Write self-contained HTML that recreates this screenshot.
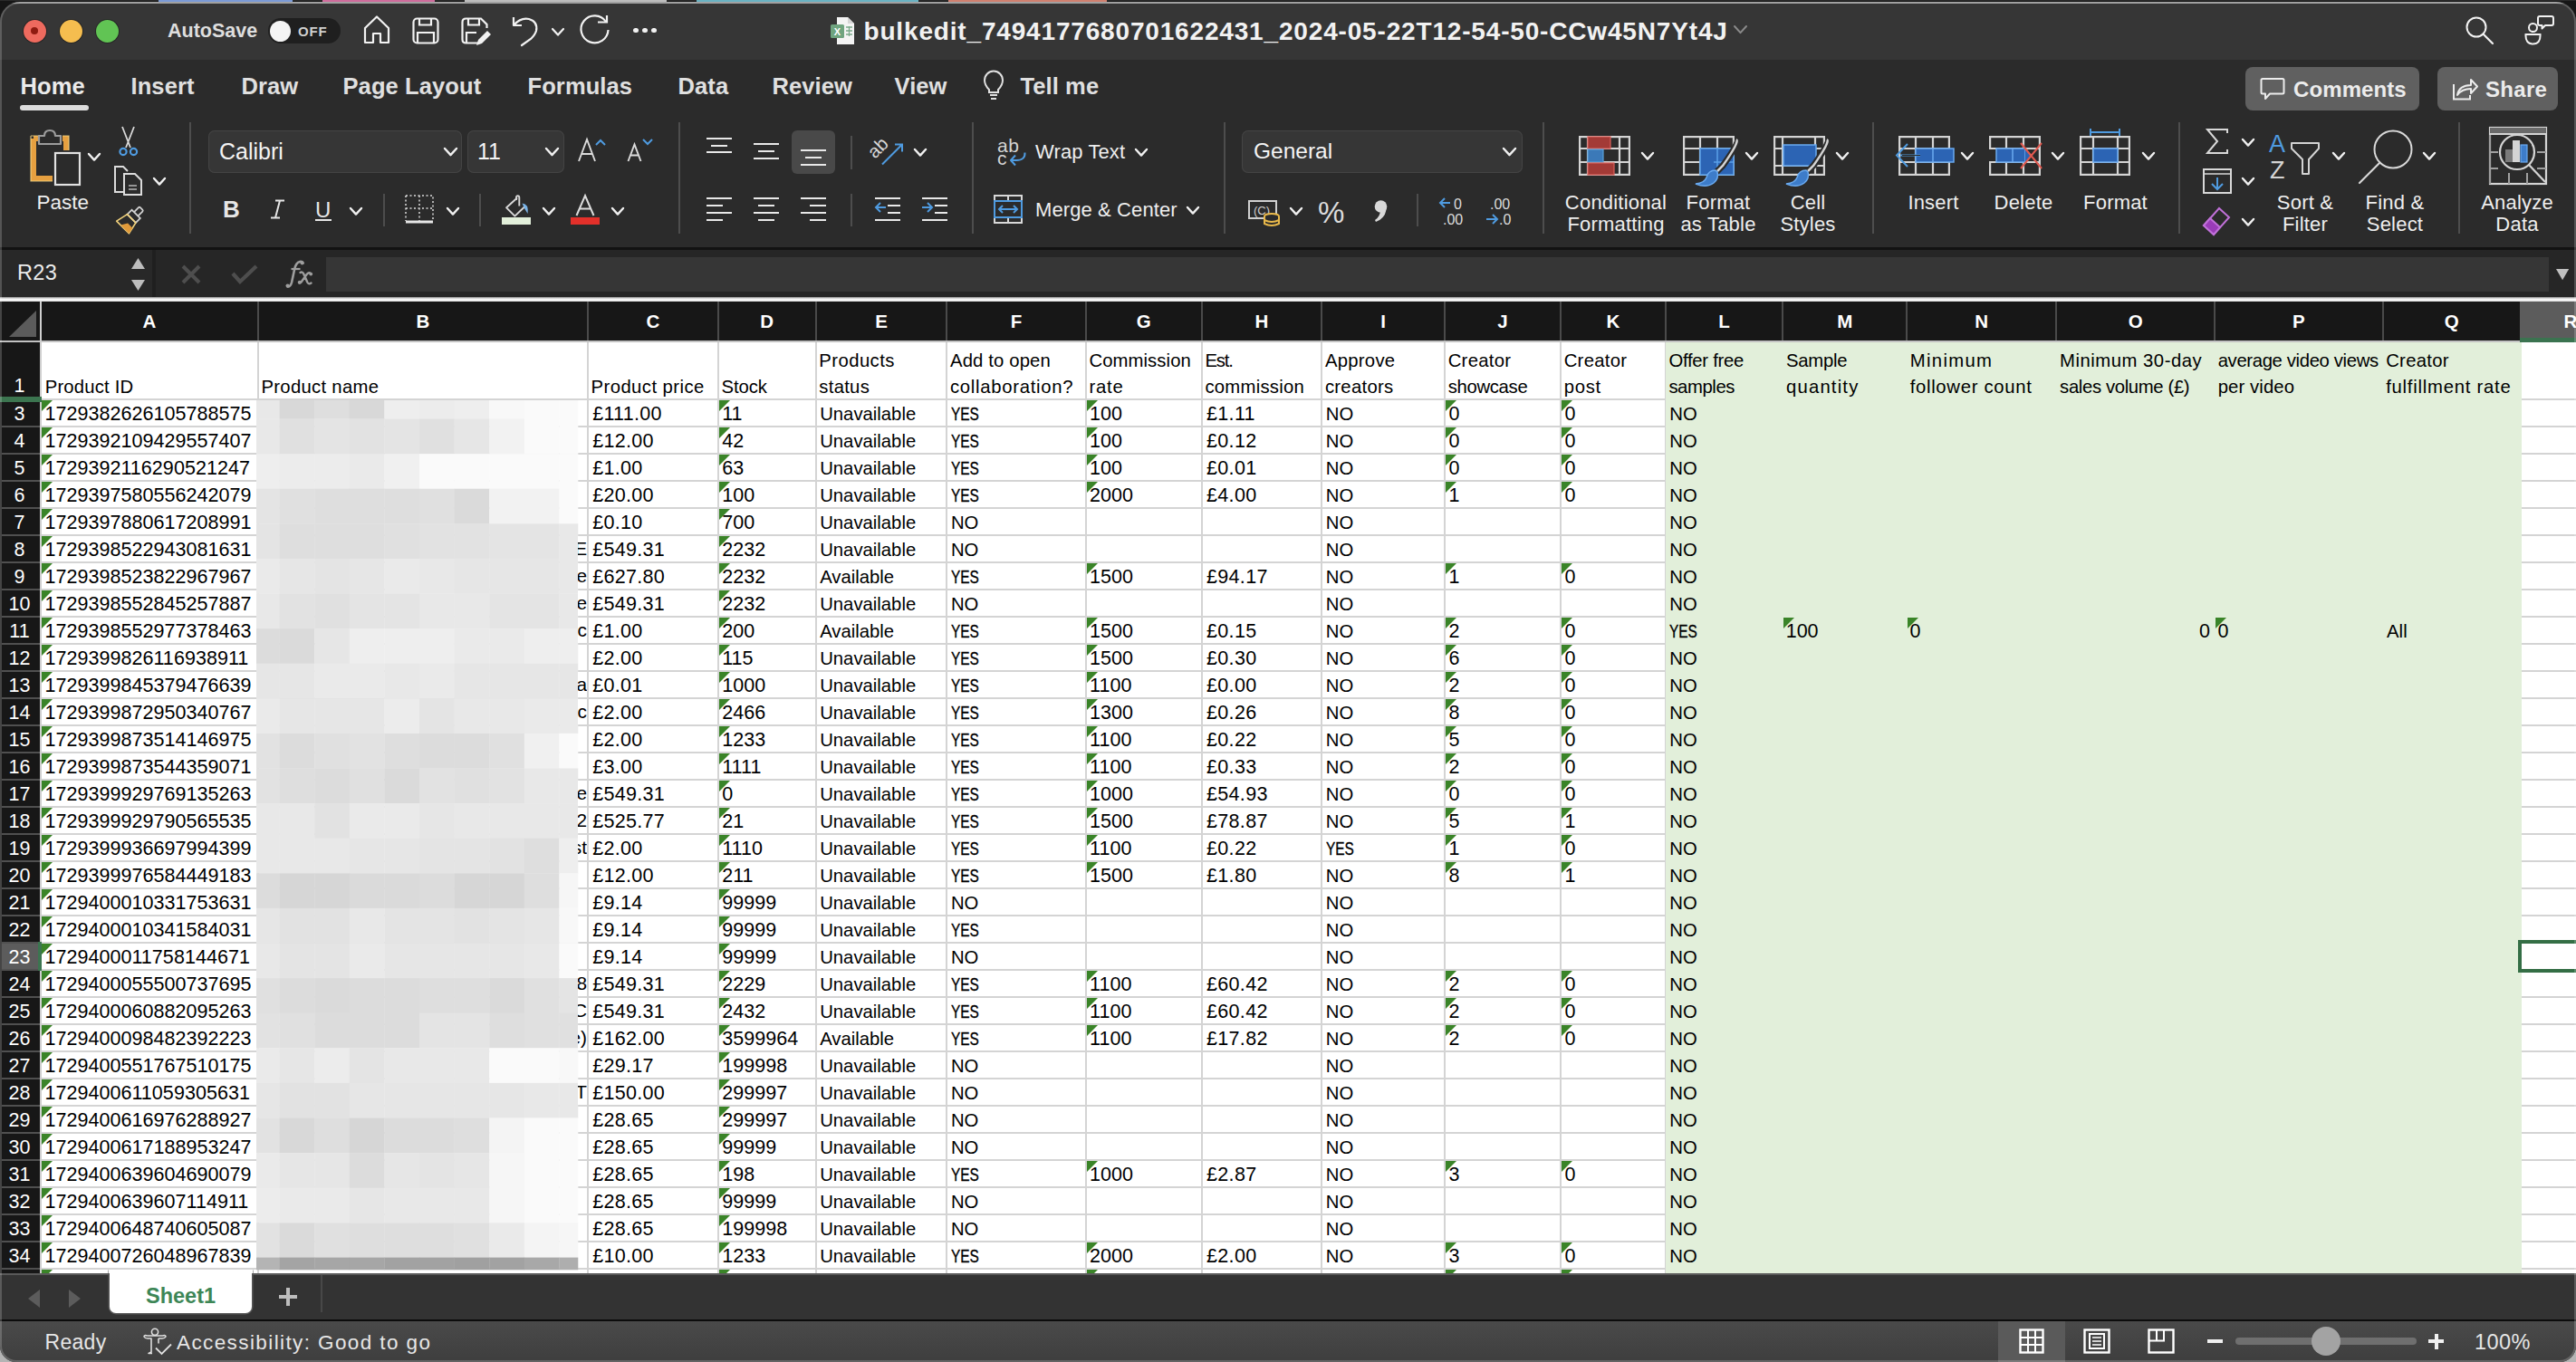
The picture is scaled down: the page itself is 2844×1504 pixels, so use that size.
<!DOCTYPE html><html><head><meta charset="utf-8"><style>
html,body{margin:0;padding:0;}
body{width:2844px;height:1504px;overflow:hidden;background:linear-gradient(#161616 0,#161616 1440px,#b4b4b4 1440px);position:relative;font-family:"Liberation Sans", sans-serif;}
.t{position:absolute;white-space:nowrap;}
.b{position:absolute;}
.s{position:absolute;overflow:visible;}
#win{position:absolute;left:0;top:0;width:2844px;height:1504px;clip-path:inset(2px 0 0 0 round 22px 22px 18px 18px);background:#2b2b2b;}
#frame{position:absolute;left:0;top:2px;width:2844px;height:1502px;border-radius:22px 22px 18px 18px;box-shadow:inset 0 0 0 2px rgba(255,255,255,0.2);pointer-events:none;}
</style></head><body>
<div class="b" style="left:0px;top:0px;width:2844px;height:1px;background:#2b2b2b;"></div><div class="b" style="left:175px;top:0px;width:148px;height:1.5px;background:#7b9ad6;"></div><div class="b" style="left:356px;top:0px;width:124px;height:1.5px;background:#cf6c9c;"></div><div class="b" style="left:513px;top:0px;width:223px;height:1.5px;background:#bdbdbd;"></div><div class="b" style="left:769px;top:0px;width:245px;height:1.5px;background:#69b2c2;"></div><div class="b" style="left:1047px;top:0px;width:175px;height:1.5px;background:#d0806f;"></div><div id="win"><div class="b" style="left:0px;top:0px;width:2844px;height:66px;background:#363636;"></div><div class="b" style="left:0px;top:2px;width:2844px;height:2px;background:#8a8a8a;"></div><div class="b" style="left:25.5px;top:21.5px;width:25px;height:25px;border-radius:50%;background:#ee6a5e;box-shadow:0 0 0 1px #262626"></div><div class="b" style="left:65.5px;top:21.5px;width:25px;height:25px;border-radius:50%;background:#f5bd4f;box-shadow:0 0 0 1px #262626"></div><div class="b" style="left:105.5px;top:21.5px;width:25px;height:25px;border-radius:50%;background:#61c454;box-shadow:0 0 0 1px #262626"></div><div class="b" style="left:34px;top:30px;width:8px;height:8px;border-radius:50%;background:#8e1b10"></div><div class="t" style="left:185.0px;top:23.5px;font-size:21.5px;line-height:21.5px;color:#dedede;font-weight:bold;letter-spacing:0px;font-family:'Liberation Sans', sans-serif;">AutoSave</div><div class="b" style="left:296px;top:20px;width:80px;height:28px;border-radius:14px;background:#1f1f1f"></div><div class="b" style="left:298px;top:22.5px;width:23px;height:23px;border-radius:50%;background:#f4f4f4"></div><div class="t" style="left:329.0px;top:26.5px;font-size:15px;line-height:15px;color:#cfcfcf;font-weight:bold;letter-spacing:0.8px;font-family:'Liberation Sans', sans-serif;">OFF</div><svg class="s" style="left:400px;top:16px" width="32" height="34" viewBox="0 0 32 34"><path d="M3,15 L16,2.5 L29,15 L29,31 L20,31 L20,21 L12,21 L12,31 L3,31 Z" fill="none" stroke="#f2f2f2" stroke-width="2.2" stroke-linejoin="round"/></svg><svg class="s" style="left:455px;top:19px" width="30" height="30" viewBox="0 0 30 30"><rect x="1.5" y="1.5" width="27" height="27" rx="4" fill="none" stroke="#f2f2f2" stroke-width="2.2"/><path d="M8,1.5 V8.5 H21 V1.5" fill="none" stroke="#f2f2f2" stroke-width="2.2"/><path d="M6,28.5 V17 H24 V28.5" fill="none" stroke="#f2f2f2" stroke-width="2.2"/></svg><svg class="s" style="left:509px;top:19px" width="34" height="32" viewBox="0 0 34 32"><path d="M19,28.5 H5.5 Q1.5,28.5 1.5,24.5 V5.5 Q1.5,1.5 5.5,1.5 H22 L28.5,8 V12" fill="none" stroke="#f2f2f2" stroke-width="2.2"/><path d="M8,1.5 V8.5 H20 V1.5" fill="none" stroke="#f2f2f2" stroke-width="2.2"/><path d="M6,28.5 V17 H17" fill="none" stroke="#f2f2f2" stroke-width="2.2"/><path d="M17,31 L19,25 L29,15 L33,19 L23,29 Z" fill="#f2f2f2"/></svg><svg class="s" style="left:563px;top:16px" width="32" height="36" viewBox="0 0 32 36"><path d="M4,3 V12 H13" fill="none" stroke="#f2f2f2" stroke-width="2.2" stroke-linejoin="round"/><path d="M4.5,11.5 Q12,3 21,5 Q31,8 29,18 Q28,22 23,27 L13,34" fill="none" stroke="#f2f2f2" stroke-width="2.2" stroke-linecap="round"/></svg><svg class="s" style="left:608.0px;top:29.7px" width="16" height="10.600000000000001" viewBox="0 0 16 10.600000000000001"><polyline points="2,2 8.0,8.600000000000001 14,2" fill="none" stroke="#f2f2f2" stroke-width="2.2" stroke-linecap="round" stroke-linejoin="round"/></svg><svg class="s" style="left:640px;top:16px" width="36" height="36" viewBox="0 0 36 36"><path d="M29,8 A15,15 0 1 0 31.5,17" fill="none" stroke="#f2f2f2" stroke-width="2.2"/><path d="M20,8.5 H30 V1" fill="none" stroke="#f2f2f2" stroke-width="2.2"/></svg><div class="b" style="left:699.4px;top:31.2px;width:5.2px;height:5.2px;border-radius:50%;background:#f2f2f2"></div><div class="b" style="left:709.4px;top:31.2px;width:5.2px;height:5.2px;border-radius:50%;background:#f2f2f2"></div><div class="b" style="left:719.4px;top:31.2px;width:5.2px;height:5.2px;border-radius:50%;background:#f2f2f2"></div><svg class="s" style="left:916px;top:18px" width="28" height="32" viewBox="0 0 28 32"><path d="M8,1 H20 L27,8 V31 H8 Z" fill="#f4f4f4"/><path d="M20,1 V8 H27" fill="#d6d6d6"/><rect x="1" y="9" width="15" height="15" rx="1.5" fill="#6fa47f"/><text x="8.5" y="21" font-size="11" font-family="Liberation Sans" font-weight="bold" fill="#fff" text-anchor="middle">X</text><path d="M18,12 H25 M18,16 H25 M18,20 H25 M21.5,11 V22" stroke="#7aa98a" stroke-width="1.3"/></svg><div class="t" style="left:953.5px;top:20.9px;font-size:28px;line-height:28px;color:#f2f2f2;font-weight:bold;letter-spacing:0.83px;font-family:'Liberation Sans', sans-serif;">bulkedit_7494177680701622431_2024-05-22T12-54-50-CCw45N7Yt4J</div><svg class="s" style="left:1912.5px;top:27.425px" width="17" height="11.15" viewBox="0 0 17 11.15"><polyline points="2,2 8.5,9.15 15,2" fill="none" stroke="#8a8a8a" stroke-width="2" stroke-linecap="round" stroke-linejoin="round"/></svg><svg class="s" style="left:2719.5px;top:16px" width="36" height="36" viewBox="0 0 36 36"><circle cx="14" cy="14" r="10.5" fill="none" stroke="#f2f2f2" stroke-width="2"/><path d="M21.5,21.5 L32,32" stroke="#f2f2f2" stroke-width="2.2" stroke-linecap="round"/></svg><svg class="s" style="left:2787px;top:16px" width="36" height="36" viewBox="0 0 36 36"><circle cx="9.5" cy="14.5" r="4.5" fill="none" stroke="#f2f2f2" stroke-width="2"/><path d="M1.5,22 H17.5 Q18,32.5 9.5,32.5 Q1,32.5 1.5,22 Z" fill="none" stroke="#f2f2f2" stroke-width="2"/><path d="M17,2 H30 Q32,2 32,4 V10 Q32,12 30,12 H23 L19.5,15.5 V12 H17 Q15,12 15,10 V4 Q15,2 17,2 Z" fill="none" stroke="#f2f2f2" stroke-width="2" stroke-linejoin="round"/></svg><div class="b" style="left:0px;top:66px;width:2844px;height:207px;background:#2b2b2b;"></div><div class="t" style="left:22.5px;top:83.0px;font-size:25.5px;line-height:25.5px;color:#ebebeb;font-weight:bold;letter-spacing:0.1px;font-family:'Liberation Sans', sans-serif;">Home</div><div class="t" style="left:144.5px;top:83.0px;font-size:25.5px;line-height:25.5px;color:#e0e0e0;font-weight:bold;letter-spacing:0.1px;font-family:'Liberation Sans', sans-serif;">Insert</div><div class="t" style="left:266.5px;top:83.0px;font-size:25.5px;line-height:25.5px;color:#e0e0e0;font-weight:bold;letter-spacing:0.1px;font-family:'Liberation Sans', sans-serif;">Draw</div><div class="t" style="left:378.5px;top:83.0px;font-size:25.5px;line-height:25.5px;color:#e0e0e0;font-weight:bold;letter-spacing:0.1px;font-family:'Liberation Sans', sans-serif;">Page Layout</div><div class="t" style="left:582.5px;top:83.0px;font-size:25.5px;line-height:25.5px;color:#e0e0e0;font-weight:bold;letter-spacing:0.1px;font-family:'Liberation Sans', sans-serif;">Formulas</div><div class="t" style="left:748.5px;top:83.0px;font-size:25.5px;line-height:25.5px;color:#e0e0e0;font-weight:bold;letter-spacing:0.1px;font-family:'Liberation Sans', sans-serif;">Data</div><div class="t" style="left:852.5px;top:83.0px;font-size:25.5px;line-height:25.5px;color:#e0e0e0;font-weight:bold;letter-spacing:0.1px;font-family:'Liberation Sans', sans-serif;">Review</div><div class="t" style="left:987.5px;top:83.0px;font-size:25.5px;line-height:25.5px;color:#e0e0e0;font-weight:bold;letter-spacing:0.1px;font-family:'Liberation Sans', sans-serif;">View</div><div class="t" style="left:1126.5px;top:83.0px;font-size:25.5px;line-height:25.5px;color:#e0e0e0;font-weight:bold;letter-spacing:0.1px;font-family:'Liberation Sans', sans-serif;">Tell me</div><div class="b" style="left:22px;top:116px;width:76px;height:6px;border-radius:3px;background:#dcdcdc"></div><svg class="s" style="left:1085px;top:78px" width="24" height="34" viewBox="0 0 24 34"><path d="M7,21 Q2,16 2,10.5 A10,10 0 0 1 22,10.5 Q22,16 17,21 V24 H7 Z" fill="none" stroke="#e0e0e0" stroke-width="2"/><path d="M8,27 H16 M9,31 H15" stroke="#e0e0e0" stroke-width="2"/></svg><div class="b" style="left:2479px;top:74px;width:192px;height:48px;border-radius:8px;background:#606060"></div><svg class="s" style="left:2495px;top:85px" width="28" height="27" viewBox="0 0 28 27"><path d="M3,2 H25 Q26.5,2 26.5,3.5 V17 Q26.5,18.5 25,18.5 H11 L6,24 V18.5 H3 Q1.5,18.5 1.5,17 V3.5 Q1.5,2 3,2 Z" fill="none" stroke="#ececec" stroke-width="2" stroke-linejoin="round"/></svg><div class="t" style="left:2532.0px;top:87.3px;font-size:24px;line-height:24px;color:#ececec;font-weight:bold;letter-spacing:0.1px;font-family:'Liberation Sans', sans-serif;">Comments</div><div class="b" style="left:2691px;top:74px;width:133px;height:48px;border-radius:8px;background:#606060"></div><svg class="s" style="left:2707px;top:84px" width="30" height="28" viewBox="0 0 30 28"><path d="M2,9 V25.5 H20 V21" fill="none" stroke="#ececec" stroke-width="2"/><path d="M6,21 Q8,10 21,10 V4 L28,11.5 L21,19 V14 Q11,14 6,21 Z" fill="none" stroke="#ececec" stroke-width="2" stroke-linejoin="round"/></svg><div class="t" style="left:2744.0px;top:87.3px;font-size:24px;line-height:24px;color:#ececec;font-weight:bold;letter-spacing:0.3px;font-family:'Liberation Sans', sans-serif;">Share</div><div class="b" style="left:209px;top:135px;width:2px;height:123px;background:#4d4d4d;"></div><div class="b" style="left:749px;top:135px;width:2px;height:123px;background:#4d4d4d;"></div><div class="b" style="left:1073px;top:135px;width:2px;height:123px;background:#4d4d4d;"></div><div class="b" style="left:1351px;top:135px;width:2px;height:123px;background:#4d4d4d;"></div><div class="b" style="left:1703px;top:135px;width:2px;height:123px;background:#4d4d4d;"></div><div class="b" style="left:2067px;top:135px;width:2px;height:123px;background:#4d4d4d;"></div><div class="b" style="left:2405px;top:135px;width:2px;height:123px;background:#4d4d4d;"></div><div class="b" style="left:2714px;top:135px;width:2px;height:123px;background:#4d4d4d;"></div><div class="b" style="left:423px;top:214px;width:2px;height:36px;background:#4d4d4d;"></div><div class="b" style="left:529px;top:214px;width:2px;height:36px;background:#4d4d4d;"></div><div class="b" style="left:939px;top:150px;width:2px;height:37px;background:#4d4d4d;"></div><div class="b" style="left:939px;top:214px;width:2px;height:36px;background:#4d4d4d;"></div><div class="b" style="left:1564px;top:214px;width:2px;height:36px;background:#4d4d4d;"></div><svg class="s" style="left:20px;top:130px" width="80" height="80" viewBox="0 0 80 80"><path d="M17,23 H25 M49,23 H53 V36 M17,23 V67 H38" transform="translate(0,0)" fill="none" stroke="#e6a040" stroke-width="6"/><path d="M14,20 H25 M49,20 H56 V36 M14,20 V70 H38" fill="none" stroke="#f6d888" stroke-width="1.2" opacity="0.8"/><path d="M23,29 V20 H29 Q29,14 35,14 Q41,14 41,20 H47 V29 Z" fill="#2b2b2b" stroke="#9c9c9c" stroke-width="2.2" stroke-linejoin="round"/><rect x="41" y="39" width="27" height="35" fill="#2b2b2b" stroke="#e2e2e2" stroke-width="2.2"/></svg><div class="t" style="left:40.5px;top:213.0px;font-size:22.5px;line-height:22.5px;color:#eeeeee;font-weight:normal;letter-spacing:0px;font-family:'Liberation Sans', sans-serif;">Paste</div><svg class="s" style="left:96.0px;top:167.7px" width="16" height="10.600000000000001" viewBox="0 0 16 10.600000000000001"><polyline points="2,2 8.0,8.600000000000001 14,2" fill="none" stroke="#f0f0f0" stroke-width="2.4" stroke-linecap="round" stroke-linejoin="round"/></svg><svg class="s" style="left:128px;top:139px" width="28" height="36" viewBox="0 0 28 36"><path d="M7,1 L16,24 M20,1 L11,24" stroke="#d8d8d8" stroke-width="1.8"/><circle cx="8" cy="28.5" r="3.6" fill="none" stroke="#4f9be0" stroke-width="2.2"/><circle cx="19.5" cy="28.5" r="3.6" fill="none" stroke="#4f9be0" stroke-width="2.2"/></svg><svg class="s" style="left:125px;top:183px" width="36" height="36" viewBox="0 0 36 36"><path d="M11,29 H2 V1 H11 L16,6" fill="none" stroke="#dcdcdc" stroke-width="2"/><path d="M12,9 H24 L31,16 V32 H12 Z" fill="none" stroke="#dcdcdc" stroke-width="2"/><path d="M17,22 H26 M17,26 H26" stroke="#b8b8b8" stroke-width="1.6"/></svg><svg class="s" style="left:168.0px;top:194.7px" width="16" height="10.600000000000001" viewBox="0 0 16 10.600000000000001"><polyline points="2,2 8.0,8.600000000000001 14,2" fill="none" stroke="#f0f0f0" stroke-width="2.4" stroke-linecap="round" stroke-linejoin="round"/></svg><svg class="s" style="left:120px;top:220px" width="44" height="44" viewBox="0 0 44 44"><g transform="translate(25.5,21) rotate(45) scale(0.88)"><rect x="-3.5" y="-17" width="7" height="10" rx="1.5" fill="none" stroke="#d2d2d2" stroke-width="2"/><rect x="-7.5" y="-7.5" width="15" height="8" fill="#2b2b2b" stroke="#d2d2d2" stroke-width="2"/><path d="M-7.5,0.5 L7.5,0.5 L11,16 L-11,16 Z" fill="none" stroke="#f2d27c" stroke-width="1.8" stroke-linejoin="round"/><path d="M1,8 L9.5,8 L11,16 L-4,16 Z" fill="#e09a3a"/></g></svg><div class="b" style="left:230px;top:144px;width:280px;height:47px;border-radius:7px;background:#363636;box-shadow:inset 0 0 0 1px #444"></div><div class="t" style="left:242.0px;top:154.8px;font-size:25px;line-height:25px;color:#f4f4f4;font-weight:normal;letter-spacing:0px;font-family:'Liberation Sans', sans-serif;">Calibri</div><svg class="s" style="left:488.5px;top:162.425px" width="17" height="11.15" viewBox="0 0 17 11.15"><polyline points="2,2 8.5,9.15 15,2" fill="none" stroke="#f0f0f0" stroke-width="2.4" stroke-linecap="round" stroke-linejoin="round"/></svg><div class="b" style="left:516px;top:144px;width:107px;height:47px;border-radius:7px;background:#363636;box-shadow:inset 0 0 0 1px #444"></div><div class="t" style="left:527.0px;top:154.8px;font-size:25px;line-height:25px;color:#f4f4f4;font-weight:normal;letter-spacing:0px;font-family:'Liberation Sans', sans-serif;">11</div><svg class="s" style="left:600.5px;top:162.425px" width="17" height="11.15" viewBox="0 0 17 11.15"><polyline points="2,2 8.5,9.15 15,2" fill="none" stroke="#f0f0f0" stroke-width="2.4" stroke-linecap="round" stroke-linejoin="round"/></svg><svg class="s" style="left:634px;top:148px" width="36" height="32" viewBox="0 0 36 32"><path d="M5,30 L14,6 L23,30 M8.3,22 H19.7" fill="none" stroke="#dcdcdc" stroke-width="1.9"/></svg><svg class="s" style="left:656px;top:153px" width="14" height="9" viewBox="0 0 14 9"><polyline points="2,7 7,2 12,7" fill="none" stroke="#4f9be0" stroke-width="2"/></svg><svg class="s" style="left:690px;top:156px" width="30" height="26" viewBox="0 0 30 26"><path d="M3.5,22 L10.5,3.5 L17.5,22 M6,15.5 H15" fill="none" stroke="#dcdcdc" stroke-width="1.9"/></svg><svg class="s" style="left:708px;top:152px" width="14" height="9" viewBox="0 0 14 9"><polyline points="2,2 7,7 12,2" fill="none" stroke="#4f9be0" stroke-width="2"/></svg><div class="t" style="left:246.0px;top:218.0px;font-size:26px;line-height:26px;color:#e6e6e6;font-weight:bold;letter-spacing:0px;font-family:'Liberation Sans', sans-serif;">B</div><svg class="s" style="left:296px;top:219px" width="20" height="24" viewBox="0 0 20 24"><path d="M8,2.5 H18 M13,2.5 L8,21.5 M3,21.5 H13" fill="none" stroke="#e6e6e6" stroke-width="2"/></svg><div class="t" style="left:348.0px;top:219.7px;font-size:24px;line-height:24px;color:#e6e6e6;font-weight:normal;letter-spacing:0px;font-family:'Liberation Sans', sans-serif;">U</div><div class="b" style="left:348px;top:242px;width:18px;height:2px;background:#e6e6e6;"></div><svg class="s" style="left:385.0px;top:227.7px" width="16" height="10.600000000000001" viewBox="0 0 16 10.600000000000001"><polyline points="2,2 8.0,8.600000000000001 14,2" fill="none" stroke="#f0f0f0" stroke-width="2.4" stroke-linecap="round" stroke-linejoin="round"/></svg><svg class="s" style="left:446px;top:214px" width="34" height="34" viewBox="0 0 34 34"><path d="M2,2 H32 V30 M2,2 V30 M17,2 V30 M2,16 H32" fill="none" stroke="#dcdcdc" stroke-width="1.5" stroke-dasharray="2,2.5"/><rect x="2" y="29.5" width="30" height="3" fill="#e6e6e6"/></svg><svg class="s" style="left:492.0px;top:227.7px" width="16" height="10.600000000000001" viewBox="0 0 16 10.600000000000001"><polyline points="2,2 8.0,8.600000000000001 14,2" fill="none" stroke="#f0f0f0" stroke-width="2.4" stroke-linecap="round" stroke-linejoin="round"/></svg><svg class="s" style="left:550px;top:210px" width="40" height="32" viewBox="0 0 40 32"><g transform="translate(-550,-210)"><path d="M571,218.5 L559.1,229.3 L568.4,238.6 L579.8,227.7" fill="none" stroke="#d8d8d8" stroke-width="1.9" stroke-linejoin="round"/><path d="M573.3,227.5 V218.2 Q573.3,216.2 571.6,216.2 Q570,216.2 570,218.2 V221" fill="none" stroke="#d8d8d8" stroke-width="1.9"/><path d="M576.5,224.5 Q584,225 582.6,236 Q578.5,230 576.5,224.5 Z" fill="#7ab4e8"/></g></svg><div class="b" style="left:554px;top:240px;width:32px;height:8px;background:#e2efda;"></div><svg class="s" style="left:598.0px;top:227.7px" width="16" height="10.600000000000001" viewBox="0 0 16 10.600000000000001"><polyline points="2,2 8.0,8.600000000000001 14,2" fill="none" stroke="#f0f0f0" stroke-width="2.4" stroke-linecap="round" stroke-linejoin="round"/></svg><svg class="s" style="left:630px;top:210px" width="32" height="32" viewBox="0 0 32 32"><path d="M6.5,28 L16,6 L25.5,28 M10,20.5 H22" fill="none" stroke="#dcdcdc" stroke-width="2"/></svg><div class="b" style="left:630px;top:240px;width:32px;height:8px;background:#e3302a;"></div><svg class="s" style="left:674.0px;top:227.7px" width="16" height="10.600000000000001" viewBox="0 0 16 10.600000000000001"><polyline points="2,2 8.0,8.600000000000001 14,2" fill="none" stroke="#f0f0f0" stroke-width="2.4" stroke-linecap="round" stroke-linejoin="round"/></svg><div class="b" style="left:780px;top:152px;width:28px;height:2px;background:#e8e8e8;"></div><div class="b" style="left:785px;top:160px;width:18px;height:2px;background:#e8e8e8;"></div><div class="b" style="left:780px;top:167px;width:28px;height:2px;background:#e8e8e8;"></div><div class="b" style="left:832px;top:158px;width:28px;height:2px;background:#e8e8e8;"></div><div class="b" style="left:837px;top:166px;width:18px;height:2px;background:#e8e8e8;"></div><div class="b" style="left:832px;top:174px;width:28px;height:2px;background:#e8e8e8;"></div><div class="b" style="left:874px;top:144px;width:48px;height:48px;border-radius:6px;background:#494949"></div><div class="b" style="left:884px;top:165px;width:28px;height:2px;background:#e8e8e8;"></div><div class="b" style="left:889px;top:173px;width:18px;height:2px;background:#e8e8e8;"></div><div class="b" style="left:884px;top:181px;width:28px;height:2px;background:#e8e8e8;"></div><div class="b" style="left:780px;top:218px;width:28px;height:2px;background:#e8e8e8;"></div><div class="b" style="left:780px;top:226px;width:18px;height:2px;background:#e8e8e8;"></div><div class="b" style="left:780px;top:234px;width:28px;height:2px;background:#e8e8e8;"></div><div class="b" style="left:780px;top:242px;width:18px;height:2px;background:#e8e8e8;"></div><div class="b" style="left:832px;top:218px;width:28px;height:2px;background:#e8e8e8;"></div><div class="b" style="left:837px;top:226px;width:18px;height:2px;background:#e8e8e8;"></div><div class="b" style="left:832px;top:234px;width:28px;height:2px;background:#e8e8e8;"></div><div class="b" style="left:837px;top:242px;width:18px;height:2px;background:#e8e8e8;"></div><div class="b" style="left:884px;top:218px;width:28px;height:2px;background:#e8e8e8;"></div><div class="b" style="left:894px;top:226px;width:18px;height:2px;background:#e8e8e8;"></div><div class="b" style="left:884px;top:234px;width:28px;height:2px;background:#e8e8e8;"></div><div class="b" style="left:894px;top:242px;width:18px;height:2px;background:#e8e8e8;"></div><svg class="s" style="left:955px;top:145px" width="50" height="45" viewBox="0 0 50 45"><text x="0" y="0" font-size="20.5" font-family="Liberation Sans" fill="#d8d8d8" transform="translate(11,31) rotate(-45)">ab</text><path d="M19,36.5 L41,14.5 M33,14.5 H41 V22.5" fill="none" stroke="#4f9be0" stroke-width="2"/></svg><svg class="s" style="left:1008.0px;top:162.7px" width="16" height="10.600000000000001" viewBox="0 0 16 10.600000000000001"><polyline points="2,2 8.0,8.600000000000001 14,2" fill="none" stroke="#f0f0f0" stroke-width="2.4" stroke-linecap="round" stroke-linejoin="round"/></svg><div class="b" style="left:966px;top:218px;width:28px;height:2px;background:#e8e8e8;"></div><div class="b" style="left:980px;top:226px;width:14px;height:2px;background:#e8e8e8;"></div><div class="b" style="left:980px;top:234px;width:14px;height:2px;background:#e8e8e8;"></div><div class="b" style="left:966px;top:242px;width:28px;height:2px;background:#e8e8e8;"></div><svg class="s" style="left:964px;top:222px" width="16" height="14" viewBox="0 0 16 14"><path d="M14,7 H3 M8,2 L3,7 L8,12" fill="none" stroke="#4f9be0" stroke-width="2"/></svg><div class="b" style="left:1018px;top:218px;width:28px;height:2px;background:#e8e8e8;"></div><div class="b" style="left:1032px;top:226px;width:14px;height:2px;background:#e8e8e8;"></div><div class="b" style="left:1032px;top:234px;width:14px;height:2px;background:#e8e8e8;"></div><div class="b" style="left:1018px;top:242px;width:28px;height:2px;background:#e8e8e8;"></div><svg class="s" style="left:1016px;top:222px" width="16" height="14" viewBox="0 0 16 14"><path d="M2,7 H13 M8,2 L13,7 L8,12" fill="none" stroke="#4f9be0" stroke-width="2"/></svg><svg class="s" style="left:1098px;top:146px" width="40" height="42" viewBox="0 0 40 42"><text x="3" y="21.5" font-size="21" font-family="Liberation Sans" fill="#d4d4d4" letter-spacing="0.5">ab</text><text x="3" y="36" font-size="21" font-family="Liberation Sans" fill="#d4d4d4">c</text><path d="M33.5,22.5 Q34,31 24,31 H18 M23,25.5 L18,31 L23,36.5" fill="none" stroke="#4f9be0" stroke-width="2" stroke-linejoin="round"/></svg><div class="t" style="left:1143.0px;top:157.4px;font-size:22px;line-height:22px;color:#eeeeee;font-weight:normal;letter-spacing:0.1px;font-family:'Liberation Sans', sans-serif;">Wrap Text</div><svg class="s" style="left:1252.0px;top:162.7px" width="16" height="10.600000000000001" viewBox="0 0 16 10.600000000000001"><polyline points="2,2 8.0,8.600000000000001 14,2" fill="none" stroke="#f0f0f0" stroke-width="2.4" stroke-linecap="round" stroke-linejoin="round"/></svg><svg class="s" style="left:1096px;top:214px" width="34" height="34" viewBox="0 0 34 34"><rect x="2" y="2" width="30" height="30" fill="none" stroke="#d8d8d8" stroke-width="2"/><path d="M17,2 V8 M17,26 V32" stroke="#d8d8d8" stroke-width="2"/><rect x="2" y="8" width="30" height="18" fill="none" stroke="#4f9be0" stroke-width="2"/><path d="M7,17 H27 M11,13 L7,17 L11,21 M23,13 L27,17 L23,21" fill="none" stroke="#4f9be0" stroke-width="2"/></svg><div class="t" style="left:1143.0px;top:221.4px;font-size:22px;line-height:22px;color:#eeeeee;font-weight:normal;letter-spacing:0.1px;font-family:'Liberation Sans', sans-serif;">Merge &amp; Center</div><svg class="s" style="left:1309.0px;top:226.7px" width="16" height="10.600000000000001" viewBox="0 0 16 10.600000000000001"><polyline points="2,2 8.0,8.600000000000001 14,2" fill="none" stroke="#f0f0f0" stroke-width="2.4" stroke-linecap="round" stroke-linejoin="round"/></svg><div class="b" style="left:1371px;top:144px;width:310px;height:47px;border-radius:7px;background:#363636;box-shadow:inset 0 0 0 1px #444"></div><div class="t" style="left:1384.0px;top:155.3px;font-size:24.5px;line-height:24.5px;color:#f4f4f4;font-weight:normal;letter-spacing:0px;font-family:'Liberation Sans', sans-serif;">General</div><svg class="s" style="left:1657.5px;top:162.425px" width="17" height="11.15" viewBox="0 0 17 11.15"><polyline points="2,2 8.5,9.15 15,2" fill="none" stroke="#f0f0f0" stroke-width="2.4" stroke-linecap="round" stroke-linejoin="round"/></svg><svg class="s" style="left:1377px;top:219px" width="38" height="32" viewBox="0 0 38 32"><rect x="2" y="3" width="30" height="19" fill="none" stroke="#d0d0d0" stroke-width="2"/><text x="7" y="18" font-size="13" font-family="Liberation Sans" fill="#d0d0d0">(C)</text><ellipse cx="27" cy="20" rx="8" ry="3" fill="#2b2b2b" stroke="#e8b84a" stroke-width="2"/><path d="M19,20 V28 Q27,32 35,28 V20 M19,24 Q27,28 35,24" fill="#2b2b2b" stroke="#e8b84a" stroke-width="2"/></svg><svg class="s" style="left:1423.0px;top:227.7px" width="16" height="10.600000000000001" viewBox="0 0 16 10.600000000000001"><polyline points="2,2 8.0,8.600000000000001 14,2" fill="none" stroke="#f0f0f0" stroke-width="2.4" stroke-linecap="round" stroke-linejoin="round"/></svg><div class="t" style="left:1455.0px;top:218.1px;font-size:33px;line-height:33px;color:#dcdcdc;font-weight:normal;letter-spacing:0px;font-family:'Liberation Sans', sans-serif;">%</div><svg class="s" style="left:1514px;top:218px" width="20" height="30" viewBox="0 0 20 30"><circle cx="10.5" cy="10" r="6.8" fill="#d8d8d8"/><path d="M16.5,11 Q17,22 5,27 L4,25 Q10,21 10,14 Z" fill="#d8d8d8"/></svg><svg class="s" style="left:1587px;top:214px" width="36" height="36" viewBox="0 0 36 36"><path d="M14,10 H3 M8,5 L3,10 L8,15" fill="none" stroke="#4f9be0" stroke-width="2"/><text x="18" y="17" font-size="16" font-family="Liberation Sans" fill="#dcdcdc">0</text><text x="6" y="34" font-size="16" font-family="Liberation Sans" fill="#dcdcdc">.00</text></svg><svg class="s" style="left:1639px;top:214px" width="36" height="36" viewBox="0 0 36 36"><text x="6" y="17" font-size="16" font-family="Liberation Sans" fill="#dcdcdc">.00</text><path d="M2,28 H14 M9,23 L14,28 L9,33" fill="none" stroke="#4f9be0" stroke-width="2"/><text x="16" y="34" font-size="16" font-family="Liberation Sans" fill="#dcdcdc">.0</text></svg><svg class="s" style="left:1743px;top:150px" width="57" height="44" viewBox="0 0 57 44"><rect x="1.1" y="1.1" width="54.8" height="41.8" fill="none" stroke="#d4d4d4" stroke-width="2.2"/><path d="M10,0 V44" stroke="#d4d4d4" stroke-width="2.2"/><path d="M45,0 V44" stroke="#d4d4d4" stroke-width="2.2"/><path d="M0,14 H57" stroke="#d4d4d4" stroke-width="2.2"/><path d="M0,29 H57" stroke="#d4d4d4" stroke-width="2.2"/><rect x="10" y="1" width="25" height="13" fill="#a33a36" stroke="#d9605a" stroke-width="1.2"/><rect x="10" y="15" width="17" height="14" fill="#3b79b8" stroke="#5aa0d8" stroke-width="1.2"/><rect x="10" y="30" width="29" height="13" fill="#a33a36" stroke="#d9605a" stroke-width="1.2"/></svg><svg class="s" style="left:1811.0px;top:166.7px" width="16" height="10.600000000000001" viewBox="0 0 16 10.600000000000001"><polyline points="2,2 8.0,8.600000000000001 14,2" fill="none" stroke="#f0f0f0" stroke-width="2.4" stroke-linecap="round" stroke-linejoin="round"/></svg><div class="t" style="left:1634.0px;width:300px;text-align:center;top:213.0px;font-size:22px;line-height:22px;color:#eeeeee;font-weight:normal;letter-spacing:0.2px;">Conditional</div><div class="t" style="left:1634.0px;width:300px;text-align:center;top:236.8px;font-size:22px;line-height:22px;color:#eeeeee;font-weight:normal;letter-spacing:0.2px;">Formatting</div><svg class="s" style="left:1858px;top:150px" width="62" height="56" viewBox="0 0 62 56"><rect x="1.1" y="1.1" width="54.8" height="41.8" fill="none" stroke="#d4d4d4" stroke-width="2.2"/><path d="M19,0 V44" stroke="#d4d4d4" stroke-width="2.2"/><path d="M38,0 V44" stroke="#d4d4d4" stroke-width="2.2"/><path d="M0,14 H57" stroke="#d4d4d4" stroke-width="2.2"/><path d="M0,29 H57" stroke="#d4d4d4" stroke-width="2.2"/><rect x="19" y="14" width="37" height="29" fill="#2c64b4" stroke="#5aa0e8" stroke-width="1.5"/><path d="M34,29 H56 M38,14 V43" stroke="#5aa0e8" stroke-width="1.5"/><path d="M60,5 Q62,8 44,33 L37,40" fill="none" stroke="#2b2b2b" stroke-width="7"/><path d="M59,4 Q63,6 44,33 L38,39" fill="none" stroke="#d4d4d4" stroke-width="2.5"/><path d="M36,38 Q28,38 26,46 Q24,52 14,53 Q26,58 34,52 Q40,47 38,40 Z" fill="#3d7cc9" stroke="#6aaaf0" stroke-width="1.5"/></svg><svg class="s" style="left:1926.0px;top:166.7px" width="16" height="10.600000000000001" viewBox="0 0 16 10.600000000000001"><polyline points="2,2 8.0,8.600000000000001 14,2" fill="none" stroke="#f0f0f0" stroke-width="2.4" stroke-linecap="round" stroke-linejoin="round"/></svg><div class="t" style="left:1747.0px;width:300px;text-align:center;top:213.0px;font-size:22px;line-height:22px;color:#eeeeee;font-weight:normal;letter-spacing:0.2px;">Format</div><div class="t" style="left:1747.0px;width:300px;text-align:center;top:236.8px;font-size:22px;line-height:22px;color:#eeeeee;font-weight:normal;letter-spacing:0.2px;">as Table</div><svg class="s" style="left:1958px;top:150px" width="62" height="56" viewBox="0 0 62 56"><rect x="1.1" y="1.1" width="54.8" height="41.8" fill="none" stroke="#d4d4d4" stroke-width="2.2"/><path d="M10,0 V44" stroke="#d4d4d4" stroke-width="2.2"/><path d="M46,0 V44" stroke="#d4d4d4" stroke-width="2.2"/><path d="M0,14 H57" stroke="#d4d4d4" stroke-width="2.2"/><path d="M0,33 H57" stroke="#d4d4d4" stroke-width="2.2"/><rect x="11" y="10" width="36" height="23" fill="#2c64b4" stroke="#6aaaf0" stroke-width="1.5"/><path d="M60,5 Q62,8 44,33 L37,40" fill="none" stroke="#2b2b2b" stroke-width="7"/><path d="M59,4 Q63,6 44,33 L38,39" fill="none" stroke="#d4d4d4" stroke-width="2.5"/><path d="M36,38 Q28,38 26,46 Q24,52 14,53 Q26,58 34,52 Q40,47 38,40 Z" fill="#3d7cc9" stroke="#6aaaf0" stroke-width="1.5"/></svg><svg class="s" style="left:2026.0px;top:166.7px" width="16" height="10.600000000000001" viewBox="0 0 16 10.600000000000001"><polyline points="2,2 8.0,8.600000000000001 14,2" fill="none" stroke="#f0f0f0" stroke-width="2.4" stroke-linecap="round" stroke-linejoin="round"/></svg><div class="t" style="left:1846.0px;width:300px;text-align:center;top:213.0px;font-size:22px;line-height:22px;color:#eeeeee;font-weight:normal;letter-spacing:0.2px;">Cell</div><div class="t" style="left:1846.0px;width:300px;text-align:center;top:236.8px;font-size:22px;line-height:22px;color:#eeeeee;font-weight:normal;letter-spacing:0.2px;">Styles</div><svg class="s" style="left:2092px;top:150px" width="66" height="44" viewBox="0 0 66 44"><g transform="translate(4,0)"><rect x="1.1" y="1.1" width="54.8" height="41.8" fill="none" stroke="#d4d4d4" stroke-width="2.2"/><path d="M19,0 V44" stroke="#d4d4d4" stroke-width="2.2"/><path d="M38,0 V44" stroke="#d4d4d4" stroke-width="2.2"/><path d="M0,14 H57" stroke="#d4d4d4" stroke-width="2.2"/><path d="M0,29 H57" stroke="#d4d4d4" stroke-width="2.2"/></g><rect x="23" y="14" width="42" height="15" fill="#2c64b4" stroke="#6aaaf0" stroke-width="1.5"/><path d="M42,14 V29" stroke="#6aaaf0" stroke-width="1.5"/><path d="M28,21.5 H6 M14,9 L2,21.5 L14,34" fill="none" stroke="#4f9be0" stroke-width="2"/><path d="M8,21.5 H28" stroke="#2b2b2b" stroke-width="1"/></svg><svg class="s" style="left:2164.0px;top:166.7px" width="16" height="10.600000000000001" viewBox="0 0 16 10.600000000000001"><polyline points="2,2 8.0,8.600000000000001 14,2" fill="none" stroke="#f0f0f0" stroke-width="2.4" stroke-linecap="round" stroke-linejoin="round"/></svg><div class="t" style="left:1984.5px;width:300px;text-align:center;top:213.0px;font-size:22px;line-height:22px;color:#eeeeee;font-weight:normal;letter-spacing:0.2px;">Insert</div><svg class="s" style="left:2196px;top:150px" width="60" height="44" viewBox="0 0 60 44"><rect x="1.1" y="1.1" width="54.8" height="41.8" fill="none" stroke="#d4d4d4" stroke-width="2.2"/><path d="M19,0 V44" stroke="#d4d4d4" stroke-width="2.2"/><path d="M38,0 V44" stroke="#d4d4d4" stroke-width="2.2"/><path d="M0,14 H57" stroke="#d4d4d4" stroke-width="2.2"/><path d="M0,29 H57" stroke="#d4d4d4" stroke-width="2.2"/><rect x="8" y="14" width="32" height="15" fill="#2c64b4" stroke="#6aaaf0" stroke-width="1.5"/><path d="M40,14 L46,21.5 L40,29" fill="#2c64b4"/><path d="M26,14 V29" stroke="#6aaaf0" stroke-width="1.5"/><rect x="0" y="15" width="7" height="13" fill="#2b2b2b"/><path d="M35,8 L58,36 M58,8 L35,36" stroke="#e05a50" stroke-width="2"/></svg><svg class="s" style="left:2264.0px;top:166.7px" width="16" height="10.600000000000001" viewBox="0 0 16 10.600000000000001"><polyline points="2,2 8.0,8.600000000000001 14,2" fill="none" stroke="#f0f0f0" stroke-width="2.4" stroke-linecap="round" stroke-linejoin="round"/></svg><div class="t" style="left:2084.0px;width:300px;text-align:center;top:213.0px;font-size:22px;line-height:22px;color:#eeeeee;font-weight:normal;letter-spacing:0.2px;">Delete</div><svg class="s" style="left:2296px;top:140px" width="57" height="56" viewBox="0 0 57 56"><g transform="translate(0,10)"><rect x="1.1" y="1.1" width="53.8" height="41.8" fill="none" stroke="#d4d4d4" stroke-width="2.2"/><path d="M15,0 V44" stroke="#d4d4d4" stroke-width="2.2"/><path d="M42,0 V44" stroke="#d4d4d4" stroke-width="2.2"/><path d="M0,14 H56" stroke="#d4d4d4" stroke-width="2.2"/><path d="M0,29 H56" stroke="#d4d4d4" stroke-width="2.2"/><rect x="15" y="14" width="27" height="15" fill="#2c64b4" stroke="#6aaaf0" stroke-width="1.5"/></g><path d="M12,6 H44 M12,2 V10 M44,2 V10" stroke="#4f9be0" stroke-width="2"/></svg><svg class="s" style="left:2364.0px;top:166.7px" width="16" height="10.600000000000001" viewBox="0 0 16 10.600000000000001"><polyline points="2,2 8.0,8.600000000000001 14,2" fill="none" stroke="#f0f0f0" stroke-width="2.4" stroke-linecap="round" stroke-linejoin="round"/></svg><div class="t" style="left:2185.5px;width:300px;text-align:center;top:213.0px;font-size:22px;line-height:22px;color:#eeeeee;font-weight:normal;letter-spacing:0.2px;">Format</div><svg class="s" style="left:2434px;top:141px" width="28" height="31" viewBox="0 0 28 31"><path d="M25,6 V2 H3 L14,15 L3,28 H25 V24" fill="none" stroke="#d8d8d8" stroke-width="2"/></svg><svg class="s" style="left:2474.0px;top:151.7px" width="16" height="10.600000000000001" viewBox="0 0 16 10.600000000000001"><polyline points="2,2 8.0,8.600000000000001 14,2" fill="none" stroke="#f0f0f0" stroke-width="2.4" stroke-linecap="round" stroke-linejoin="round"/></svg><svg class="s" style="left:2431px;top:185px" width="34" height="30" viewBox="0 0 34 30"><rect x="2" y="2" width="30" height="26" fill="none" stroke="#d8d8d8" stroke-width="2"/><path d="M2,7 H32" stroke="#d8d8d8" stroke-width="1.5"/><path d="M17,11 V24 M11,18 L17,24 L23,18" fill="none" stroke="#4f9be0" stroke-width="2"/></svg><svg class="s" style="left:2474.0px;top:194.7px" width="16" height="10.600000000000001" viewBox="0 0 16 10.600000000000001"><polyline points="2,2 8.0,8.600000000000001 14,2" fill="none" stroke="#f0f0f0" stroke-width="2.4" stroke-linecap="round" stroke-linejoin="round"/></svg><svg class="s" style="left:2431px;top:227px" width="32" height="34" viewBox="0 0 32 34"><path d="M2,22 L19,3 L30,13 L13,32 Z" fill="none" stroke="#c070d8" stroke-width="2"/><path d="M2,22 L9,14 L20,24 L13,32 Z" fill="#9a3cb8" stroke="#c070d8" stroke-width="2"/></svg><svg class="s" style="left:2474.0px;top:239.7px" width="16" height="10.600000000000001" viewBox="0 0 16 10.600000000000001"><polyline points="2,2 8.0,8.600000000000001 14,2" fill="none" stroke="#f0f0f0" stroke-width="2.4" stroke-linecap="round" stroke-linejoin="round"/></svg><svg class="s" style="left:2504px;top:144px" width="62" height="58" viewBox="0 0 62 58"><text x="1" y="24" font-size="27" font-family="Liberation Sans" fill="#4f9be0">A</text><text x="2" y="53" font-size="27" font-family="Liberation Sans" fill="#d4d4d4">Z</text><path d="M26,14 H56 V20 L45,32 V48 H38 V32 L26,20 Z" fill="none" stroke="#d4d4d4" stroke-width="2" stroke-linejoin="round"/></svg><svg class="s" style="left:2574.0px;top:166.7px" width="16" height="10.600000000000001" viewBox="0 0 16 10.600000000000001"><polyline points="2,2 8.0,8.600000000000001 14,2" fill="none" stroke="#f0f0f0" stroke-width="2.4" stroke-linecap="round" stroke-linejoin="round"/></svg><div class="t" style="left:2395.0px;width:300px;text-align:center;top:213.0px;font-size:22px;line-height:22px;color:#eeeeee;font-weight:normal;letter-spacing:0.2px;">Sort &amp;</div><div class="t" style="left:2395.0px;width:300px;text-align:center;top:236.8px;font-size:22px;line-height:22px;color:#eeeeee;font-weight:normal;letter-spacing:0.2px;">Filter</div><svg class="s" style="left:2602px;top:142px" width="62" height="62" viewBox="0 0 62 62"><circle cx="40" cy="23" r="20.5" fill="none" stroke="#d8d8d8" stroke-width="2"/><path d="M25.5,37.5 L3,60" stroke="#d8d8d8" stroke-width="2.2" stroke-linecap="round"/></svg><svg class="s" style="left:2674.0px;top:166.7px" width="16" height="10.600000000000001" viewBox="0 0 16 10.600000000000001"><polyline points="2,2 8.0,8.600000000000001 14,2" fill="none" stroke="#f0f0f0" stroke-width="2.4" stroke-linecap="round" stroke-linejoin="round"/></svg><div class="t" style="left:2494.0px;width:300px;text-align:center;top:213.0px;font-size:22px;line-height:22px;color:#eeeeee;font-weight:normal;letter-spacing:0.2px;">Find &amp;</div><div class="t" style="left:2494.0px;width:300px;text-align:center;top:236.8px;font-size:22px;line-height:22px;color:#eeeeee;font-weight:normal;letter-spacing:0.2px;">Select</div><svg class="s" style="left:2746px;top:138px" width="68" height="68" viewBox="0 0 68 68"><rect x="3" y="3" width="62" height="62" fill="none" stroke="#d4d4d4" stroke-width="2.2"/><rect x="3" y="3" width="62" height="7" fill="#6a6a6a"/><path d="M3,10 H65" stroke="#d4d4d4" stroke-width="2"/><path d="M3,30 H12 M55,30 H65 M3,48 H12 M55,48 H65 M24,53 V65 M44,53 V65 M3,11 V65" stroke="#a0a0a0" stroke-width="2"/><circle cx="33" cy="30" r="19" fill="#2b2b2b" stroke="#d4d4d4" stroke-width="2.2"/><rect x="20" y="27" width="8" height="14" fill="#7a7a7a"/><rect x="28" y="17" width="8" height="24" fill="#d4d4d4"/><rect x="37" y="22" width="7" height="19" fill="#3d7cc9" stroke="#6aaaf0" stroke-width="1.2"/><path d="M46,44 L64,63" stroke="#d4d4d4" stroke-width="2.2"/></svg><div class="t" style="left:2629.0px;width:300px;text-align:center;top:213.0px;font-size:22px;line-height:22px;color:#eeeeee;font-weight:normal;letter-spacing:0.2px;">Analyze</div><div class="t" style="left:2629.0px;width:300px;text-align:center;top:236.8px;font-size:22px;line-height:22px;color:#eeeeee;font-weight:normal;letter-spacing:0.2px;">Data</div><div class="b" style="left:0px;top:273px;width:2844px;height:3px;background:#121212;"></div><div class="b" style="left:0px;top:276px;width:2844px;height:52px;background:#262626;"></div><div class="b" style="left:0px;top:276px;width:168px;height:52px;background:#282828;"></div><div class="b" style="left:168px;top:276px;width:4px;height:52px;background:#1f1f1f;"></div><div class="t" style="left:19.0px;top:290.1px;font-size:23.5px;line-height:23.5px;color:#ececec;font-weight:normal;letter-spacing:0.3px;font-family:'Liberation Sans', sans-serif;">R23</div><svg class="s" style="left:144px;top:284px" width="18" height="38" viewBox="0 0 18 38"><path d="M8.5,1 L16,13 H1 Z" fill="#bdbdbd"/><path d="M1,25 H16 L8.5,37 Z" fill="#bdbdbd"/></svg><svg class="s" style="left:199px;top:291px" width="24" height="24" viewBox="0 0 24 24"><path d="M3,3 L21,21 M21,3 L3,21" stroke="#4e4e4e" stroke-width="4"/></svg><svg class="s" style="left:254px;top:291px" width="32" height="24" viewBox="0 0 32 24"><path d="M3,11 L11,20 L29,3" fill="none" stroke="#4e4e4e" stroke-width="4.2"/></svg><svg class="s" style="left:310px;top:284px" width="40" height="38" viewBox="0 0 40 38"><path d="M24.5,6.5 Q23.5,4.5 21,5 Q16.5,6 15,14 L12,28 Q10.5,33 7.5,32.5" fill="none" stroke="#9e9e9e" stroke-width="2.6" stroke-linecap="round"/><circle cx="23.6" cy="6.3" r="2.1" fill="#9e9e9e"/><circle cx="7.6" cy="31.6" r="2.1" fill="#9e9e9e"/><path d="M11.5,13 H21.5" stroke="#9e9e9e" stroke-width="2.2"/><path d="M21.5,17 Q24,15.5 25.5,19 L29.5,28 Q31,30.5 33.5,28.5 M33,18 Q31,16.5 29,18.5 L22.5,27.5 Q21,29.5 20,28" fill="none" stroke="#9e9e9e" stroke-width="2.4" stroke-linecap="round"/><circle cx="33.2" cy="18.6" r="1.9" fill="#9e9e9e"/><circle cx="20.8" cy="27.6" r="1.9" fill="#9e9e9e"/></svg><div class="b" style="left:360px;top:284px;width:2454px;height:38px;background:#363636;"></div><svg class="s" style="left:2814px;top:292px" width="24" height="18" viewBox="0 0 24 18"><path d="M8,5 H22.2 L15.1,17.2 Z" fill="#c0c0c0"/></svg><div class="b" style="left:0px;top:327.5px;width:2844px;height:6.5px;background:linear-gradient(#8a8a8a,#f4f4f4 35%,#f8f8f8 60%,#b0b0b0);"></div><div class="b" style="left:0px;top:333px;width:2844px;height:43px;background:#171717;"></div><div class="b" style="left:0px;top:376px;width:2844px;height:2px;background:#c2c2c2;"></div><svg class="s" style="left:8px;top:341px" width="34" height="32" viewBox="0 0 34 32"><path d="M32,2 V31 H2 Z" fill="#5b5b5b"/></svg><div class="b" style="left:2782px;top:333px;width:62px;height:43px;background:#5c5c5c;"></div><div class="b" style="left:2782px;top:373px;width:62px;height:5px;background:#3b7350;"></div><div class="t" style="left:14.8px;width:300px;text-align:center;top:344.8px;font-size:20.5px;line-height:20.5px;color:#ffffff;font-weight:bold;letter-spacing:0px;">A</div><div class="t" style="left:316.8px;width:300px;text-align:center;top:344.8px;font-size:20.5px;line-height:20.5px;color:#ffffff;font-weight:bold;letter-spacing:0px;">B</div><div class="t" style="left:570.8px;width:300px;text-align:center;top:344.8px;font-size:20.5px;line-height:20.5px;color:#ffffff;font-weight:bold;letter-spacing:0px;">C</div><div class="t" style="left:696.7px;width:300px;text-align:center;top:344.8px;font-size:20.5px;line-height:20.5px;color:#ffffff;font-weight:bold;letter-spacing:0px;">D</div><div class="t" style="left:823.0px;width:300px;text-align:center;top:344.8px;font-size:20.5px;line-height:20.5px;color:#ffffff;font-weight:bold;letter-spacing:0px;">E</div><div class="t" style="left:972.0px;width:300px;text-align:center;top:344.8px;font-size:20.5px;line-height:20.5px;color:#ffffff;font-weight:bold;letter-spacing:0px;">F</div><div class="t" style="left:1112.7px;width:300px;text-align:center;top:344.8px;font-size:20.5px;line-height:20.5px;color:#ffffff;font-weight:bold;letter-spacing:0px;">G</div><div class="t" style="left:1243.0px;width:300px;text-align:center;top:344.8px;font-size:20.5px;line-height:20.5px;color:#ffffff;font-weight:bold;letter-spacing:0px;">H</div><div class="t" style="left:1377.1px;width:300px;text-align:center;top:344.8px;font-size:20.5px;line-height:20.5px;color:#ffffff;font-weight:bold;letter-spacing:0px;">I</div><div class="t" style="left:1509.0px;width:300px;text-align:center;top:344.8px;font-size:20.5px;line-height:20.5px;color:#ffffff;font-weight:bold;letter-spacing:0px;">J</div><div class="t" style="left:1630.8px;width:300px;text-align:center;top:344.8px;font-size:20.5px;line-height:20.5px;color:#ffffff;font-weight:bold;letter-spacing:0px;">K</div><div class="t" style="left:1753.5px;width:300px;text-align:center;top:344.8px;font-size:20.5px;line-height:20.5px;color:#ffffff;font-weight:bold;letter-spacing:0px;">L</div><div class="t" style="left:1886.7px;width:300px;text-align:center;top:344.8px;font-size:20.5px;line-height:20.5px;color:#ffffff;font-weight:bold;letter-spacing:0px;">M</div><div class="t" style="left:2037.7px;width:300px;text-align:center;top:344.8px;font-size:20.5px;line-height:20.5px;color:#ffffff;font-weight:bold;letter-spacing:0px;">N</div><div class="t" style="left:2207.7px;width:300px;text-align:center;top:344.8px;font-size:20.5px;line-height:20.5px;color:#ffffff;font-weight:bold;letter-spacing:0px;">O</div><div class="t" style="left:2387.8px;width:300px;text-align:center;top:344.8px;font-size:20.5px;line-height:20.5px;color:#ffffff;font-weight:bold;letter-spacing:0px;">P</div><div class="t" style="left:2556.8px;width:300px;text-align:center;top:344.8px;font-size:20.5px;line-height:20.5px;color:#ffffff;font-weight:bold;letter-spacing:0px;">Q</div><div class="t" style="left:2688.0px;width:300px;text-align:center;top:344.8px;font-size:20.5px;line-height:20.5px;color:#ffffff;font-weight:bold;letter-spacing:0px;">R</div><div class="b" style="left:284px;top:333px;width:2px;height:43px;background:#4a4a4a;"></div><div class="b" style="left:648px;top:333px;width:2px;height:43px;background:#4a4a4a;"></div><div class="b" style="left:792px;top:333px;width:2px;height:43px;background:#4a4a4a;"></div><div class="b" style="left:900px;top:333px;width:2px;height:43px;background:#4a4a4a;"></div><div class="b" style="left:1044px;top:333px;width:2px;height:43px;background:#4a4a4a;"></div><div class="b" style="left:1198px;top:333px;width:2px;height:43px;background:#4a4a4a;"></div><div class="b" style="left:1326px;top:333px;width:2px;height:43px;background:#4a4a4a;"></div><div class="b" style="left:1458px;top:333px;width:2px;height:43px;background:#4a4a4a;"></div><div class="b" style="left:1594px;top:333px;width:2px;height:43px;background:#4a4a4a;"></div><div class="b" style="left:1722px;top:333px;width:2px;height:43px;background:#4a4a4a;"></div><div class="b" style="left:1838px;top:333px;width:2px;height:43px;background:#4a4a4a;"></div><div class="b" style="left:1967px;top:333px;width:2px;height:43px;background:#4a4a4a;"></div><div class="b" style="left:2104px;top:333px;width:2px;height:43px;background:#4a4a4a;"></div><div class="b" style="left:2269px;top:333px;width:2px;height:43px;background:#4a4a4a;"></div><div class="b" style="left:2444px;top:333px;width:2px;height:43px;background:#4a4a4a;"></div><div class="b" style="left:2630px;top:333px;width:2px;height:43px;background:#4a4a4a;"></div><div class="b" style="left:44px;top:333px;width:2px;height:45px;background:#cfcfcf;"></div><div class="b" style="left:46px;top:378px;width:2798px;height:1028px;background:#ffffff;"></div><div class="b" style="left:0px;top:378px;width:44px;height:1028px;background:#171717;"></div><div class="b" style="left:44px;top:378px;width:2px;height:1028px;background:#cfcfcf;"></div><div class="b" style="left:46px;top:440px;width:2798px;height:2px;background:#d4d4d4;"></div><div class="b" style="left:2px;top:440px;width:42px;height:2px;background:#505050;"></div><div class="b" style="left:46px;top:470px;width:2798px;height:2px;background:#d4d4d4;"></div><div class="b" style="left:2px;top:470px;width:42px;height:2px;background:#505050;"></div><div class="b" style="left:46px;top:500px;width:2798px;height:2px;background:#d4d4d4;"></div><div class="b" style="left:2px;top:500px;width:42px;height:2px;background:#505050;"></div><div class="b" style="left:46px;top:530px;width:2798px;height:2px;background:#d4d4d4;"></div><div class="b" style="left:2px;top:530px;width:42px;height:2px;background:#505050;"></div><div class="b" style="left:46px;top:560px;width:2798px;height:2px;background:#d4d4d4;"></div><div class="b" style="left:2px;top:560px;width:42px;height:2px;background:#505050;"></div><div class="b" style="left:46px;top:590px;width:2798px;height:2px;background:#d4d4d4;"></div><div class="b" style="left:2px;top:590px;width:42px;height:2px;background:#505050;"></div><div class="b" style="left:46px;top:620px;width:2798px;height:2px;background:#d4d4d4;"></div><div class="b" style="left:2px;top:620px;width:42px;height:2px;background:#505050;"></div><div class="b" style="left:46px;top:650px;width:2798px;height:2px;background:#d4d4d4;"></div><div class="b" style="left:2px;top:650px;width:42px;height:2px;background:#505050;"></div><div class="b" style="left:46px;top:680px;width:2798px;height:2px;background:#d4d4d4;"></div><div class="b" style="left:2px;top:680px;width:42px;height:2px;background:#505050;"></div><div class="b" style="left:46px;top:710px;width:2798px;height:2px;background:#d4d4d4;"></div><div class="b" style="left:2px;top:710px;width:42px;height:2px;background:#505050;"></div><div class="b" style="left:46px;top:740px;width:2798px;height:2px;background:#d4d4d4;"></div><div class="b" style="left:2px;top:740px;width:42px;height:2px;background:#505050;"></div><div class="b" style="left:46px;top:770px;width:2798px;height:2px;background:#d4d4d4;"></div><div class="b" style="left:2px;top:770px;width:42px;height:2px;background:#505050;"></div><div class="b" style="left:46px;top:800px;width:2798px;height:2px;background:#d4d4d4;"></div><div class="b" style="left:2px;top:800px;width:42px;height:2px;background:#505050;"></div><div class="b" style="left:46px;top:830px;width:2798px;height:2px;background:#d4d4d4;"></div><div class="b" style="left:2px;top:830px;width:42px;height:2px;background:#505050;"></div><div class="b" style="left:46px;top:860px;width:2798px;height:2px;background:#d4d4d4;"></div><div class="b" style="left:2px;top:860px;width:42px;height:2px;background:#505050;"></div><div class="b" style="left:46px;top:890px;width:2798px;height:2px;background:#d4d4d4;"></div><div class="b" style="left:2px;top:890px;width:42px;height:2px;background:#505050;"></div><div class="b" style="left:46px;top:920px;width:2798px;height:2px;background:#d4d4d4;"></div><div class="b" style="left:2px;top:920px;width:42px;height:2px;background:#505050;"></div><div class="b" style="left:46px;top:950px;width:2798px;height:2px;background:#d4d4d4;"></div><div class="b" style="left:2px;top:950px;width:42px;height:2px;background:#505050;"></div><div class="b" style="left:46px;top:980px;width:2798px;height:2px;background:#d4d4d4;"></div><div class="b" style="left:2px;top:980px;width:42px;height:2px;background:#505050;"></div><div class="b" style="left:46px;top:1010px;width:2798px;height:2px;background:#d4d4d4;"></div><div class="b" style="left:2px;top:1010px;width:42px;height:2px;background:#505050;"></div><div class="b" style="left:46px;top:1040px;width:2798px;height:2px;background:#d4d4d4;"></div><div class="b" style="left:2px;top:1040px;width:42px;height:2px;background:#505050;"></div><div class="b" style="left:46px;top:1070px;width:2798px;height:2px;background:#d4d4d4;"></div><div class="b" style="left:2px;top:1070px;width:42px;height:2px;background:#505050;"></div><div class="b" style="left:46px;top:1100px;width:2798px;height:2px;background:#d4d4d4;"></div><div class="b" style="left:2px;top:1100px;width:42px;height:2px;background:#505050;"></div><div class="b" style="left:46px;top:1130px;width:2798px;height:2px;background:#d4d4d4;"></div><div class="b" style="left:2px;top:1130px;width:42px;height:2px;background:#505050;"></div><div class="b" style="left:46px;top:1160px;width:2798px;height:2px;background:#d4d4d4;"></div><div class="b" style="left:2px;top:1160px;width:42px;height:2px;background:#505050;"></div><div class="b" style="left:46px;top:1190px;width:2798px;height:2px;background:#d4d4d4;"></div><div class="b" style="left:2px;top:1190px;width:42px;height:2px;background:#505050;"></div><div class="b" style="left:46px;top:1220px;width:2798px;height:2px;background:#d4d4d4;"></div><div class="b" style="left:2px;top:1220px;width:42px;height:2px;background:#505050;"></div><div class="b" style="left:46px;top:1250px;width:2798px;height:2px;background:#d4d4d4;"></div><div class="b" style="left:2px;top:1250px;width:42px;height:2px;background:#505050;"></div><div class="b" style="left:46px;top:1280px;width:2798px;height:2px;background:#d4d4d4;"></div><div class="b" style="left:2px;top:1280px;width:42px;height:2px;background:#505050;"></div><div class="b" style="left:46px;top:1310px;width:2798px;height:2px;background:#d4d4d4;"></div><div class="b" style="left:2px;top:1310px;width:42px;height:2px;background:#505050;"></div><div class="b" style="left:46px;top:1340px;width:2798px;height:2px;background:#d4d4d4;"></div><div class="b" style="left:2px;top:1340px;width:42px;height:2px;background:#505050;"></div><div class="b" style="left:46px;top:1370px;width:2798px;height:2px;background:#d4d4d4;"></div><div class="b" style="left:2px;top:1370px;width:42px;height:2px;background:#505050;"></div><div class="b" style="left:46px;top:1400px;width:2798px;height:2px;background:#d4d4d4;"></div><div class="b" style="left:2px;top:1400px;width:42px;height:2px;background:#505050;"></div><div class="b" style="left:284px;top:378px;width:2px;height:1028px;background:#d4d4d4;"></div><div class="b" style="left:648px;top:378px;width:2px;height:1028px;background:#d4d4d4;"></div><div class="b" style="left:792px;top:378px;width:2px;height:1028px;background:#d4d4d4;"></div><div class="b" style="left:900px;top:378px;width:2px;height:1028px;background:#d4d4d4;"></div><div class="b" style="left:1044px;top:378px;width:2px;height:1028px;background:#d4d4d4;"></div><div class="b" style="left:1198px;top:378px;width:2px;height:1028px;background:#d4d4d4;"></div><div class="b" style="left:1326px;top:378px;width:2px;height:1028px;background:#d4d4d4;"></div><div class="b" style="left:1458px;top:378px;width:2px;height:1028px;background:#d4d4d4;"></div><div class="b" style="left:1594px;top:378px;width:2px;height:1028px;background:#d4d4d4;"></div><div class="b" style="left:1722px;top:378px;width:2px;height:1028px;background:#d4d4d4;"></div><div class="b" style="left:1838px;top:378px;width:2px;height:1028px;background:#d4d4d4;"></div><div class="b" style="left:1967px;top:378px;width:2px;height:1028px;background:#d4d4d4;"></div><div class="b" style="left:2104px;top:378px;width:2px;height:1028px;background:#d4d4d4;"></div><div class="b" style="left:2269px;top:378px;width:2px;height:1028px;background:#d4d4d4;"></div><div class="b" style="left:2444px;top:378px;width:2px;height:1028px;background:#d4d4d4;"></div><div class="b" style="left:2630px;top:378px;width:2px;height:1028px;background:#d4d4d4;"></div><div class="b" style="left:2782px;top:378px;width:2px;height:1028px;background:#d4d4d4;"></div><div class="b" style="left:1839px;top:378px;width:945px;height:1028px;background:#e2efda;"></div><svg class="s" style="left:283px;top:442px" width="355" height="960" viewBox="0 0 355 960"><rect x="0.0" y="0.0" width="25.9" height="20.8" fill="#e8e8e8"/><rect x="25.6" y="0.0" width="38.9" height="20.8" fill="#d8d8d8"/><rect x="64.2" y="0.0" width="38.9" height="20.8" fill="#dedede"/><rect x="102.8" y="0.0" width="38.9" height="20.8" fill="#d8d8d8"/><rect x="141.4" y="0.0" width="38.9" height="20.8" fill="#eeeeee"/><rect x="180.0" y="0.0" width="38.9" height="20.8" fill="#ececec"/><rect x="218.6" y="0.0" width="38.9" height="20.8" fill="#eeeeee"/><rect x="257.2" y="0.0" width="38.9" height="20.8" fill="#f8f8f8"/><rect x="295.8" y="0.0" width="38.9" height="20.8" fill="#fafafa"/><rect x="334.4" y="0.0" width="20.9" height="20.8" fill="#fafafa"/><rect x="0.0" y="20.5" width="25.9" height="38.9" fill="#e8e8e8"/><rect x="25.6" y="20.5" width="38.9" height="38.9" fill="#e0e0e0"/><rect x="64.2" y="20.5" width="38.9" height="38.9" fill="#e4e4e4"/><rect x="102.8" y="20.5" width="38.9" height="38.9" fill="#e2e2e2"/><rect x="141.4" y="20.5" width="38.9" height="38.9" fill="#e4e4e4"/><rect x="180.0" y="20.5" width="38.9" height="38.9" fill="#e0e0e0"/><rect x="218.6" y="20.5" width="38.9" height="38.9" fill="#e6e6e6"/><rect x="257.2" y="20.5" width="38.9" height="38.9" fill="#f2f2f2"/><rect x="295.8" y="20.5" width="38.9" height="38.9" fill="#fafafa"/><rect x="334.4" y="20.5" width="20.9" height="38.9" fill="#fafafa"/><rect x="0.0" y="59.1" width="25.9" height="38.9" fill="#eeeeee"/><rect x="25.6" y="59.1" width="38.9" height="38.9" fill="#ececec"/><rect x="64.2" y="59.1" width="38.9" height="38.9" fill="#ececec"/><rect x="102.8" y="59.1" width="38.9" height="38.9" fill="#eaeaea"/><rect x="141.4" y="59.1" width="38.9" height="38.9" fill="#f0f0f0"/><rect x="180.0" y="59.1" width="38.9" height="38.9" fill="#fafafa"/><rect x="218.6" y="59.1" width="38.9" height="38.9" fill="#fafafa"/><rect x="257.2" y="59.1" width="38.9" height="38.9" fill="#fafafa"/><rect x="295.8" y="59.1" width="38.9" height="38.9" fill="#fafafa"/><rect x="334.4" y="59.1" width="20.9" height="38.9" fill="#fafafa"/><rect x="0.0" y="97.7" width="25.9" height="38.9" fill="#e4e4e4"/><rect x="25.6" y="97.7" width="38.9" height="38.9" fill="#e0e0e0"/><rect x="64.2" y="97.7" width="38.9" height="38.9" fill="#dedede"/><rect x="102.8" y="97.7" width="38.9" height="38.9" fill="#dedede"/><rect x="141.4" y="97.7" width="38.9" height="38.9" fill="#dedede"/><rect x="180.0" y="97.7" width="38.9" height="38.9" fill="#e0e0e0"/><rect x="218.6" y="97.7" width="38.9" height="38.9" fill="#dadada"/><rect x="257.2" y="97.7" width="38.9" height="38.9" fill="#f2f2f2"/><rect x="295.8" y="97.7" width="38.9" height="38.9" fill="#f2f2f2"/><rect x="334.4" y="97.7" width="20.9" height="38.9" fill="#fafafa"/><rect x="0.0" y="136.3" width="25.9" height="38.9" fill="#e4e4e4"/><rect x="25.6" y="136.3" width="38.9" height="38.9" fill="#dedede"/><rect x="64.2" y="136.3" width="38.9" height="38.9" fill="#dedede"/><rect x="102.8" y="136.3" width="38.9" height="38.9" fill="#dedede"/><rect x="141.4" y="136.3" width="38.9" height="38.9" fill="#e0e0e0"/><rect x="180.0" y="136.3" width="38.9" height="38.9" fill="#e2e2e2"/><rect x="218.6" y="136.3" width="38.9" height="38.9" fill="#e2e2e2"/><rect x="257.2" y="136.3" width="38.9" height="38.9" fill="#e4e4e4"/><rect x="295.8" y="136.3" width="38.9" height="38.9" fill="#e4e4e4"/><rect x="334.4" y="136.3" width="20.9" height="38.9" fill="#e8e8e8"/><rect x="0.0" y="174.9" width="25.9" height="38.9" fill="#eaeaea"/><rect x="25.6" y="174.9" width="38.9" height="38.9" fill="#e6e6e6"/><rect x="64.2" y="174.9" width="38.9" height="38.9" fill="#e4e4e4"/><rect x="102.8" y="174.9" width="38.9" height="38.9" fill="#e6e6e6"/><rect x="141.4" y="174.9" width="38.9" height="38.9" fill="#eaeaea"/><rect x="180.0" y="174.9" width="38.9" height="38.9" fill="#e8e8e8"/><rect x="218.6" y="174.9" width="38.9" height="38.9" fill="#e6e6e6"/><rect x="257.2" y="174.9" width="38.9" height="38.9" fill="#e6e6e6"/><rect x="295.8" y="174.9" width="38.9" height="38.9" fill="#e6e6e6"/><rect x="334.4" y="174.9" width="20.9" height="38.9" fill="#e8e8e8"/><rect x="0.0" y="213.5" width="25.9" height="38.9" fill="#e8e8e8"/><rect x="25.6" y="213.5" width="38.9" height="38.9" fill="#e2e2e2"/><rect x="64.2" y="213.5" width="38.9" height="38.9" fill="#e0e0e0"/><rect x="102.8" y="213.5" width="38.9" height="38.9" fill="#e4e4e4"/><rect x="141.4" y="213.5" width="38.9" height="38.9" fill="#e4e4e4"/><rect x="180.0" y="213.5" width="38.9" height="38.9" fill="#e8e8e8"/><rect x="218.6" y="213.5" width="38.9" height="38.9" fill="#e8e8e8"/><rect x="257.2" y="213.5" width="38.9" height="38.9" fill="#e4e4e4"/><rect x="295.8" y="213.5" width="38.9" height="38.9" fill="#e4e4e4"/><rect x="334.4" y="213.5" width="20.9" height="38.9" fill="#e8e8e8"/><rect x="0.0" y="252.1" width="25.9" height="38.9" fill="#dcdcdc"/><rect x="25.6" y="252.1" width="38.9" height="38.9" fill="#dadada"/><rect x="64.2" y="252.1" width="38.9" height="38.9" fill="#e6e6e6"/><rect x="102.8" y="252.1" width="38.9" height="38.9" fill="#eeeeee"/><rect x="141.4" y="252.1" width="38.9" height="38.9" fill="#eeeeee"/><rect x="180.0" y="252.1" width="38.9" height="38.9" fill="#eeeeee"/><rect x="218.6" y="252.1" width="38.9" height="38.9" fill="#eaeaea"/><rect x="257.2" y="252.1" width="38.9" height="38.9" fill="#eaeaea"/><rect x="295.8" y="252.1" width="38.9" height="38.9" fill="#eeeeee"/><rect x="334.4" y="252.1" width="20.9" height="38.9" fill="#eeeeee"/><rect x="0.0" y="290.7" width="25.9" height="38.9" fill="#e6e6e6"/><rect x="25.6" y="290.7" width="38.9" height="38.9" fill="#e6e6e6"/><rect x="64.2" y="290.7" width="38.9" height="38.9" fill="#eaeaea"/><rect x="102.8" y="290.7" width="38.9" height="38.9" fill="#eaeaea"/><rect x="141.4" y="290.7" width="38.9" height="38.9" fill="#e8e8e8"/><rect x="180.0" y="290.7" width="38.9" height="38.9" fill="#eaeaea"/><rect x="218.6" y="290.7" width="38.9" height="38.9" fill="#e6e6e6"/><rect x="257.2" y="290.7" width="38.9" height="38.9" fill="#e6e6e6"/><rect x="295.8" y="290.7" width="38.9" height="38.9" fill="#e6e6e6"/><rect x="334.4" y="290.7" width="20.9" height="38.9" fill="#e6e6e6"/><rect x="0.0" y="329.3" width="25.9" height="38.9" fill="#eaeaea"/><rect x="25.6" y="329.3" width="38.9" height="38.9" fill="#e6e6e6"/><rect x="64.2" y="329.3" width="38.9" height="38.9" fill="#e6e6e6"/><rect x="102.8" y="329.3" width="38.9" height="38.9" fill="#e6e6e6"/><rect x="141.4" y="329.3" width="38.9" height="38.9" fill="#ececec"/><rect x="180.0" y="329.3" width="38.9" height="38.9" fill="#e4e4e4"/><rect x="218.6" y="329.3" width="38.9" height="38.9" fill="#e8e8e8"/><rect x="257.2" y="329.3" width="38.9" height="38.9" fill="#e8e8e8"/><rect x="295.8" y="329.3" width="38.9" height="38.9" fill="#eaeaea"/><rect x="334.4" y="329.3" width="20.9" height="38.9" fill="#eaeaea"/><rect x="0.0" y="367.9" width="25.9" height="38.9" fill="#e2e2e2"/><rect x="25.6" y="367.9" width="38.9" height="38.9" fill="#dcdcdc"/><rect x="64.2" y="367.9" width="38.9" height="38.9" fill="#e0e0e0"/><rect x="102.8" y="367.9" width="38.9" height="38.9" fill="#e2e2e2"/><rect x="141.4" y="367.9" width="38.9" height="38.9" fill="#dedede"/><rect x="180.0" y="367.9" width="38.9" height="38.9" fill="#dcdcdc"/><rect x="218.6" y="367.9" width="38.9" height="38.9" fill="#dcdcdc"/><rect x="257.2" y="367.9" width="38.9" height="38.9" fill="#e0e0e0"/><rect x="295.8" y="367.9" width="38.9" height="38.9" fill="#f0f0f0"/><rect x="334.4" y="367.9" width="20.9" height="38.9" fill="#fafafa"/><rect x="0.0" y="406.5" width="25.9" height="38.9" fill="#e2e2e2"/><rect x="25.6" y="406.5" width="38.9" height="38.9" fill="#dedede"/><rect x="64.2" y="406.5" width="38.9" height="38.9" fill="#dcdcdc"/><rect x="102.8" y="406.5" width="38.9" height="38.9" fill="#e0e0e0"/><rect x="141.4" y="406.5" width="38.9" height="38.9" fill="#dadada"/><rect x="180.0" y="406.5" width="38.9" height="38.9" fill="#e2e2e2"/><rect x="218.6" y="406.5" width="38.9" height="38.9" fill="#e0e0e0"/><rect x="257.2" y="406.5" width="38.9" height="38.9" fill="#e2e2e2"/><rect x="295.8" y="406.5" width="38.9" height="38.9" fill="#e8e8e8"/><rect x="334.4" y="406.5" width="20.9" height="38.9" fill="#e8e8e8"/><rect x="0.0" y="445.1" width="25.9" height="38.9" fill="#e8e8e8"/><rect x="25.6" y="445.1" width="38.9" height="38.9" fill="#e8e8e8"/><rect x="64.2" y="445.1" width="38.9" height="38.9" fill="#e2e2e2"/><rect x="102.8" y="445.1" width="38.9" height="38.9" fill="#eaeaea"/><rect x="141.4" y="445.1" width="38.9" height="38.9" fill="#eaeaea"/><rect x="180.0" y="445.1" width="38.9" height="38.9" fill="#e6e6e6"/><rect x="218.6" y="445.1" width="38.9" height="38.9" fill="#e8e8e8"/><rect x="257.2" y="445.1" width="38.9" height="38.9" fill="#e8e8e8"/><rect x="295.8" y="445.1" width="38.9" height="38.9" fill="#e8e8e8"/><rect x="334.4" y="445.1" width="20.9" height="38.9" fill="#e8e8e8"/><rect x="0.0" y="483.7" width="25.9" height="38.9" fill="#e8e8e8"/><rect x="25.6" y="483.7" width="38.9" height="38.9" fill="#e8e8e8"/><rect x="64.2" y="483.7" width="38.9" height="38.9" fill="#e8e8e8"/><rect x="102.8" y="483.7" width="38.9" height="38.9" fill="#e6e6e6"/><rect x="141.4" y="483.7" width="38.9" height="38.9" fill="#e6e6e6"/><rect x="180.0" y="483.7" width="38.9" height="38.9" fill="#e4e4e4"/><rect x="218.6" y="483.7" width="38.9" height="38.9" fill="#e4e4e4"/><rect x="257.2" y="483.7" width="38.9" height="38.9" fill="#e2e2e2"/><rect x="295.8" y="483.7" width="38.9" height="38.9" fill="#dedede"/><rect x="334.4" y="483.7" width="20.9" height="38.9" fill="#eeeeee"/><rect x="0.0" y="522.3" width="25.9" height="38.9" fill="#dcdcdc"/><rect x="25.6" y="522.3" width="38.9" height="38.9" fill="#d6d6d6"/><rect x="64.2" y="522.3" width="38.9" height="38.9" fill="#d6d6d6"/><rect x="102.8" y="522.3" width="38.9" height="38.9" fill="#dadada"/><rect x="141.4" y="522.3" width="38.9" height="38.9" fill="#dadada"/><rect x="180.0" y="522.3" width="38.9" height="38.9" fill="#dcdcdc"/><rect x="218.6" y="522.3" width="38.9" height="38.9" fill="#d6d6d6"/><rect x="257.2" y="522.3" width="38.9" height="38.9" fill="#d6d6d6"/><rect x="295.8" y="522.3" width="38.9" height="38.9" fill="#dedede"/><rect x="334.4" y="522.3" width="20.9" height="38.9" fill="#f6f6f6"/><rect x="0.0" y="560.9" width="25.9" height="38.9" fill="#e6e6e6"/><rect x="25.6" y="560.9" width="38.9" height="38.9" fill="#e2e2e2"/><rect x="64.2" y="560.9" width="38.9" height="38.9" fill="#e2e2e2"/><rect x="102.8" y="560.9" width="38.9" height="38.9" fill="#e8e8e8"/><rect x="141.4" y="560.9" width="38.9" height="38.9" fill="#e4e4e4"/><rect x="180.0" y="560.9" width="38.9" height="38.9" fill="#e4e4e4"/><rect x="218.6" y="560.9" width="38.9" height="38.9" fill="#e2e2e2"/><rect x="257.2" y="560.9" width="38.9" height="38.9" fill="#e4e4e4"/><rect x="295.8" y="560.9" width="38.9" height="38.9" fill="#e6e6e6"/><rect x="334.4" y="560.9" width="20.9" height="38.9" fill="#f8f8f8"/><rect x="0.0" y="599.5" width="25.9" height="38.9" fill="#e8e8e8"/><rect x="25.6" y="599.5" width="38.9" height="38.9" fill="#e4e4e4"/><rect x="64.2" y="599.5" width="38.9" height="38.9" fill="#e4e4e4"/><rect x="102.8" y="599.5" width="38.9" height="38.9" fill="#eaeaea"/><rect x="141.4" y="599.5" width="38.9" height="38.9" fill="#e6e6e6"/><rect x="180.0" y="599.5" width="38.9" height="38.9" fill="#e6e6e6"/><rect x="218.6" y="599.5" width="38.9" height="38.9" fill="#e6e6e6"/><rect x="257.2" y="599.5" width="38.9" height="38.9" fill="#e6e6e6"/><rect x="295.8" y="599.5" width="38.9" height="38.9" fill="#e8e8e8"/><rect x="334.4" y="599.5" width="20.9" height="38.9" fill="#fafafa"/><rect x="0.0" y="638.1" width="25.9" height="38.9" fill="#e0e0e0"/><rect x="25.6" y="638.1" width="38.9" height="38.9" fill="#dcdcdc"/><rect x="64.2" y="638.1" width="38.9" height="38.9" fill="#dadada"/><rect x="102.8" y="638.1" width="38.9" height="38.9" fill="#dcdcdc"/><rect x="141.4" y="638.1" width="38.9" height="38.9" fill="#dcdcdc"/><rect x="180.0" y="638.1" width="38.9" height="38.9" fill="#dedede"/><rect x="218.6" y="638.1" width="38.9" height="38.9" fill="#dedede"/><rect x="257.2" y="638.1" width="38.9" height="38.9" fill="#dadada"/><rect x="295.8" y="638.1" width="38.9" height="38.9" fill="#e0e0e0"/><rect x="334.4" y="638.1" width="20.9" height="38.9" fill="#e4e4e4"/><rect x="0.0" y="676.7" width="25.9" height="38.9" fill="#e2e2e2"/><rect x="25.6" y="676.7" width="38.9" height="38.9" fill="#e0e0e0"/><rect x="64.2" y="676.7" width="38.9" height="38.9" fill="#dcdcdc"/><rect x="102.8" y="676.7" width="38.9" height="38.9" fill="#dcdcdc"/><rect x="141.4" y="676.7" width="38.9" height="38.9" fill="#dcdcdc"/><rect x="180.0" y="676.7" width="38.9" height="38.9" fill="#e4e4e4"/><rect x="218.6" y="676.7" width="38.9" height="38.9" fill="#e4e4e4"/><rect x="257.2" y="676.7" width="38.9" height="38.9" fill="#dedede"/><rect x="295.8" y="676.7" width="38.9" height="38.9" fill="#e0e0e0"/><rect x="334.4" y="676.7" width="20.9" height="38.9" fill="#e0e0e0"/><rect x="0.0" y="715.3" width="25.9" height="38.9" fill="#eaeaea"/><rect x="25.6" y="715.3" width="38.9" height="38.9" fill="#e6e6e6"/><rect x="64.2" y="715.3" width="38.9" height="38.9" fill="#ececec"/><rect x="102.8" y="715.3" width="38.9" height="38.9" fill="#e4e4e4"/><rect x="141.4" y="715.3" width="38.9" height="38.9" fill="#e8e8e8"/><rect x="180.0" y="715.3" width="38.9" height="38.9" fill="#e8e8e8"/><rect x="218.6" y="715.3" width="38.9" height="38.9" fill="#e8e8e8"/><rect x="257.2" y="715.3" width="38.9" height="38.9" fill="#fafafa"/><rect x="295.8" y="715.3" width="38.9" height="38.9" fill="#fafafa"/><rect x="334.4" y="715.3" width="20.9" height="38.9" fill="#f8f8f8"/><rect x="0.0" y="753.9" width="25.9" height="38.9" fill="#e6e6e6"/><rect x="25.6" y="753.9" width="38.9" height="38.9" fill="#e2e2e2"/><rect x="64.2" y="753.9" width="38.9" height="38.9" fill="#e2e2e2"/><rect x="102.8" y="753.9" width="38.9" height="38.9" fill="#e6e6e6"/><rect x="141.4" y="753.9" width="38.9" height="38.9" fill="#e6e6e6"/><rect x="180.0" y="753.9" width="38.9" height="38.9" fill="#e6e6e6"/><rect x="218.6" y="753.9" width="38.9" height="38.9" fill="#e6e6e6"/><rect x="257.2" y="753.9" width="38.9" height="38.9" fill="#e6e6e6"/><rect x="295.8" y="753.9" width="38.9" height="38.9" fill="#e8e8e8"/><rect x="334.4" y="753.9" width="20.9" height="38.9" fill="#e8e8e8"/><rect x="0.0" y="792.5" width="25.9" height="38.9" fill="#e2e2e2"/><rect x="25.6" y="792.5" width="38.9" height="38.9" fill="#d8d8d8"/><rect x="64.2" y="792.5" width="38.9" height="38.9" fill="#dedede"/><rect x="102.8" y="792.5" width="38.9" height="38.9" fill="#d6d6d6"/><rect x="141.4" y="792.5" width="38.9" height="38.9" fill="#dcdcdc"/><rect x="180.0" y="792.5" width="38.9" height="38.9" fill="#dcdcdc"/><rect x="218.6" y="792.5" width="38.9" height="38.9" fill="#dedede"/><rect x="257.2" y="792.5" width="38.9" height="38.9" fill="#f4f4f4"/><rect x="295.8" y="792.5" width="38.9" height="38.9" fill="#fafafa"/><rect x="334.4" y="792.5" width="20.9" height="38.9" fill="#fafafa"/><rect x="0.0" y="831.1" width="25.9" height="38.9" fill="#eaeaea"/><rect x="25.6" y="831.1" width="38.9" height="38.9" fill="#e6e6e6"/><rect x="64.2" y="831.1" width="38.9" height="38.9" fill="#e6e6e6"/><rect x="102.8" y="831.1" width="38.9" height="38.9" fill="#dcdcdc"/><rect x="141.4" y="831.1" width="38.9" height="38.9" fill="#e6e6e6"/><rect x="180.0" y="831.1" width="38.9" height="38.9" fill="#e4e4e4"/><rect x="218.6" y="831.1" width="38.9" height="38.9" fill="#e6e6e6"/><rect x="257.2" y="831.1" width="38.9" height="38.9" fill="#f6f6f6"/><rect x="295.8" y="831.1" width="38.9" height="38.9" fill="#fafafa"/><rect x="334.4" y="831.1" width="20.9" height="38.9" fill="#fafafa"/><rect x="0.0" y="869.7" width="25.9" height="38.9" fill="#ececec"/><rect x="25.6" y="869.7" width="38.9" height="38.9" fill="#eaeaea"/><rect x="64.2" y="869.7" width="38.9" height="38.9" fill="#eaeaea"/><rect x="102.8" y="869.7" width="38.9" height="38.9" fill="#e6e6e6"/><rect x="141.4" y="869.7" width="38.9" height="38.9" fill="#e8e8e8"/><rect x="180.0" y="869.7" width="38.9" height="38.9" fill="#e8e8e8"/><rect x="218.6" y="869.7" width="38.9" height="38.9" fill="#e8e8e8"/><rect x="257.2" y="869.7" width="38.9" height="38.9" fill="#f6f6f6"/><rect x="295.8" y="869.7" width="38.9" height="38.9" fill="#fafafa"/><rect x="334.4" y="869.7" width="20.9" height="38.9" fill="#fafafa"/><rect x="0.0" y="908.3" width="25.9" height="38.6" fill="#e2e2e2"/><rect x="25.6" y="908.3" width="38.9" height="38.6" fill="#dadada"/><rect x="64.2" y="908.3" width="38.9" height="38.6" fill="#e0e0e0"/><rect x="102.8" y="908.3" width="38.9" height="38.6" fill="#dedede"/><rect x="141.4" y="908.3" width="38.9" height="38.6" fill="#dedede"/><rect x="180.0" y="908.3" width="38.9" height="38.6" fill="#dedede"/><rect x="218.6" y="908.3" width="38.9" height="38.6" fill="#e0e0e0"/><rect x="257.2" y="908.3" width="38.9" height="38.6" fill="#eaeaea"/><rect x="295.8" y="908.3" width="38.9" height="38.6" fill="#f4f4f4"/><rect x="334.4" y="908.3" width="20.9" height="38.6" fill="#f6f6f6"/><rect x="0.0" y="946.6" width="25.9" height="13.7" fill="#b4b4b4"/><rect x="25.6" y="946.6" width="38.9" height="13.7" fill="#a4a4a4"/><rect x="64.2" y="946.6" width="38.9" height="13.7" fill="#a6a6a6"/><rect x="102.8" y="946.6" width="38.9" height="13.7" fill="#a6a6a6"/><rect x="141.4" y="946.6" width="38.9" height="13.7" fill="#a2a2a2"/><rect x="180.0" y="946.6" width="38.9" height="13.7" fill="#a2a2a2"/><rect x="218.6" y="946.6" width="38.9" height="13.7" fill="#a0a0a0"/><rect x="257.2" y="946.6" width="38.9" height="13.7" fill="#a2a2a2"/><rect x="295.8" y="946.6" width="38.9" height="13.7" fill="#a8a8a8"/><rect x="334.4" y="946.6" width="20.9" height="13.7" fill="#aeaeae"/></svg><div class="t" style="left:49.4px;top:446.6px;font-size:21.5px;line-height:21.5px;color:#000;font-weight:normal;letter-spacing:0.05px;font-family:'Liberation Sans', sans-serif;">1729382626105788575</div><svg class="s" style="left:46px;top:442px" width="12" height="12"><path d="M0,0 H12 L0,12 Z" fill="#3a8428"/></svg><div class="t" style="left:654.2px;top:446.6px;font-size:21.5px;line-height:21.5px;color:#000;font-weight:normal;letter-spacing:0.3px;font-family:'Liberation Sans', sans-serif;">£111.00</div><div class="t" style="left:797.2px;top:446.6px;font-size:21.5px;line-height:21.5px;color:#000;font-weight:normal;letter-spacing:0.05px;font-family:'Liberation Sans', sans-serif;">11</div><svg class="s" style="left:794px;top:442px" width="12" height="12"><path d="M0,0 H12 L0,12 Z" fill="#3a8428"/></svg><div class="t" style="left:905.2px;top:446.6px;font-size:20.3px;line-height:20.3px;color:#000;font-weight:normal;letter-spacing:0px;font-family:'Liberation Sans', sans-serif;">Unavailable</div><div class="t" style="left:1049.9px;top:446.6px;font-size:20.3px;line-height:20.3px;color:#000;font-weight:normal;letter-spacing:0px;font-family:'Liberation Sans', sans-serif;transform:scaleX(0.76);transform-origin:0 0;-webkit-text-stroke:0.35px #000">YES</div><div class="t" style="left:1203.1px;top:446.6px;font-size:21.5px;line-height:21.5px;color:#000;font-weight:normal;letter-spacing:0.05px;font-family:'Liberation Sans', sans-serif;">100</div><svg class="s" style="left:1200px;top:442px" width="12" height="12"><path d="M0,0 H12 L0,12 Z" fill="#3a8428"/></svg><div class="t" style="left:1332.1px;top:446.6px;font-size:21.5px;line-height:21.5px;color:#000;font-weight:normal;letter-spacing:0.3px;font-family:'Liberation Sans', sans-serif;">£1.11</div><div class="t" style="left:1463.8px;top:446.6px;font-size:20.3px;line-height:20.3px;color:#000;font-weight:normal;letter-spacing:0px;font-family:'Liberation Sans', sans-serif;">NO</div><div class="t" style="left:1599.4px;top:446.6px;font-size:21.5px;line-height:21.5px;color:#000;font-weight:normal;letter-spacing:0.05px;font-family:'Liberation Sans', sans-serif;">0</div><svg class="s" style="left:1596px;top:442px" width="12" height="12"><path d="M0,0 H12 L0,12 Z" fill="#3a8428"/></svg><div class="t" style="left:1727.4px;top:446.6px;font-size:21.5px;line-height:21.5px;color:#000;font-weight:normal;letter-spacing:0.05px;font-family:'Liberation Sans', sans-serif;">0</div><svg class="s" style="left:1724px;top:442px" width="12" height="12"><path d="M0,0 H12 L0,12 Z" fill="#3a8428"/></svg><div class="t" style="left:1843.3px;top:446.6px;font-size:20.3px;line-height:20.3px;color:#000;font-weight:normal;letter-spacing:0px;font-family:'Liberation Sans', sans-serif;">NO</div><div class="t" style="left:-0.5px;width:44px;text-align:center;top:446.6px;font-size:21.5px;line-height:21.5px;color:#ffffff;font-weight:normal;letter-spacing:0px;">3</div><div class="t" style="left:49.4px;top:476.6px;font-size:21.5px;line-height:21.5px;color:#000;font-weight:normal;letter-spacing:0.05px;font-family:'Liberation Sans', sans-serif;">1729392109429557407</div><svg class="s" style="left:46px;top:472px" width="12" height="12"><path d="M0,0 H12 L0,12 Z" fill="#3a8428"/></svg><div class="t" style="left:654.2px;top:476.6px;font-size:21.5px;line-height:21.5px;color:#000;font-weight:normal;letter-spacing:0.3px;font-family:'Liberation Sans', sans-serif;">£12.00</div><div class="t" style="left:797.2px;top:476.6px;font-size:21.5px;line-height:21.5px;color:#000;font-weight:normal;letter-spacing:0.05px;font-family:'Liberation Sans', sans-serif;">42</div><svg class="s" style="left:794px;top:472px" width="12" height="12"><path d="M0,0 H12 L0,12 Z" fill="#3a8428"/></svg><div class="t" style="left:905.2px;top:476.6px;font-size:20.3px;line-height:20.3px;color:#000;font-weight:normal;letter-spacing:0px;font-family:'Liberation Sans', sans-serif;">Unavailable</div><div class="t" style="left:1049.9px;top:476.6px;font-size:20.3px;line-height:20.3px;color:#000;font-weight:normal;letter-spacing:0px;font-family:'Liberation Sans', sans-serif;transform:scaleX(0.76);transform-origin:0 0;-webkit-text-stroke:0.35px #000">YES</div><div class="t" style="left:1203.1px;top:476.6px;font-size:21.5px;line-height:21.5px;color:#000;font-weight:normal;letter-spacing:0.05px;font-family:'Liberation Sans', sans-serif;">100</div><svg class="s" style="left:1200px;top:472px" width="12" height="12"><path d="M0,0 H12 L0,12 Z" fill="#3a8428"/></svg><div class="t" style="left:1332.1px;top:476.6px;font-size:21.5px;line-height:21.5px;color:#000;font-weight:normal;letter-spacing:0.3px;font-family:'Liberation Sans', sans-serif;">£0.12</div><div class="t" style="left:1463.8px;top:476.6px;font-size:20.3px;line-height:20.3px;color:#000;font-weight:normal;letter-spacing:0px;font-family:'Liberation Sans', sans-serif;">NO</div><div class="t" style="left:1599.4px;top:476.6px;font-size:21.5px;line-height:21.5px;color:#000;font-weight:normal;letter-spacing:0.05px;font-family:'Liberation Sans', sans-serif;">0</div><svg class="s" style="left:1596px;top:472px" width="12" height="12"><path d="M0,0 H12 L0,12 Z" fill="#3a8428"/></svg><div class="t" style="left:1727.4px;top:476.6px;font-size:21.5px;line-height:21.5px;color:#000;font-weight:normal;letter-spacing:0.05px;font-family:'Liberation Sans', sans-serif;">0</div><svg class="s" style="left:1724px;top:472px" width="12" height="12"><path d="M0,0 H12 L0,12 Z" fill="#3a8428"/></svg><div class="t" style="left:1843.3px;top:476.6px;font-size:20.3px;line-height:20.3px;color:#000;font-weight:normal;letter-spacing:0px;font-family:'Liberation Sans', sans-serif;">NO</div><div class="t" style="left:-0.5px;width:44px;text-align:center;top:476.6px;font-size:21.5px;line-height:21.5px;color:#ffffff;font-weight:normal;letter-spacing:0px;">4</div><div class="t" style="left:49.4px;top:506.6px;font-size:21.5px;line-height:21.5px;color:#000;font-weight:normal;letter-spacing:0.05px;font-family:'Liberation Sans', sans-serif;">1729392116290521247</div><svg class="s" style="left:46px;top:502px" width="12" height="12"><path d="M0,0 H12 L0,12 Z" fill="#3a8428"/></svg><div class="t" style="left:654.2px;top:506.6px;font-size:21.5px;line-height:21.5px;color:#000;font-weight:normal;letter-spacing:0.3px;font-family:'Liberation Sans', sans-serif;">£1.00</div><div class="t" style="left:797.2px;top:506.6px;font-size:21.5px;line-height:21.5px;color:#000;font-weight:normal;letter-spacing:0.05px;font-family:'Liberation Sans', sans-serif;">63</div><svg class="s" style="left:794px;top:502px" width="12" height="12"><path d="M0,0 H12 L0,12 Z" fill="#3a8428"/></svg><div class="t" style="left:905.2px;top:506.6px;font-size:20.3px;line-height:20.3px;color:#000;font-weight:normal;letter-spacing:0px;font-family:'Liberation Sans', sans-serif;">Unavailable</div><div class="t" style="left:1049.9px;top:506.6px;font-size:20.3px;line-height:20.3px;color:#000;font-weight:normal;letter-spacing:0px;font-family:'Liberation Sans', sans-serif;transform:scaleX(0.76);transform-origin:0 0;-webkit-text-stroke:0.35px #000">YES</div><div class="t" style="left:1203.1px;top:506.6px;font-size:21.5px;line-height:21.5px;color:#000;font-weight:normal;letter-spacing:0.05px;font-family:'Liberation Sans', sans-serif;">100</div><svg class="s" style="left:1200px;top:502px" width="12" height="12"><path d="M0,0 H12 L0,12 Z" fill="#3a8428"/></svg><div class="t" style="left:1332.1px;top:506.6px;font-size:21.5px;line-height:21.5px;color:#000;font-weight:normal;letter-spacing:0.3px;font-family:'Liberation Sans', sans-serif;">£0.01</div><div class="t" style="left:1463.8px;top:506.6px;font-size:20.3px;line-height:20.3px;color:#000;font-weight:normal;letter-spacing:0px;font-family:'Liberation Sans', sans-serif;">NO</div><div class="t" style="left:1599.4px;top:506.6px;font-size:21.5px;line-height:21.5px;color:#000;font-weight:normal;letter-spacing:0.05px;font-family:'Liberation Sans', sans-serif;">0</div><svg class="s" style="left:1596px;top:502px" width="12" height="12"><path d="M0,0 H12 L0,12 Z" fill="#3a8428"/></svg><div class="t" style="left:1727.4px;top:506.6px;font-size:21.5px;line-height:21.5px;color:#000;font-weight:normal;letter-spacing:0.05px;font-family:'Liberation Sans', sans-serif;">0</div><svg class="s" style="left:1724px;top:502px" width="12" height="12"><path d="M0,0 H12 L0,12 Z" fill="#3a8428"/></svg><div class="t" style="left:1843.3px;top:506.6px;font-size:20.3px;line-height:20.3px;color:#000;font-weight:normal;letter-spacing:0px;font-family:'Liberation Sans', sans-serif;">NO</div><div class="t" style="left:-0.5px;width:44px;text-align:center;top:506.6px;font-size:21.5px;line-height:21.5px;color:#ffffff;font-weight:normal;letter-spacing:0px;">5</div><div class="t" style="left:49.4px;top:536.6px;font-size:21.5px;line-height:21.5px;color:#000;font-weight:normal;letter-spacing:0.05px;font-family:'Liberation Sans', sans-serif;">1729397580556242079</div><svg class="s" style="left:46px;top:532px" width="12" height="12"><path d="M0,0 H12 L0,12 Z" fill="#3a8428"/></svg><div class="t" style="left:654.2px;top:536.6px;font-size:21.5px;line-height:21.5px;color:#000;font-weight:normal;letter-spacing:0.3px;font-family:'Liberation Sans', sans-serif;">£20.00</div><div class="t" style="left:797.2px;top:536.6px;font-size:21.5px;line-height:21.5px;color:#000;font-weight:normal;letter-spacing:0.05px;font-family:'Liberation Sans', sans-serif;">100</div><svg class="s" style="left:794px;top:532px" width="12" height="12"><path d="M0,0 H12 L0,12 Z" fill="#3a8428"/></svg><div class="t" style="left:905.2px;top:536.6px;font-size:20.3px;line-height:20.3px;color:#000;font-weight:normal;letter-spacing:0px;font-family:'Liberation Sans', sans-serif;">Unavailable</div><div class="t" style="left:1049.9px;top:536.6px;font-size:20.3px;line-height:20.3px;color:#000;font-weight:normal;letter-spacing:0px;font-family:'Liberation Sans', sans-serif;transform:scaleX(0.76);transform-origin:0 0;-webkit-text-stroke:0.35px #000">YES</div><div class="t" style="left:1203.1px;top:536.6px;font-size:21.5px;line-height:21.5px;color:#000;font-weight:normal;letter-spacing:0.05px;font-family:'Liberation Sans', sans-serif;">2000</div><svg class="s" style="left:1200px;top:532px" width="12" height="12"><path d="M0,0 H12 L0,12 Z" fill="#3a8428"/></svg><div class="t" style="left:1332.1px;top:536.6px;font-size:21.5px;line-height:21.5px;color:#000;font-weight:normal;letter-spacing:0.3px;font-family:'Liberation Sans', sans-serif;">£4.00</div><div class="t" style="left:1463.8px;top:536.6px;font-size:20.3px;line-height:20.3px;color:#000;font-weight:normal;letter-spacing:0px;font-family:'Liberation Sans', sans-serif;">NO</div><div class="t" style="left:1599.4px;top:536.6px;font-size:21.5px;line-height:21.5px;color:#000;font-weight:normal;letter-spacing:0.05px;font-family:'Liberation Sans', sans-serif;">1</div><svg class="s" style="left:1596px;top:532px" width="12" height="12"><path d="M0,0 H12 L0,12 Z" fill="#3a8428"/></svg><div class="t" style="left:1727.4px;top:536.6px;font-size:21.5px;line-height:21.5px;color:#000;font-weight:normal;letter-spacing:0.05px;font-family:'Liberation Sans', sans-serif;">0</div><svg class="s" style="left:1724px;top:532px" width="12" height="12"><path d="M0,0 H12 L0,12 Z" fill="#3a8428"/></svg><div class="t" style="left:1843.3px;top:536.6px;font-size:20.3px;line-height:20.3px;color:#000;font-weight:normal;letter-spacing:0px;font-family:'Liberation Sans', sans-serif;">NO</div><div class="t" style="left:-0.5px;width:44px;text-align:center;top:536.6px;font-size:21.5px;line-height:21.5px;color:#ffffff;font-weight:normal;letter-spacing:0px;">6</div><div class="t" style="left:49.4px;top:566.6px;font-size:21.5px;line-height:21.5px;color:#000;font-weight:normal;letter-spacing:0.05px;font-family:'Liberation Sans', sans-serif;">1729397880617208991</div><svg class="s" style="left:46px;top:562px" width="12" height="12"><path d="M0,0 H12 L0,12 Z" fill="#3a8428"/></svg><div class="t" style="left:654.2px;top:566.6px;font-size:21.5px;line-height:21.5px;color:#000;font-weight:normal;letter-spacing:0.3px;font-family:'Liberation Sans', sans-serif;">£0.10</div><div class="t" style="left:797.2px;top:566.6px;font-size:21.5px;line-height:21.5px;color:#000;font-weight:normal;letter-spacing:0.05px;font-family:'Liberation Sans', sans-serif;">700</div><svg class="s" style="left:794px;top:562px" width="12" height="12"><path d="M0,0 H12 L0,12 Z" fill="#3a8428"/></svg><div class="t" style="left:905.2px;top:566.6px;font-size:20.3px;line-height:20.3px;color:#000;font-weight:normal;letter-spacing:0px;font-family:'Liberation Sans', sans-serif;">Unavailable</div><div class="t" style="left:1049.9px;top:566.6px;font-size:20.3px;line-height:20.3px;color:#000;font-weight:normal;letter-spacing:0px;font-family:'Liberation Sans', sans-serif;">NO</div><div class="t" style="left:1463.8px;top:566.6px;font-size:20.3px;line-height:20.3px;color:#000;font-weight:normal;letter-spacing:0px;font-family:'Liberation Sans', sans-serif;">NO</div><div class="t" style="left:1843.3px;top:566.6px;font-size:20.3px;line-height:20.3px;color:#000;font-weight:normal;letter-spacing:0px;font-family:'Liberation Sans', sans-serif;">NO</div><div class="t" style="left:-0.5px;width:44px;text-align:center;top:566.6px;font-size:21.5px;line-height:21.5px;color:#ffffff;font-weight:normal;letter-spacing:0px;">7</div><div class="t" style="left:49.4px;top:596.6px;font-size:21.5px;line-height:21.5px;color:#000;font-weight:normal;letter-spacing:0.05px;font-family:'Liberation Sans', sans-serif;">1729398522943081631</div><svg class="s" style="left:46px;top:592px" width="12" height="12"><path d="M0,0 H12 L0,12 Z" fill="#3a8428"/></svg><div class="t" style="left:654.2px;top:596.6px;font-size:21.5px;line-height:21.5px;color:#000;font-weight:normal;letter-spacing:0.3px;font-family:'Liberation Sans', sans-serif;">£549.31</div><div class="t" style="left:797.2px;top:596.6px;font-size:21.5px;line-height:21.5px;color:#000;font-weight:normal;letter-spacing:0.05px;font-family:'Liberation Sans', sans-serif;">2232</div><svg class="s" style="left:794px;top:592px" width="12" height="12"><path d="M0,0 H12 L0,12 Z" fill="#3a8428"/></svg><div class="t" style="left:905.2px;top:596.6px;font-size:20.3px;line-height:20.3px;color:#000;font-weight:normal;letter-spacing:0px;font-family:'Liberation Sans', sans-serif;">Unavailable</div><div class="t" style="left:1049.9px;top:596.6px;font-size:20.3px;line-height:20.3px;color:#000;font-weight:normal;letter-spacing:0px;font-family:'Liberation Sans', sans-serif;">NO</div><div class="t" style="left:1463.8px;top:596.6px;font-size:20.3px;line-height:20.3px;color:#000;font-weight:normal;letter-spacing:0px;font-family:'Liberation Sans', sans-serif;">NO</div><div class="t" style="left:1843.3px;top:596.6px;font-size:20.3px;line-height:20.3px;color:#000;font-weight:normal;letter-spacing:0px;font-family:'Liberation Sans', sans-serif;">NO</div><div class="t" style="left:-0.5px;width:44px;text-align:center;top:596.6px;font-size:21.5px;line-height:21.5px;color:#ffffff;font-weight:normal;letter-spacing:0px;">8</div><div class="t" style="left:49.4px;top:626.6px;font-size:21.5px;line-height:21.5px;color:#000;font-weight:normal;letter-spacing:0.05px;font-family:'Liberation Sans', sans-serif;">1729398523822967967</div><svg class="s" style="left:46px;top:622px" width="12" height="12"><path d="M0,0 H12 L0,12 Z" fill="#3a8428"/></svg><div class="t" style="left:654.2px;top:626.6px;font-size:21.5px;line-height:21.5px;color:#000;font-weight:normal;letter-spacing:0.3px;font-family:'Liberation Sans', sans-serif;">£627.80</div><div class="t" style="left:797.2px;top:626.6px;font-size:21.5px;line-height:21.5px;color:#000;font-weight:normal;letter-spacing:0.05px;font-family:'Liberation Sans', sans-serif;">2232</div><svg class="s" style="left:794px;top:622px" width="12" height="12"><path d="M0,0 H12 L0,12 Z" fill="#3a8428"/></svg><div class="t" style="left:905.2px;top:626.6px;font-size:20.3px;line-height:20.3px;color:#000;font-weight:normal;letter-spacing:0px;font-family:'Liberation Sans', sans-serif;">Available</div><div class="t" style="left:1049.9px;top:626.6px;font-size:20.3px;line-height:20.3px;color:#000;font-weight:normal;letter-spacing:0px;font-family:'Liberation Sans', sans-serif;transform:scaleX(0.76);transform-origin:0 0;-webkit-text-stroke:0.35px #000">YES</div><div class="t" style="left:1203.1px;top:626.6px;font-size:21.5px;line-height:21.5px;color:#000;font-weight:normal;letter-spacing:0.05px;font-family:'Liberation Sans', sans-serif;">1500</div><svg class="s" style="left:1200px;top:622px" width="12" height="12"><path d="M0,0 H12 L0,12 Z" fill="#3a8428"/></svg><div class="t" style="left:1332.1px;top:626.6px;font-size:21.5px;line-height:21.5px;color:#000;font-weight:normal;letter-spacing:0.3px;font-family:'Liberation Sans', sans-serif;">£94.17</div><div class="t" style="left:1463.8px;top:626.6px;font-size:20.3px;line-height:20.3px;color:#000;font-weight:normal;letter-spacing:0px;font-family:'Liberation Sans', sans-serif;">NO</div><div class="t" style="left:1599.4px;top:626.6px;font-size:21.5px;line-height:21.5px;color:#000;font-weight:normal;letter-spacing:0.05px;font-family:'Liberation Sans', sans-serif;">1</div><svg class="s" style="left:1596px;top:622px" width="12" height="12"><path d="M0,0 H12 L0,12 Z" fill="#3a8428"/></svg><div class="t" style="left:1727.4px;top:626.6px;font-size:21.5px;line-height:21.5px;color:#000;font-weight:normal;letter-spacing:0.05px;font-family:'Liberation Sans', sans-serif;">0</div><svg class="s" style="left:1724px;top:622px" width="12" height="12"><path d="M0,0 H12 L0,12 Z" fill="#3a8428"/></svg><div class="t" style="left:1843.3px;top:626.6px;font-size:20.3px;line-height:20.3px;color:#000;font-weight:normal;letter-spacing:0px;font-family:'Liberation Sans', sans-serif;">NO</div><div class="t" style="left:-0.5px;width:44px;text-align:center;top:626.6px;font-size:21.5px;line-height:21.5px;color:#ffffff;font-weight:normal;letter-spacing:0px;">9</div><div class="t" style="left:49.4px;top:656.6px;font-size:21.5px;line-height:21.5px;color:#000;font-weight:normal;letter-spacing:0.05px;font-family:'Liberation Sans', sans-serif;">1729398552845257887</div><svg class="s" style="left:46px;top:652px" width="12" height="12"><path d="M0,0 H12 L0,12 Z" fill="#3a8428"/></svg><div class="t" style="left:654.2px;top:656.6px;font-size:21.5px;line-height:21.5px;color:#000;font-weight:normal;letter-spacing:0.3px;font-family:'Liberation Sans', sans-serif;">£549.31</div><div class="t" style="left:797.2px;top:656.6px;font-size:21.5px;line-height:21.5px;color:#000;font-weight:normal;letter-spacing:0.05px;font-family:'Liberation Sans', sans-serif;">2232</div><svg class="s" style="left:794px;top:652px" width="12" height="12"><path d="M0,0 H12 L0,12 Z" fill="#3a8428"/></svg><div class="t" style="left:905.2px;top:656.6px;font-size:20.3px;line-height:20.3px;color:#000;font-weight:normal;letter-spacing:0px;font-family:'Liberation Sans', sans-serif;">Unavailable</div><div class="t" style="left:1049.9px;top:656.6px;font-size:20.3px;line-height:20.3px;color:#000;font-weight:normal;letter-spacing:0px;font-family:'Liberation Sans', sans-serif;">NO</div><div class="t" style="left:1463.8px;top:656.6px;font-size:20.3px;line-height:20.3px;color:#000;font-weight:normal;letter-spacing:0px;font-family:'Liberation Sans', sans-serif;">NO</div><div class="t" style="left:1843.3px;top:656.6px;font-size:20.3px;line-height:20.3px;color:#000;font-weight:normal;letter-spacing:0px;font-family:'Liberation Sans', sans-serif;">NO</div><div class="t" style="left:-0.5px;width:44px;text-align:center;top:656.6px;font-size:21.5px;line-height:21.5px;color:#ffffff;font-weight:normal;letter-spacing:0px;">10</div><div class="t" style="left:49.4px;top:686.6px;font-size:21.5px;line-height:21.5px;color:#000;font-weight:normal;letter-spacing:0.05px;font-family:'Liberation Sans', sans-serif;">1729398552977378463</div><svg class="s" style="left:46px;top:682px" width="12" height="12"><path d="M0,0 H12 L0,12 Z" fill="#3a8428"/></svg><div class="t" style="left:654.2px;top:686.6px;font-size:21.5px;line-height:21.5px;color:#000;font-weight:normal;letter-spacing:0.3px;font-family:'Liberation Sans', sans-serif;">£1.00</div><div class="t" style="left:797.2px;top:686.6px;font-size:21.5px;line-height:21.5px;color:#000;font-weight:normal;letter-spacing:0.05px;font-family:'Liberation Sans', sans-serif;">200</div><svg class="s" style="left:794px;top:682px" width="12" height="12"><path d="M0,0 H12 L0,12 Z" fill="#3a8428"/></svg><div class="t" style="left:905.2px;top:686.6px;font-size:20.3px;line-height:20.3px;color:#000;font-weight:normal;letter-spacing:0px;font-family:'Liberation Sans', sans-serif;">Available</div><div class="t" style="left:1049.9px;top:686.6px;font-size:20.3px;line-height:20.3px;color:#000;font-weight:normal;letter-spacing:0px;font-family:'Liberation Sans', sans-serif;transform:scaleX(0.76);transform-origin:0 0;-webkit-text-stroke:0.35px #000">YES</div><div class="t" style="left:1203.1px;top:686.6px;font-size:21.5px;line-height:21.5px;color:#000;font-weight:normal;letter-spacing:0.05px;font-family:'Liberation Sans', sans-serif;">1500</div><svg class="s" style="left:1200px;top:682px" width="12" height="12"><path d="M0,0 H12 L0,12 Z" fill="#3a8428"/></svg><div class="t" style="left:1332.1px;top:686.6px;font-size:21.5px;line-height:21.5px;color:#000;font-weight:normal;letter-spacing:0.3px;font-family:'Liberation Sans', sans-serif;">£0.15</div><div class="t" style="left:1463.8px;top:686.6px;font-size:20.3px;line-height:20.3px;color:#000;font-weight:normal;letter-spacing:0px;font-family:'Liberation Sans', sans-serif;">NO</div><div class="t" style="left:1599.4px;top:686.6px;font-size:21.5px;line-height:21.5px;color:#000;font-weight:normal;letter-spacing:0.05px;font-family:'Liberation Sans', sans-serif;">2</div><svg class="s" style="left:1596px;top:682px" width="12" height="12"><path d="M0,0 H12 L0,12 Z" fill="#3a8428"/></svg><div class="t" style="left:1727.4px;top:686.6px;font-size:21.5px;line-height:21.5px;color:#000;font-weight:normal;letter-spacing:0.05px;font-family:'Liberation Sans', sans-serif;">0</div><svg class="s" style="left:1724px;top:682px" width="12" height="12"><path d="M0,0 H12 L0,12 Z" fill="#3a8428"/></svg><div class="t" style="left:1843.3px;top:686.6px;font-size:20.3px;line-height:20.3px;color:#000;font-weight:normal;letter-spacing:0px;font-family:'Liberation Sans', sans-serif;transform:scaleX(0.76);transform-origin:0 0;-webkit-text-stroke:0.35px #000">YES</div><div class="t" style="left:-0.5px;width:44px;text-align:center;top:686.6px;font-size:21.5px;line-height:21.5px;color:#ffffff;font-weight:normal;letter-spacing:0px;">11</div><div class="t" style="left:49.4px;top:716.6px;font-size:21.5px;line-height:21.5px;color:#000;font-weight:normal;letter-spacing:0.05px;font-family:'Liberation Sans', sans-serif;">1729399826116938911</div><svg class="s" style="left:46px;top:712px" width="12" height="12"><path d="M0,0 H12 L0,12 Z" fill="#3a8428"/></svg><div class="t" style="left:654.2px;top:716.6px;font-size:21.5px;line-height:21.5px;color:#000;font-weight:normal;letter-spacing:0.3px;font-family:'Liberation Sans', sans-serif;">£2.00</div><div class="t" style="left:797.2px;top:716.6px;font-size:21.5px;line-height:21.5px;color:#000;font-weight:normal;letter-spacing:0.05px;font-family:'Liberation Sans', sans-serif;">115</div><svg class="s" style="left:794px;top:712px" width="12" height="12"><path d="M0,0 H12 L0,12 Z" fill="#3a8428"/></svg><div class="t" style="left:905.2px;top:716.6px;font-size:20.3px;line-height:20.3px;color:#000;font-weight:normal;letter-spacing:0px;font-family:'Liberation Sans', sans-serif;">Unavailable</div><div class="t" style="left:1049.9px;top:716.6px;font-size:20.3px;line-height:20.3px;color:#000;font-weight:normal;letter-spacing:0px;font-family:'Liberation Sans', sans-serif;transform:scaleX(0.76);transform-origin:0 0;-webkit-text-stroke:0.35px #000">YES</div><div class="t" style="left:1203.1px;top:716.6px;font-size:21.5px;line-height:21.5px;color:#000;font-weight:normal;letter-spacing:0.05px;font-family:'Liberation Sans', sans-serif;">1500</div><svg class="s" style="left:1200px;top:712px" width="12" height="12"><path d="M0,0 H12 L0,12 Z" fill="#3a8428"/></svg><div class="t" style="left:1332.1px;top:716.6px;font-size:21.5px;line-height:21.5px;color:#000;font-weight:normal;letter-spacing:0.3px;font-family:'Liberation Sans', sans-serif;">£0.30</div><div class="t" style="left:1463.8px;top:716.6px;font-size:20.3px;line-height:20.3px;color:#000;font-weight:normal;letter-spacing:0px;font-family:'Liberation Sans', sans-serif;">NO</div><div class="t" style="left:1599.4px;top:716.6px;font-size:21.5px;line-height:21.5px;color:#000;font-weight:normal;letter-spacing:0.05px;font-family:'Liberation Sans', sans-serif;">6</div><svg class="s" style="left:1596px;top:712px" width="12" height="12"><path d="M0,0 H12 L0,12 Z" fill="#3a8428"/></svg><div class="t" style="left:1727.4px;top:716.6px;font-size:21.5px;line-height:21.5px;color:#000;font-weight:normal;letter-spacing:0.05px;font-family:'Liberation Sans', sans-serif;">0</div><svg class="s" style="left:1724px;top:712px" width="12" height="12"><path d="M0,0 H12 L0,12 Z" fill="#3a8428"/></svg><div class="t" style="left:1843.3px;top:716.6px;font-size:20.3px;line-height:20.3px;color:#000;font-weight:normal;letter-spacing:0px;font-family:'Liberation Sans', sans-serif;">NO</div><div class="t" style="left:-0.5px;width:44px;text-align:center;top:716.6px;font-size:21.5px;line-height:21.5px;color:#ffffff;font-weight:normal;letter-spacing:0px;">12</div><div class="t" style="left:49.4px;top:746.6px;font-size:21.5px;line-height:21.5px;color:#000;font-weight:normal;letter-spacing:0.05px;font-family:'Liberation Sans', sans-serif;">1729399845379476639</div><svg class="s" style="left:46px;top:742px" width="12" height="12"><path d="M0,0 H12 L0,12 Z" fill="#3a8428"/></svg><div class="t" style="left:654.2px;top:746.6px;font-size:21.5px;line-height:21.5px;color:#000;font-weight:normal;letter-spacing:0.3px;font-family:'Liberation Sans', sans-serif;">£0.01</div><div class="t" style="left:797.2px;top:746.6px;font-size:21.5px;line-height:21.5px;color:#000;font-weight:normal;letter-spacing:0.05px;font-family:'Liberation Sans', sans-serif;">1000</div><svg class="s" style="left:794px;top:742px" width="12" height="12"><path d="M0,0 H12 L0,12 Z" fill="#3a8428"/></svg><div class="t" style="left:905.2px;top:746.6px;font-size:20.3px;line-height:20.3px;color:#000;font-weight:normal;letter-spacing:0px;font-family:'Liberation Sans', sans-serif;">Unavailable</div><div class="t" style="left:1049.9px;top:746.6px;font-size:20.3px;line-height:20.3px;color:#000;font-weight:normal;letter-spacing:0px;font-family:'Liberation Sans', sans-serif;transform:scaleX(0.76);transform-origin:0 0;-webkit-text-stroke:0.35px #000">YES</div><div class="t" style="left:1203.1px;top:746.6px;font-size:21.5px;line-height:21.5px;color:#000;font-weight:normal;letter-spacing:0.05px;font-family:'Liberation Sans', sans-serif;">1100</div><svg class="s" style="left:1200px;top:742px" width="12" height="12"><path d="M0,0 H12 L0,12 Z" fill="#3a8428"/></svg><div class="t" style="left:1332.1px;top:746.6px;font-size:21.5px;line-height:21.5px;color:#000;font-weight:normal;letter-spacing:0.3px;font-family:'Liberation Sans', sans-serif;">£0.00</div><div class="t" style="left:1463.8px;top:746.6px;font-size:20.3px;line-height:20.3px;color:#000;font-weight:normal;letter-spacing:0px;font-family:'Liberation Sans', sans-serif;">NO</div><div class="t" style="left:1599.4px;top:746.6px;font-size:21.5px;line-height:21.5px;color:#000;font-weight:normal;letter-spacing:0.05px;font-family:'Liberation Sans', sans-serif;">2</div><svg class="s" style="left:1596px;top:742px" width="12" height="12"><path d="M0,0 H12 L0,12 Z" fill="#3a8428"/></svg><div class="t" style="left:1727.4px;top:746.6px;font-size:21.5px;line-height:21.5px;color:#000;font-weight:normal;letter-spacing:0.05px;font-family:'Liberation Sans', sans-serif;">0</div><svg class="s" style="left:1724px;top:742px" width="12" height="12"><path d="M0,0 H12 L0,12 Z" fill="#3a8428"/></svg><div class="t" style="left:1843.3px;top:746.6px;font-size:20.3px;line-height:20.3px;color:#000;font-weight:normal;letter-spacing:0px;font-family:'Liberation Sans', sans-serif;">NO</div><div class="t" style="left:-0.5px;width:44px;text-align:center;top:746.6px;font-size:21.5px;line-height:21.5px;color:#ffffff;font-weight:normal;letter-spacing:0px;">13</div><div class="t" style="left:49.4px;top:776.6px;font-size:21.5px;line-height:21.5px;color:#000;font-weight:normal;letter-spacing:0.05px;font-family:'Liberation Sans', sans-serif;">1729399872950340767</div><svg class="s" style="left:46px;top:772px" width="12" height="12"><path d="M0,0 H12 L0,12 Z" fill="#3a8428"/></svg><div class="t" style="left:654.2px;top:776.6px;font-size:21.5px;line-height:21.5px;color:#000;font-weight:normal;letter-spacing:0.3px;font-family:'Liberation Sans', sans-serif;">£2.00</div><div class="t" style="left:797.2px;top:776.6px;font-size:21.5px;line-height:21.5px;color:#000;font-weight:normal;letter-spacing:0.05px;font-family:'Liberation Sans', sans-serif;">2466</div><svg class="s" style="left:794px;top:772px" width="12" height="12"><path d="M0,0 H12 L0,12 Z" fill="#3a8428"/></svg><div class="t" style="left:905.2px;top:776.6px;font-size:20.3px;line-height:20.3px;color:#000;font-weight:normal;letter-spacing:0px;font-family:'Liberation Sans', sans-serif;">Unavailable</div><div class="t" style="left:1049.9px;top:776.6px;font-size:20.3px;line-height:20.3px;color:#000;font-weight:normal;letter-spacing:0px;font-family:'Liberation Sans', sans-serif;transform:scaleX(0.76);transform-origin:0 0;-webkit-text-stroke:0.35px #000">YES</div><div class="t" style="left:1203.1px;top:776.6px;font-size:21.5px;line-height:21.5px;color:#000;font-weight:normal;letter-spacing:0.05px;font-family:'Liberation Sans', sans-serif;">1300</div><svg class="s" style="left:1200px;top:772px" width="12" height="12"><path d="M0,0 H12 L0,12 Z" fill="#3a8428"/></svg><div class="t" style="left:1332.1px;top:776.6px;font-size:21.5px;line-height:21.5px;color:#000;font-weight:normal;letter-spacing:0.3px;font-family:'Liberation Sans', sans-serif;">£0.26</div><div class="t" style="left:1463.8px;top:776.6px;font-size:20.3px;line-height:20.3px;color:#000;font-weight:normal;letter-spacing:0px;font-family:'Liberation Sans', sans-serif;">NO</div><div class="t" style="left:1599.4px;top:776.6px;font-size:21.5px;line-height:21.5px;color:#000;font-weight:normal;letter-spacing:0.05px;font-family:'Liberation Sans', sans-serif;">8</div><svg class="s" style="left:1596px;top:772px" width="12" height="12"><path d="M0,0 H12 L0,12 Z" fill="#3a8428"/></svg><div class="t" style="left:1727.4px;top:776.6px;font-size:21.5px;line-height:21.5px;color:#000;font-weight:normal;letter-spacing:0.05px;font-family:'Liberation Sans', sans-serif;">0</div><svg class="s" style="left:1724px;top:772px" width="12" height="12"><path d="M0,0 H12 L0,12 Z" fill="#3a8428"/></svg><div class="t" style="left:1843.3px;top:776.6px;font-size:20.3px;line-height:20.3px;color:#000;font-weight:normal;letter-spacing:0px;font-family:'Liberation Sans', sans-serif;">NO</div><div class="t" style="left:-0.5px;width:44px;text-align:center;top:776.6px;font-size:21.5px;line-height:21.5px;color:#ffffff;font-weight:normal;letter-spacing:0px;">14</div><div class="t" style="left:49.4px;top:806.6px;font-size:21.5px;line-height:21.5px;color:#000;font-weight:normal;letter-spacing:0.05px;font-family:'Liberation Sans', sans-serif;">1729399873514146975</div><svg class="s" style="left:46px;top:802px" width="12" height="12"><path d="M0,0 H12 L0,12 Z" fill="#3a8428"/></svg><div class="t" style="left:654.2px;top:806.6px;font-size:21.5px;line-height:21.5px;color:#000;font-weight:normal;letter-spacing:0.3px;font-family:'Liberation Sans', sans-serif;">£2.00</div><div class="t" style="left:797.2px;top:806.6px;font-size:21.5px;line-height:21.5px;color:#000;font-weight:normal;letter-spacing:0.05px;font-family:'Liberation Sans', sans-serif;">1233</div><svg class="s" style="left:794px;top:802px" width="12" height="12"><path d="M0,0 H12 L0,12 Z" fill="#3a8428"/></svg><div class="t" style="left:905.2px;top:806.6px;font-size:20.3px;line-height:20.3px;color:#000;font-weight:normal;letter-spacing:0px;font-family:'Liberation Sans', sans-serif;">Unavailable</div><div class="t" style="left:1049.9px;top:806.6px;font-size:20.3px;line-height:20.3px;color:#000;font-weight:normal;letter-spacing:0px;font-family:'Liberation Sans', sans-serif;transform:scaleX(0.76);transform-origin:0 0;-webkit-text-stroke:0.35px #000">YES</div><div class="t" style="left:1203.1px;top:806.6px;font-size:21.5px;line-height:21.5px;color:#000;font-weight:normal;letter-spacing:0.05px;font-family:'Liberation Sans', sans-serif;">1100</div><svg class="s" style="left:1200px;top:802px" width="12" height="12"><path d="M0,0 H12 L0,12 Z" fill="#3a8428"/></svg><div class="t" style="left:1332.1px;top:806.6px;font-size:21.5px;line-height:21.5px;color:#000;font-weight:normal;letter-spacing:0.3px;font-family:'Liberation Sans', sans-serif;">£0.22</div><div class="t" style="left:1463.8px;top:806.6px;font-size:20.3px;line-height:20.3px;color:#000;font-weight:normal;letter-spacing:0px;font-family:'Liberation Sans', sans-serif;">NO</div><div class="t" style="left:1599.4px;top:806.6px;font-size:21.5px;line-height:21.5px;color:#000;font-weight:normal;letter-spacing:0.05px;font-family:'Liberation Sans', sans-serif;">5</div><svg class="s" style="left:1596px;top:802px" width="12" height="12"><path d="M0,0 H12 L0,12 Z" fill="#3a8428"/></svg><div class="t" style="left:1727.4px;top:806.6px;font-size:21.5px;line-height:21.5px;color:#000;font-weight:normal;letter-spacing:0.05px;font-family:'Liberation Sans', sans-serif;">0</div><svg class="s" style="left:1724px;top:802px" width="12" height="12"><path d="M0,0 H12 L0,12 Z" fill="#3a8428"/></svg><div class="t" style="left:1843.3px;top:806.6px;font-size:20.3px;line-height:20.3px;color:#000;font-weight:normal;letter-spacing:0px;font-family:'Liberation Sans', sans-serif;">NO</div><div class="t" style="left:-0.5px;width:44px;text-align:center;top:806.6px;font-size:21.5px;line-height:21.5px;color:#ffffff;font-weight:normal;letter-spacing:0px;">15</div><div class="t" style="left:49.4px;top:836.6px;font-size:21.5px;line-height:21.5px;color:#000;font-weight:normal;letter-spacing:0.05px;font-family:'Liberation Sans', sans-serif;">1729399873544359071</div><svg class="s" style="left:46px;top:832px" width="12" height="12"><path d="M0,0 H12 L0,12 Z" fill="#3a8428"/></svg><div class="t" style="left:654.2px;top:836.6px;font-size:21.5px;line-height:21.5px;color:#000;font-weight:normal;letter-spacing:0.3px;font-family:'Liberation Sans', sans-serif;">£3.00</div><div class="t" style="left:797.2px;top:836.6px;font-size:21.5px;line-height:21.5px;color:#000;font-weight:normal;letter-spacing:0.05px;font-family:'Liberation Sans', sans-serif;">1111</div><svg class="s" style="left:794px;top:832px" width="12" height="12"><path d="M0,0 H12 L0,12 Z" fill="#3a8428"/></svg><div class="t" style="left:905.2px;top:836.6px;font-size:20.3px;line-height:20.3px;color:#000;font-weight:normal;letter-spacing:0px;font-family:'Liberation Sans', sans-serif;">Unavailable</div><div class="t" style="left:1049.9px;top:836.6px;font-size:20.3px;line-height:20.3px;color:#000;font-weight:normal;letter-spacing:0px;font-family:'Liberation Sans', sans-serif;transform:scaleX(0.76);transform-origin:0 0;-webkit-text-stroke:0.35px #000">YES</div><div class="t" style="left:1203.1px;top:836.6px;font-size:21.5px;line-height:21.5px;color:#000;font-weight:normal;letter-spacing:0.05px;font-family:'Liberation Sans', sans-serif;">1100</div><svg class="s" style="left:1200px;top:832px" width="12" height="12"><path d="M0,0 H12 L0,12 Z" fill="#3a8428"/></svg><div class="t" style="left:1332.1px;top:836.6px;font-size:21.5px;line-height:21.5px;color:#000;font-weight:normal;letter-spacing:0.3px;font-family:'Liberation Sans', sans-serif;">£0.33</div><div class="t" style="left:1463.8px;top:836.6px;font-size:20.3px;line-height:20.3px;color:#000;font-weight:normal;letter-spacing:0px;font-family:'Liberation Sans', sans-serif;">NO</div><div class="t" style="left:1599.4px;top:836.6px;font-size:21.5px;line-height:21.5px;color:#000;font-weight:normal;letter-spacing:0.05px;font-family:'Liberation Sans', sans-serif;">2</div><svg class="s" style="left:1596px;top:832px" width="12" height="12"><path d="M0,0 H12 L0,12 Z" fill="#3a8428"/></svg><div class="t" style="left:1727.4px;top:836.6px;font-size:21.5px;line-height:21.5px;color:#000;font-weight:normal;letter-spacing:0.05px;font-family:'Liberation Sans', sans-serif;">0</div><svg class="s" style="left:1724px;top:832px" width="12" height="12"><path d="M0,0 H12 L0,12 Z" fill="#3a8428"/></svg><div class="t" style="left:1843.3px;top:836.6px;font-size:20.3px;line-height:20.3px;color:#000;font-weight:normal;letter-spacing:0px;font-family:'Liberation Sans', sans-serif;">NO</div><div class="t" style="left:-0.5px;width:44px;text-align:center;top:836.6px;font-size:21.5px;line-height:21.5px;color:#ffffff;font-weight:normal;letter-spacing:0px;">16</div><div class="t" style="left:49.4px;top:866.6px;font-size:21.5px;line-height:21.5px;color:#000;font-weight:normal;letter-spacing:0.05px;font-family:'Liberation Sans', sans-serif;">1729399929769135263</div><svg class="s" style="left:46px;top:862px" width="12" height="12"><path d="M0,0 H12 L0,12 Z" fill="#3a8428"/></svg><div class="t" style="left:654.2px;top:866.6px;font-size:21.5px;line-height:21.5px;color:#000;font-weight:normal;letter-spacing:0.3px;font-family:'Liberation Sans', sans-serif;">£549.31</div><div class="t" style="left:797.2px;top:866.6px;font-size:21.5px;line-height:21.5px;color:#000;font-weight:normal;letter-spacing:0.05px;font-family:'Liberation Sans', sans-serif;">0</div><svg class="s" style="left:794px;top:862px" width="12" height="12"><path d="M0,0 H12 L0,12 Z" fill="#3a8428"/></svg><div class="t" style="left:905.2px;top:866.6px;font-size:20.3px;line-height:20.3px;color:#000;font-weight:normal;letter-spacing:0px;font-family:'Liberation Sans', sans-serif;">Unavailable</div><div class="t" style="left:1049.9px;top:866.6px;font-size:20.3px;line-height:20.3px;color:#000;font-weight:normal;letter-spacing:0px;font-family:'Liberation Sans', sans-serif;transform:scaleX(0.76);transform-origin:0 0;-webkit-text-stroke:0.35px #000">YES</div><div class="t" style="left:1203.1px;top:866.6px;font-size:21.5px;line-height:21.5px;color:#000;font-weight:normal;letter-spacing:0.05px;font-family:'Liberation Sans', sans-serif;">1000</div><svg class="s" style="left:1200px;top:862px" width="12" height="12"><path d="M0,0 H12 L0,12 Z" fill="#3a8428"/></svg><div class="t" style="left:1332.1px;top:866.6px;font-size:21.5px;line-height:21.5px;color:#000;font-weight:normal;letter-spacing:0.3px;font-family:'Liberation Sans', sans-serif;">£54.93</div><div class="t" style="left:1463.8px;top:866.6px;font-size:20.3px;line-height:20.3px;color:#000;font-weight:normal;letter-spacing:0px;font-family:'Liberation Sans', sans-serif;">NO</div><div class="t" style="left:1599.4px;top:866.6px;font-size:21.5px;line-height:21.5px;color:#000;font-weight:normal;letter-spacing:0.05px;font-family:'Liberation Sans', sans-serif;">0</div><svg class="s" style="left:1596px;top:862px" width="12" height="12"><path d="M0,0 H12 L0,12 Z" fill="#3a8428"/></svg><div class="t" style="left:1727.4px;top:866.6px;font-size:21.5px;line-height:21.5px;color:#000;font-weight:normal;letter-spacing:0.05px;font-family:'Liberation Sans', sans-serif;">0</div><svg class="s" style="left:1724px;top:862px" width="12" height="12"><path d="M0,0 H12 L0,12 Z" fill="#3a8428"/></svg><div class="t" style="left:1843.3px;top:866.6px;font-size:20.3px;line-height:20.3px;color:#000;font-weight:normal;letter-spacing:0px;font-family:'Liberation Sans', sans-serif;">NO</div><div class="t" style="left:-0.5px;width:44px;text-align:center;top:866.6px;font-size:21.5px;line-height:21.5px;color:#ffffff;font-weight:normal;letter-spacing:0px;">17</div><div class="t" style="left:49.4px;top:896.6px;font-size:21.5px;line-height:21.5px;color:#000;font-weight:normal;letter-spacing:0.05px;font-family:'Liberation Sans', sans-serif;">1729399929790565535</div><svg class="s" style="left:46px;top:892px" width="12" height="12"><path d="M0,0 H12 L0,12 Z" fill="#3a8428"/></svg><div class="t" style="left:654.2px;top:896.6px;font-size:21.5px;line-height:21.5px;color:#000;font-weight:normal;letter-spacing:0.3px;font-family:'Liberation Sans', sans-serif;">£525.77</div><div class="t" style="left:797.2px;top:896.6px;font-size:21.5px;line-height:21.5px;color:#000;font-weight:normal;letter-spacing:0.05px;font-family:'Liberation Sans', sans-serif;">21</div><svg class="s" style="left:794px;top:892px" width="12" height="12"><path d="M0,0 H12 L0,12 Z" fill="#3a8428"/></svg><div class="t" style="left:905.2px;top:896.6px;font-size:20.3px;line-height:20.3px;color:#000;font-weight:normal;letter-spacing:0px;font-family:'Liberation Sans', sans-serif;">Unavailable</div><div class="t" style="left:1049.9px;top:896.6px;font-size:20.3px;line-height:20.3px;color:#000;font-weight:normal;letter-spacing:0px;font-family:'Liberation Sans', sans-serif;transform:scaleX(0.76);transform-origin:0 0;-webkit-text-stroke:0.35px #000">YES</div><div class="t" style="left:1203.1px;top:896.6px;font-size:21.5px;line-height:21.5px;color:#000;font-weight:normal;letter-spacing:0.05px;font-family:'Liberation Sans', sans-serif;">1500</div><svg class="s" style="left:1200px;top:892px" width="12" height="12"><path d="M0,0 H12 L0,12 Z" fill="#3a8428"/></svg><div class="t" style="left:1332.1px;top:896.6px;font-size:21.5px;line-height:21.5px;color:#000;font-weight:normal;letter-spacing:0.3px;font-family:'Liberation Sans', sans-serif;">£78.87</div><div class="t" style="left:1463.8px;top:896.6px;font-size:20.3px;line-height:20.3px;color:#000;font-weight:normal;letter-spacing:0px;font-family:'Liberation Sans', sans-serif;">NO</div><div class="t" style="left:1599.4px;top:896.6px;font-size:21.5px;line-height:21.5px;color:#000;font-weight:normal;letter-spacing:0.05px;font-family:'Liberation Sans', sans-serif;">5</div><svg class="s" style="left:1596px;top:892px" width="12" height="12"><path d="M0,0 H12 L0,12 Z" fill="#3a8428"/></svg><div class="t" style="left:1727.4px;top:896.6px;font-size:21.5px;line-height:21.5px;color:#000;font-weight:normal;letter-spacing:0.05px;font-family:'Liberation Sans', sans-serif;">1</div><svg class="s" style="left:1724px;top:892px" width="12" height="12"><path d="M0,0 H12 L0,12 Z" fill="#3a8428"/></svg><div class="t" style="left:1843.3px;top:896.6px;font-size:20.3px;line-height:20.3px;color:#000;font-weight:normal;letter-spacing:0px;font-family:'Liberation Sans', sans-serif;">NO</div><div class="t" style="left:-0.5px;width:44px;text-align:center;top:896.6px;font-size:21.5px;line-height:21.5px;color:#ffffff;font-weight:normal;letter-spacing:0px;">18</div><div class="t" style="left:49.4px;top:926.6px;font-size:21.5px;line-height:21.5px;color:#000;font-weight:normal;letter-spacing:0.05px;font-family:'Liberation Sans', sans-serif;">1729399936697994399</div><svg class="s" style="left:46px;top:922px" width="12" height="12"><path d="M0,0 H12 L0,12 Z" fill="#3a8428"/></svg><div class="t" style="left:654.2px;top:926.6px;font-size:21.5px;line-height:21.5px;color:#000;font-weight:normal;letter-spacing:0.3px;font-family:'Liberation Sans', sans-serif;">£2.00</div><div class="t" style="left:797.2px;top:926.6px;font-size:21.5px;line-height:21.5px;color:#000;font-weight:normal;letter-spacing:0.05px;font-family:'Liberation Sans', sans-serif;">1110</div><svg class="s" style="left:794px;top:922px" width="12" height="12"><path d="M0,0 H12 L0,12 Z" fill="#3a8428"/></svg><div class="t" style="left:905.2px;top:926.6px;font-size:20.3px;line-height:20.3px;color:#000;font-weight:normal;letter-spacing:0px;font-family:'Liberation Sans', sans-serif;">Unavailable</div><div class="t" style="left:1049.9px;top:926.6px;font-size:20.3px;line-height:20.3px;color:#000;font-weight:normal;letter-spacing:0px;font-family:'Liberation Sans', sans-serif;transform:scaleX(0.76);transform-origin:0 0;-webkit-text-stroke:0.35px #000">YES</div><div class="t" style="left:1203.1px;top:926.6px;font-size:21.5px;line-height:21.5px;color:#000;font-weight:normal;letter-spacing:0.05px;font-family:'Liberation Sans', sans-serif;">1100</div><svg class="s" style="left:1200px;top:922px" width="12" height="12"><path d="M0,0 H12 L0,12 Z" fill="#3a8428"/></svg><div class="t" style="left:1332.1px;top:926.6px;font-size:21.5px;line-height:21.5px;color:#000;font-weight:normal;letter-spacing:0.3px;font-family:'Liberation Sans', sans-serif;">£0.22</div><div class="t" style="left:1463.8px;top:926.6px;font-size:20.3px;line-height:20.3px;color:#000;font-weight:normal;letter-spacing:0px;font-family:'Liberation Sans', sans-serif;transform:scaleX(0.76);transform-origin:0 0;-webkit-text-stroke:0.35px #000">YES</div><div class="t" style="left:1599.4px;top:926.6px;font-size:21.5px;line-height:21.5px;color:#000;font-weight:normal;letter-spacing:0.05px;font-family:'Liberation Sans', sans-serif;">1</div><svg class="s" style="left:1596px;top:922px" width="12" height="12"><path d="M0,0 H12 L0,12 Z" fill="#3a8428"/></svg><div class="t" style="left:1727.4px;top:926.6px;font-size:21.5px;line-height:21.5px;color:#000;font-weight:normal;letter-spacing:0.05px;font-family:'Liberation Sans', sans-serif;">0</div><svg class="s" style="left:1724px;top:922px" width="12" height="12"><path d="M0,0 H12 L0,12 Z" fill="#3a8428"/></svg><div class="t" style="left:1843.3px;top:926.6px;font-size:20.3px;line-height:20.3px;color:#000;font-weight:normal;letter-spacing:0px;font-family:'Liberation Sans', sans-serif;">NO</div><div class="t" style="left:-0.5px;width:44px;text-align:center;top:926.6px;font-size:21.5px;line-height:21.5px;color:#ffffff;font-weight:normal;letter-spacing:0px;">19</div><div class="t" style="left:49.4px;top:956.6px;font-size:21.5px;line-height:21.5px;color:#000;font-weight:normal;letter-spacing:0.05px;font-family:'Liberation Sans', sans-serif;">1729399976584449183</div><svg class="s" style="left:46px;top:952px" width="12" height="12"><path d="M0,0 H12 L0,12 Z" fill="#3a8428"/></svg><div class="t" style="left:654.2px;top:956.6px;font-size:21.5px;line-height:21.5px;color:#000;font-weight:normal;letter-spacing:0.3px;font-family:'Liberation Sans', sans-serif;">£12.00</div><div class="t" style="left:797.2px;top:956.6px;font-size:21.5px;line-height:21.5px;color:#000;font-weight:normal;letter-spacing:0.05px;font-family:'Liberation Sans', sans-serif;">211</div><svg class="s" style="left:794px;top:952px" width="12" height="12"><path d="M0,0 H12 L0,12 Z" fill="#3a8428"/></svg><div class="t" style="left:905.2px;top:956.6px;font-size:20.3px;line-height:20.3px;color:#000;font-weight:normal;letter-spacing:0px;font-family:'Liberation Sans', sans-serif;">Unavailable</div><div class="t" style="left:1049.9px;top:956.6px;font-size:20.3px;line-height:20.3px;color:#000;font-weight:normal;letter-spacing:0px;font-family:'Liberation Sans', sans-serif;transform:scaleX(0.76);transform-origin:0 0;-webkit-text-stroke:0.35px #000">YES</div><div class="t" style="left:1203.1px;top:956.6px;font-size:21.5px;line-height:21.5px;color:#000;font-weight:normal;letter-spacing:0.05px;font-family:'Liberation Sans', sans-serif;">1500</div><svg class="s" style="left:1200px;top:952px" width="12" height="12"><path d="M0,0 H12 L0,12 Z" fill="#3a8428"/></svg><div class="t" style="left:1332.1px;top:956.6px;font-size:21.5px;line-height:21.5px;color:#000;font-weight:normal;letter-spacing:0.3px;font-family:'Liberation Sans', sans-serif;">£1.80</div><div class="t" style="left:1463.8px;top:956.6px;font-size:20.3px;line-height:20.3px;color:#000;font-weight:normal;letter-spacing:0px;font-family:'Liberation Sans', sans-serif;">NO</div><div class="t" style="left:1599.4px;top:956.6px;font-size:21.5px;line-height:21.5px;color:#000;font-weight:normal;letter-spacing:0.05px;font-family:'Liberation Sans', sans-serif;">8</div><svg class="s" style="left:1596px;top:952px" width="12" height="12"><path d="M0,0 H12 L0,12 Z" fill="#3a8428"/></svg><div class="t" style="left:1727.4px;top:956.6px;font-size:21.5px;line-height:21.5px;color:#000;font-weight:normal;letter-spacing:0.05px;font-family:'Liberation Sans', sans-serif;">1</div><svg class="s" style="left:1724px;top:952px" width="12" height="12"><path d="M0,0 H12 L0,12 Z" fill="#3a8428"/></svg><div class="t" style="left:1843.3px;top:956.6px;font-size:20.3px;line-height:20.3px;color:#000;font-weight:normal;letter-spacing:0px;font-family:'Liberation Sans', sans-serif;">NO</div><div class="t" style="left:-0.5px;width:44px;text-align:center;top:956.6px;font-size:21.5px;line-height:21.5px;color:#ffffff;font-weight:normal;letter-spacing:0px;">20</div><div class="t" style="left:49.4px;top:986.6px;font-size:21.5px;line-height:21.5px;color:#000;font-weight:normal;letter-spacing:0.05px;font-family:'Liberation Sans', sans-serif;">1729400010331753631</div><svg class="s" style="left:46px;top:982px" width="12" height="12"><path d="M0,0 H12 L0,12 Z" fill="#3a8428"/></svg><div class="t" style="left:654.2px;top:986.6px;font-size:21.5px;line-height:21.5px;color:#000;font-weight:normal;letter-spacing:0.3px;font-family:'Liberation Sans', sans-serif;">£9.14</div><div class="t" style="left:797.2px;top:986.6px;font-size:21.5px;line-height:21.5px;color:#000;font-weight:normal;letter-spacing:0.05px;font-family:'Liberation Sans', sans-serif;">99999</div><svg class="s" style="left:794px;top:982px" width="12" height="12"><path d="M0,0 H12 L0,12 Z" fill="#3a8428"/></svg><div class="t" style="left:905.2px;top:986.6px;font-size:20.3px;line-height:20.3px;color:#000;font-weight:normal;letter-spacing:0px;font-family:'Liberation Sans', sans-serif;">Unavailable</div><div class="t" style="left:1049.9px;top:986.6px;font-size:20.3px;line-height:20.3px;color:#000;font-weight:normal;letter-spacing:0px;font-family:'Liberation Sans', sans-serif;">NO</div><div class="t" style="left:1463.8px;top:986.6px;font-size:20.3px;line-height:20.3px;color:#000;font-weight:normal;letter-spacing:0px;font-family:'Liberation Sans', sans-serif;">NO</div><div class="t" style="left:1843.3px;top:986.6px;font-size:20.3px;line-height:20.3px;color:#000;font-weight:normal;letter-spacing:0px;font-family:'Liberation Sans', sans-serif;">NO</div><div class="t" style="left:-0.5px;width:44px;text-align:center;top:986.6px;font-size:21.5px;line-height:21.5px;color:#ffffff;font-weight:normal;letter-spacing:0px;">21</div><div class="t" style="left:49.4px;top:1016.6px;font-size:21.5px;line-height:21.5px;color:#000;font-weight:normal;letter-spacing:0.05px;font-family:'Liberation Sans', sans-serif;">1729400010341584031</div><svg class="s" style="left:46px;top:1012px" width="12" height="12"><path d="M0,0 H12 L0,12 Z" fill="#3a8428"/></svg><div class="t" style="left:654.2px;top:1016.6px;font-size:21.5px;line-height:21.5px;color:#000;font-weight:normal;letter-spacing:0.3px;font-family:'Liberation Sans', sans-serif;">£9.14</div><div class="t" style="left:797.2px;top:1016.6px;font-size:21.5px;line-height:21.5px;color:#000;font-weight:normal;letter-spacing:0.05px;font-family:'Liberation Sans', sans-serif;">99999</div><svg class="s" style="left:794px;top:1012px" width="12" height="12"><path d="M0,0 H12 L0,12 Z" fill="#3a8428"/></svg><div class="t" style="left:905.2px;top:1016.6px;font-size:20.3px;line-height:20.3px;color:#000;font-weight:normal;letter-spacing:0px;font-family:'Liberation Sans', sans-serif;">Unavailable</div><div class="t" style="left:1049.9px;top:1016.6px;font-size:20.3px;line-height:20.3px;color:#000;font-weight:normal;letter-spacing:0px;font-family:'Liberation Sans', sans-serif;transform:scaleX(0.76);transform-origin:0 0;-webkit-text-stroke:0.35px #000">YES</div><div class="t" style="left:1463.8px;top:1016.6px;font-size:20.3px;line-height:20.3px;color:#000;font-weight:normal;letter-spacing:0px;font-family:'Liberation Sans', sans-serif;">NO</div><div class="t" style="left:1843.3px;top:1016.6px;font-size:20.3px;line-height:20.3px;color:#000;font-weight:normal;letter-spacing:0px;font-family:'Liberation Sans', sans-serif;">NO</div><div class="t" style="left:-0.5px;width:44px;text-align:center;top:1016.6px;font-size:21.5px;line-height:21.5px;color:#ffffff;font-weight:normal;letter-spacing:0px;">22</div><div class="t" style="left:49.4px;top:1046.6px;font-size:21.5px;line-height:21.5px;color:#000;font-weight:normal;letter-spacing:0.05px;font-family:'Liberation Sans', sans-serif;">1729400011758144671</div><svg class="s" style="left:46px;top:1042px" width="12" height="12"><path d="M0,0 H12 L0,12 Z" fill="#3a8428"/></svg><div class="t" style="left:654.2px;top:1046.6px;font-size:21.5px;line-height:21.5px;color:#000;font-weight:normal;letter-spacing:0.3px;font-family:'Liberation Sans', sans-serif;">£9.14</div><div class="t" style="left:797.2px;top:1046.6px;font-size:21.5px;line-height:21.5px;color:#000;font-weight:normal;letter-spacing:0.05px;font-family:'Liberation Sans', sans-serif;">99999</div><svg class="s" style="left:794px;top:1042px" width="12" height="12"><path d="M0,0 H12 L0,12 Z" fill="#3a8428"/></svg><div class="t" style="left:905.2px;top:1046.6px;font-size:20.3px;line-height:20.3px;color:#000;font-weight:normal;letter-spacing:0px;font-family:'Liberation Sans', sans-serif;">Unavailable</div><div class="t" style="left:1049.9px;top:1046.6px;font-size:20.3px;line-height:20.3px;color:#000;font-weight:normal;letter-spacing:0px;font-family:'Liberation Sans', sans-serif;">NO</div><div class="t" style="left:1463.8px;top:1046.6px;font-size:20.3px;line-height:20.3px;color:#000;font-weight:normal;letter-spacing:0px;font-family:'Liberation Sans', sans-serif;">NO</div><div class="t" style="left:1843.3px;top:1046.6px;font-size:20.3px;line-height:20.3px;color:#000;font-weight:normal;letter-spacing:0px;font-family:'Liberation Sans', sans-serif;">NO</div><div class="t" style="left:-0.5px;width:44px;text-align:center;top:1046.6px;font-size:21.5px;line-height:21.5px;color:#ffffff;font-weight:normal;letter-spacing:0px;">23</div><div class="t" style="left:49.4px;top:1076.6px;font-size:21.5px;line-height:21.5px;color:#000;font-weight:normal;letter-spacing:0.05px;font-family:'Liberation Sans', sans-serif;">1729400055500737695</div><svg class="s" style="left:46px;top:1072px" width="12" height="12"><path d="M0,0 H12 L0,12 Z" fill="#3a8428"/></svg><div class="t" style="left:654.2px;top:1076.6px;font-size:21.5px;line-height:21.5px;color:#000;font-weight:normal;letter-spacing:0.3px;font-family:'Liberation Sans', sans-serif;">£549.31</div><div class="t" style="left:797.2px;top:1076.6px;font-size:21.5px;line-height:21.5px;color:#000;font-weight:normal;letter-spacing:0.05px;font-family:'Liberation Sans', sans-serif;">2229</div><svg class="s" style="left:794px;top:1072px" width="12" height="12"><path d="M0,0 H12 L0,12 Z" fill="#3a8428"/></svg><div class="t" style="left:905.2px;top:1076.6px;font-size:20.3px;line-height:20.3px;color:#000;font-weight:normal;letter-spacing:0px;font-family:'Liberation Sans', sans-serif;">Unavailable</div><div class="t" style="left:1049.9px;top:1076.6px;font-size:20.3px;line-height:20.3px;color:#000;font-weight:normal;letter-spacing:0px;font-family:'Liberation Sans', sans-serif;transform:scaleX(0.76);transform-origin:0 0;-webkit-text-stroke:0.35px #000">YES</div><div class="t" style="left:1203.1px;top:1076.6px;font-size:21.5px;line-height:21.5px;color:#000;font-weight:normal;letter-spacing:0.05px;font-family:'Liberation Sans', sans-serif;">1100</div><svg class="s" style="left:1200px;top:1072px" width="12" height="12"><path d="M0,0 H12 L0,12 Z" fill="#3a8428"/></svg><div class="t" style="left:1332.1px;top:1076.6px;font-size:21.5px;line-height:21.5px;color:#000;font-weight:normal;letter-spacing:0.3px;font-family:'Liberation Sans', sans-serif;">£60.42</div><div class="t" style="left:1463.8px;top:1076.6px;font-size:20.3px;line-height:20.3px;color:#000;font-weight:normal;letter-spacing:0px;font-family:'Liberation Sans', sans-serif;">NO</div><div class="t" style="left:1599.4px;top:1076.6px;font-size:21.5px;line-height:21.5px;color:#000;font-weight:normal;letter-spacing:0.05px;font-family:'Liberation Sans', sans-serif;">2</div><svg class="s" style="left:1596px;top:1072px" width="12" height="12"><path d="M0,0 H12 L0,12 Z" fill="#3a8428"/></svg><div class="t" style="left:1727.4px;top:1076.6px;font-size:21.5px;line-height:21.5px;color:#000;font-weight:normal;letter-spacing:0.05px;font-family:'Liberation Sans', sans-serif;">0</div><svg class="s" style="left:1724px;top:1072px" width="12" height="12"><path d="M0,0 H12 L0,12 Z" fill="#3a8428"/></svg><div class="t" style="left:1843.3px;top:1076.6px;font-size:20.3px;line-height:20.3px;color:#000;font-weight:normal;letter-spacing:0px;font-family:'Liberation Sans', sans-serif;">NO</div><div class="t" style="left:-0.5px;width:44px;text-align:center;top:1076.6px;font-size:21.5px;line-height:21.5px;color:#ffffff;font-weight:normal;letter-spacing:0px;">24</div><div class="t" style="left:49.4px;top:1106.6px;font-size:21.5px;line-height:21.5px;color:#000;font-weight:normal;letter-spacing:0.05px;font-family:'Liberation Sans', sans-serif;">1729400060882095263</div><svg class="s" style="left:46px;top:1102px" width="12" height="12"><path d="M0,0 H12 L0,12 Z" fill="#3a8428"/></svg><div class="t" style="left:654.2px;top:1106.6px;font-size:21.5px;line-height:21.5px;color:#000;font-weight:normal;letter-spacing:0.3px;font-family:'Liberation Sans', sans-serif;">£549.31</div><div class="t" style="left:797.2px;top:1106.6px;font-size:21.5px;line-height:21.5px;color:#000;font-weight:normal;letter-spacing:0.05px;font-family:'Liberation Sans', sans-serif;">2432</div><svg class="s" style="left:794px;top:1102px" width="12" height="12"><path d="M0,0 H12 L0,12 Z" fill="#3a8428"/></svg><div class="t" style="left:905.2px;top:1106.6px;font-size:20.3px;line-height:20.3px;color:#000;font-weight:normal;letter-spacing:0px;font-family:'Liberation Sans', sans-serif;">Unavailable</div><div class="t" style="left:1049.9px;top:1106.6px;font-size:20.3px;line-height:20.3px;color:#000;font-weight:normal;letter-spacing:0px;font-family:'Liberation Sans', sans-serif;transform:scaleX(0.76);transform-origin:0 0;-webkit-text-stroke:0.35px #000">YES</div><div class="t" style="left:1203.1px;top:1106.6px;font-size:21.5px;line-height:21.5px;color:#000;font-weight:normal;letter-spacing:0.05px;font-family:'Liberation Sans', sans-serif;">1100</div><svg class="s" style="left:1200px;top:1102px" width="12" height="12"><path d="M0,0 H12 L0,12 Z" fill="#3a8428"/></svg><div class="t" style="left:1332.1px;top:1106.6px;font-size:21.5px;line-height:21.5px;color:#000;font-weight:normal;letter-spacing:0.3px;font-family:'Liberation Sans', sans-serif;">£60.42</div><div class="t" style="left:1463.8px;top:1106.6px;font-size:20.3px;line-height:20.3px;color:#000;font-weight:normal;letter-spacing:0px;font-family:'Liberation Sans', sans-serif;">NO</div><div class="t" style="left:1599.4px;top:1106.6px;font-size:21.5px;line-height:21.5px;color:#000;font-weight:normal;letter-spacing:0.05px;font-family:'Liberation Sans', sans-serif;">2</div><svg class="s" style="left:1596px;top:1102px" width="12" height="12"><path d="M0,0 H12 L0,12 Z" fill="#3a8428"/></svg><div class="t" style="left:1727.4px;top:1106.6px;font-size:21.5px;line-height:21.5px;color:#000;font-weight:normal;letter-spacing:0.05px;font-family:'Liberation Sans', sans-serif;">0</div><svg class="s" style="left:1724px;top:1102px" width="12" height="12"><path d="M0,0 H12 L0,12 Z" fill="#3a8428"/></svg><div class="t" style="left:1843.3px;top:1106.6px;font-size:20.3px;line-height:20.3px;color:#000;font-weight:normal;letter-spacing:0px;font-family:'Liberation Sans', sans-serif;">NO</div><div class="t" style="left:-0.5px;width:44px;text-align:center;top:1106.6px;font-size:21.5px;line-height:21.5px;color:#ffffff;font-weight:normal;letter-spacing:0px;">25</div><div class="t" style="left:49.4px;top:1136.6px;font-size:21.5px;line-height:21.5px;color:#000;font-weight:normal;letter-spacing:0.05px;font-family:'Liberation Sans', sans-serif;">1729400098482392223</div><svg class="s" style="left:46px;top:1132px" width="12" height="12"><path d="M0,0 H12 L0,12 Z" fill="#3a8428"/></svg><div class="t" style="left:654.2px;top:1136.6px;font-size:21.5px;line-height:21.5px;color:#000;font-weight:normal;letter-spacing:0.3px;font-family:'Liberation Sans', sans-serif;">£162.00</div><div class="t" style="left:797.2px;top:1136.6px;font-size:21.5px;line-height:21.5px;color:#000;font-weight:normal;letter-spacing:0.05px;font-family:'Liberation Sans', sans-serif;">3599964</div><svg class="s" style="left:794px;top:1132px" width="12" height="12"><path d="M0,0 H12 L0,12 Z" fill="#3a8428"/></svg><div class="t" style="left:905.2px;top:1136.6px;font-size:20.3px;line-height:20.3px;color:#000;font-weight:normal;letter-spacing:0px;font-family:'Liberation Sans', sans-serif;">Available</div><div class="t" style="left:1049.9px;top:1136.6px;font-size:20.3px;line-height:20.3px;color:#000;font-weight:normal;letter-spacing:0px;font-family:'Liberation Sans', sans-serif;transform:scaleX(0.76);transform-origin:0 0;-webkit-text-stroke:0.35px #000">YES</div><div class="t" style="left:1203.1px;top:1136.6px;font-size:21.5px;line-height:21.5px;color:#000;font-weight:normal;letter-spacing:0.05px;font-family:'Liberation Sans', sans-serif;">1100</div><svg class="s" style="left:1200px;top:1132px" width="12" height="12"><path d="M0,0 H12 L0,12 Z" fill="#3a8428"/></svg><div class="t" style="left:1332.1px;top:1136.6px;font-size:21.5px;line-height:21.5px;color:#000;font-weight:normal;letter-spacing:0.3px;font-family:'Liberation Sans', sans-serif;">£17.82</div><div class="t" style="left:1463.8px;top:1136.6px;font-size:20.3px;line-height:20.3px;color:#000;font-weight:normal;letter-spacing:0px;font-family:'Liberation Sans', sans-serif;">NO</div><div class="t" style="left:1599.4px;top:1136.6px;font-size:21.5px;line-height:21.5px;color:#000;font-weight:normal;letter-spacing:0.05px;font-family:'Liberation Sans', sans-serif;">2</div><svg class="s" style="left:1596px;top:1132px" width="12" height="12"><path d="M0,0 H12 L0,12 Z" fill="#3a8428"/></svg><div class="t" style="left:1727.4px;top:1136.6px;font-size:21.5px;line-height:21.5px;color:#000;font-weight:normal;letter-spacing:0.05px;font-family:'Liberation Sans', sans-serif;">0</div><svg class="s" style="left:1724px;top:1132px" width="12" height="12"><path d="M0,0 H12 L0,12 Z" fill="#3a8428"/></svg><div class="t" style="left:1843.3px;top:1136.6px;font-size:20.3px;line-height:20.3px;color:#000;font-weight:normal;letter-spacing:0px;font-family:'Liberation Sans', sans-serif;">NO</div><div class="t" style="left:-0.5px;width:44px;text-align:center;top:1136.6px;font-size:21.5px;line-height:21.5px;color:#ffffff;font-weight:normal;letter-spacing:0px;">26</div><div class="t" style="left:49.4px;top:1166.6px;font-size:21.5px;line-height:21.5px;color:#000;font-weight:normal;letter-spacing:0.05px;font-family:'Liberation Sans', sans-serif;">1729400551767510175</div><svg class="s" style="left:46px;top:1162px" width="12" height="12"><path d="M0,0 H12 L0,12 Z" fill="#3a8428"/></svg><div class="t" style="left:654.2px;top:1166.6px;font-size:21.5px;line-height:21.5px;color:#000;font-weight:normal;letter-spacing:0.3px;font-family:'Liberation Sans', sans-serif;">£29.17</div><div class="t" style="left:797.2px;top:1166.6px;font-size:21.5px;line-height:21.5px;color:#000;font-weight:normal;letter-spacing:0.05px;font-family:'Liberation Sans', sans-serif;">199998</div><svg class="s" style="left:794px;top:1162px" width="12" height="12"><path d="M0,0 H12 L0,12 Z" fill="#3a8428"/></svg><div class="t" style="left:905.2px;top:1166.6px;font-size:20.3px;line-height:20.3px;color:#000;font-weight:normal;letter-spacing:0px;font-family:'Liberation Sans', sans-serif;">Unavailable</div><div class="t" style="left:1049.9px;top:1166.6px;font-size:20.3px;line-height:20.3px;color:#000;font-weight:normal;letter-spacing:0px;font-family:'Liberation Sans', sans-serif;">NO</div><div class="t" style="left:1463.8px;top:1166.6px;font-size:20.3px;line-height:20.3px;color:#000;font-weight:normal;letter-spacing:0px;font-family:'Liberation Sans', sans-serif;">NO</div><div class="t" style="left:1843.3px;top:1166.6px;font-size:20.3px;line-height:20.3px;color:#000;font-weight:normal;letter-spacing:0px;font-family:'Liberation Sans', sans-serif;">NO</div><div class="t" style="left:-0.5px;width:44px;text-align:center;top:1166.6px;font-size:21.5px;line-height:21.5px;color:#ffffff;font-weight:normal;letter-spacing:0px;">27</div><div class="t" style="left:49.4px;top:1196.6px;font-size:21.5px;line-height:21.5px;color:#000;font-weight:normal;letter-spacing:0.05px;font-family:'Liberation Sans', sans-serif;">1729400611059305631</div><svg class="s" style="left:46px;top:1192px" width="12" height="12"><path d="M0,0 H12 L0,12 Z" fill="#3a8428"/></svg><div class="t" style="left:654.2px;top:1196.6px;font-size:21.5px;line-height:21.5px;color:#000;font-weight:normal;letter-spacing:0.3px;font-family:'Liberation Sans', sans-serif;">£150.00</div><div class="t" style="left:797.2px;top:1196.6px;font-size:21.5px;line-height:21.5px;color:#000;font-weight:normal;letter-spacing:0.05px;font-family:'Liberation Sans', sans-serif;">299997</div><svg class="s" style="left:794px;top:1192px" width="12" height="12"><path d="M0,0 H12 L0,12 Z" fill="#3a8428"/></svg><div class="t" style="left:905.2px;top:1196.6px;font-size:20.3px;line-height:20.3px;color:#000;font-weight:normal;letter-spacing:0px;font-family:'Liberation Sans', sans-serif;">Unavailable</div><div class="t" style="left:1049.9px;top:1196.6px;font-size:20.3px;line-height:20.3px;color:#000;font-weight:normal;letter-spacing:0px;font-family:'Liberation Sans', sans-serif;">NO</div><div class="t" style="left:1463.8px;top:1196.6px;font-size:20.3px;line-height:20.3px;color:#000;font-weight:normal;letter-spacing:0px;font-family:'Liberation Sans', sans-serif;">NO</div><div class="t" style="left:1843.3px;top:1196.6px;font-size:20.3px;line-height:20.3px;color:#000;font-weight:normal;letter-spacing:0px;font-family:'Liberation Sans', sans-serif;">NO</div><div class="t" style="left:-0.5px;width:44px;text-align:center;top:1196.6px;font-size:21.5px;line-height:21.5px;color:#ffffff;font-weight:normal;letter-spacing:0px;">28</div><div class="t" style="left:49.4px;top:1226.6px;font-size:21.5px;line-height:21.5px;color:#000;font-weight:normal;letter-spacing:0.05px;font-family:'Liberation Sans', sans-serif;">1729400616976288927</div><svg class="s" style="left:46px;top:1222px" width="12" height="12"><path d="M0,0 H12 L0,12 Z" fill="#3a8428"/></svg><div class="t" style="left:654.2px;top:1226.6px;font-size:21.5px;line-height:21.5px;color:#000;font-weight:normal;letter-spacing:0.3px;font-family:'Liberation Sans', sans-serif;">£28.65</div><div class="t" style="left:797.2px;top:1226.6px;font-size:21.5px;line-height:21.5px;color:#000;font-weight:normal;letter-spacing:0.05px;font-family:'Liberation Sans', sans-serif;">299997</div><svg class="s" style="left:794px;top:1222px" width="12" height="12"><path d="M0,0 H12 L0,12 Z" fill="#3a8428"/></svg><div class="t" style="left:905.2px;top:1226.6px;font-size:20.3px;line-height:20.3px;color:#000;font-weight:normal;letter-spacing:0px;font-family:'Liberation Sans', sans-serif;">Unavailable</div><div class="t" style="left:1049.9px;top:1226.6px;font-size:20.3px;line-height:20.3px;color:#000;font-weight:normal;letter-spacing:0px;font-family:'Liberation Sans', sans-serif;">NO</div><div class="t" style="left:1463.8px;top:1226.6px;font-size:20.3px;line-height:20.3px;color:#000;font-weight:normal;letter-spacing:0px;font-family:'Liberation Sans', sans-serif;">NO</div><div class="t" style="left:1843.3px;top:1226.6px;font-size:20.3px;line-height:20.3px;color:#000;font-weight:normal;letter-spacing:0px;font-family:'Liberation Sans', sans-serif;">NO</div><div class="t" style="left:-0.5px;width:44px;text-align:center;top:1226.6px;font-size:21.5px;line-height:21.5px;color:#ffffff;font-weight:normal;letter-spacing:0px;">29</div><div class="t" style="left:49.4px;top:1256.6px;font-size:21.5px;line-height:21.5px;color:#000;font-weight:normal;letter-spacing:0.05px;font-family:'Liberation Sans', sans-serif;">1729400617188953247</div><svg class="s" style="left:46px;top:1252px" width="12" height="12"><path d="M0,0 H12 L0,12 Z" fill="#3a8428"/></svg><div class="t" style="left:654.2px;top:1256.6px;font-size:21.5px;line-height:21.5px;color:#000;font-weight:normal;letter-spacing:0.3px;font-family:'Liberation Sans', sans-serif;">£28.65</div><div class="t" style="left:797.2px;top:1256.6px;font-size:21.5px;line-height:21.5px;color:#000;font-weight:normal;letter-spacing:0.05px;font-family:'Liberation Sans', sans-serif;">99999</div><svg class="s" style="left:794px;top:1252px" width="12" height="12"><path d="M0,0 H12 L0,12 Z" fill="#3a8428"/></svg><div class="t" style="left:905.2px;top:1256.6px;font-size:20.3px;line-height:20.3px;color:#000;font-weight:normal;letter-spacing:0px;font-family:'Liberation Sans', sans-serif;">Unavailable</div><div class="t" style="left:1049.9px;top:1256.6px;font-size:20.3px;line-height:20.3px;color:#000;font-weight:normal;letter-spacing:0px;font-family:'Liberation Sans', sans-serif;">NO</div><div class="t" style="left:1463.8px;top:1256.6px;font-size:20.3px;line-height:20.3px;color:#000;font-weight:normal;letter-spacing:0px;font-family:'Liberation Sans', sans-serif;">NO</div><div class="t" style="left:1843.3px;top:1256.6px;font-size:20.3px;line-height:20.3px;color:#000;font-weight:normal;letter-spacing:0px;font-family:'Liberation Sans', sans-serif;">NO</div><div class="t" style="left:-0.5px;width:44px;text-align:center;top:1256.6px;font-size:21.5px;line-height:21.5px;color:#ffffff;font-weight:normal;letter-spacing:0px;">30</div><div class="t" style="left:49.4px;top:1286.6px;font-size:21.5px;line-height:21.5px;color:#000;font-weight:normal;letter-spacing:0.05px;font-family:'Liberation Sans', sans-serif;">1729400639604690079</div><svg class="s" style="left:46px;top:1282px" width="12" height="12"><path d="M0,0 H12 L0,12 Z" fill="#3a8428"/></svg><div class="t" style="left:654.2px;top:1286.6px;font-size:21.5px;line-height:21.5px;color:#000;font-weight:normal;letter-spacing:0.3px;font-family:'Liberation Sans', sans-serif;">£28.65</div><div class="t" style="left:797.2px;top:1286.6px;font-size:21.5px;line-height:21.5px;color:#000;font-weight:normal;letter-spacing:0.05px;font-family:'Liberation Sans', sans-serif;">198</div><svg class="s" style="left:794px;top:1282px" width="12" height="12"><path d="M0,0 H12 L0,12 Z" fill="#3a8428"/></svg><div class="t" style="left:905.2px;top:1286.6px;font-size:20.3px;line-height:20.3px;color:#000;font-weight:normal;letter-spacing:0px;font-family:'Liberation Sans', sans-serif;">Unavailable</div><div class="t" style="left:1049.9px;top:1286.6px;font-size:20.3px;line-height:20.3px;color:#000;font-weight:normal;letter-spacing:0px;font-family:'Liberation Sans', sans-serif;transform:scaleX(0.76);transform-origin:0 0;-webkit-text-stroke:0.35px #000">YES</div><div class="t" style="left:1203.1px;top:1286.6px;font-size:21.5px;line-height:21.5px;color:#000;font-weight:normal;letter-spacing:0.05px;font-family:'Liberation Sans', sans-serif;">1000</div><svg class="s" style="left:1200px;top:1282px" width="12" height="12"><path d="M0,0 H12 L0,12 Z" fill="#3a8428"/></svg><div class="t" style="left:1332.1px;top:1286.6px;font-size:21.5px;line-height:21.5px;color:#000;font-weight:normal;letter-spacing:0.3px;font-family:'Liberation Sans', sans-serif;">£2.87</div><div class="t" style="left:1463.8px;top:1286.6px;font-size:20.3px;line-height:20.3px;color:#000;font-weight:normal;letter-spacing:0px;font-family:'Liberation Sans', sans-serif;">NO</div><div class="t" style="left:1599.4px;top:1286.6px;font-size:21.5px;line-height:21.5px;color:#000;font-weight:normal;letter-spacing:0.05px;font-family:'Liberation Sans', sans-serif;">3</div><svg class="s" style="left:1596px;top:1282px" width="12" height="12"><path d="M0,0 H12 L0,12 Z" fill="#3a8428"/></svg><div class="t" style="left:1727.4px;top:1286.6px;font-size:21.5px;line-height:21.5px;color:#000;font-weight:normal;letter-spacing:0.05px;font-family:'Liberation Sans', sans-serif;">0</div><svg class="s" style="left:1724px;top:1282px" width="12" height="12"><path d="M0,0 H12 L0,12 Z" fill="#3a8428"/></svg><div class="t" style="left:1843.3px;top:1286.6px;font-size:20.3px;line-height:20.3px;color:#000;font-weight:normal;letter-spacing:0px;font-family:'Liberation Sans', sans-serif;">NO</div><div class="t" style="left:-0.5px;width:44px;text-align:center;top:1286.6px;font-size:21.5px;line-height:21.5px;color:#ffffff;font-weight:normal;letter-spacing:0px;">31</div><div class="t" style="left:49.4px;top:1316.6px;font-size:21.5px;line-height:21.5px;color:#000;font-weight:normal;letter-spacing:0.05px;font-family:'Liberation Sans', sans-serif;">1729400639607114911</div><svg class="s" style="left:46px;top:1312px" width="12" height="12"><path d="M0,0 H12 L0,12 Z" fill="#3a8428"/></svg><div class="t" style="left:654.2px;top:1316.6px;font-size:21.5px;line-height:21.5px;color:#000;font-weight:normal;letter-spacing:0.3px;font-family:'Liberation Sans', sans-serif;">£28.65</div><div class="t" style="left:797.2px;top:1316.6px;font-size:21.5px;line-height:21.5px;color:#000;font-weight:normal;letter-spacing:0.05px;font-family:'Liberation Sans', sans-serif;">99999</div><svg class="s" style="left:794px;top:1312px" width="12" height="12"><path d="M0,0 H12 L0,12 Z" fill="#3a8428"/></svg><div class="t" style="left:905.2px;top:1316.6px;font-size:20.3px;line-height:20.3px;color:#000;font-weight:normal;letter-spacing:0px;font-family:'Liberation Sans', sans-serif;">Unavailable</div><div class="t" style="left:1049.9px;top:1316.6px;font-size:20.3px;line-height:20.3px;color:#000;font-weight:normal;letter-spacing:0px;font-family:'Liberation Sans', sans-serif;">NO</div><div class="t" style="left:1463.8px;top:1316.6px;font-size:20.3px;line-height:20.3px;color:#000;font-weight:normal;letter-spacing:0px;font-family:'Liberation Sans', sans-serif;">NO</div><div class="t" style="left:1843.3px;top:1316.6px;font-size:20.3px;line-height:20.3px;color:#000;font-weight:normal;letter-spacing:0px;font-family:'Liberation Sans', sans-serif;">NO</div><div class="t" style="left:-0.5px;width:44px;text-align:center;top:1316.6px;font-size:21.5px;line-height:21.5px;color:#ffffff;font-weight:normal;letter-spacing:0px;">32</div><div class="t" style="left:49.4px;top:1346.6px;font-size:21.5px;line-height:21.5px;color:#000;font-weight:normal;letter-spacing:0.05px;font-family:'Liberation Sans', sans-serif;">1729400648740605087</div><svg class="s" style="left:46px;top:1342px" width="12" height="12"><path d="M0,0 H12 L0,12 Z" fill="#3a8428"/></svg><div class="t" style="left:654.2px;top:1346.6px;font-size:21.5px;line-height:21.5px;color:#000;font-weight:normal;letter-spacing:0.3px;font-family:'Liberation Sans', sans-serif;">£28.65</div><div class="t" style="left:797.2px;top:1346.6px;font-size:21.5px;line-height:21.5px;color:#000;font-weight:normal;letter-spacing:0.05px;font-family:'Liberation Sans', sans-serif;">199998</div><svg class="s" style="left:794px;top:1342px" width="12" height="12"><path d="M0,0 H12 L0,12 Z" fill="#3a8428"/></svg><div class="t" style="left:905.2px;top:1346.6px;font-size:20.3px;line-height:20.3px;color:#000;font-weight:normal;letter-spacing:0px;font-family:'Liberation Sans', sans-serif;">Unavailable</div><div class="t" style="left:1049.9px;top:1346.6px;font-size:20.3px;line-height:20.3px;color:#000;font-weight:normal;letter-spacing:0px;font-family:'Liberation Sans', sans-serif;">NO</div><div class="t" style="left:1463.8px;top:1346.6px;font-size:20.3px;line-height:20.3px;color:#000;font-weight:normal;letter-spacing:0px;font-family:'Liberation Sans', sans-serif;">NO</div><div class="t" style="left:1843.3px;top:1346.6px;font-size:20.3px;line-height:20.3px;color:#000;font-weight:normal;letter-spacing:0px;font-family:'Liberation Sans', sans-serif;">NO</div><div class="t" style="left:-0.5px;width:44px;text-align:center;top:1346.6px;font-size:21.5px;line-height:21.5px;color:#ffffff;font-weight:normal;letter-spacing:0px;">33</div><div class="t" style="left:49.4px;top:1376.6px;font-size:21.5px;line-height:21.5px;color:#000;font-weight:normal;letter-spacing:0.05px;font-family:'Liberation Sans', sans-serif;">1729400726048967839</div><svg class="s" style="left:46px;top:1372px" width="12" height="12"><path d="M0,0 H12 L0,12 Z" fill="#3a8428"/></svg><div class="t" style="left:654.2px;top:1376.6px;font-size:21.5px;line-height:21.5px;color:#000;font-weight:normal;letter-spacing:0.3px;font-family:'Liberation Sans', sans-serif;">£10.00</div><div class="t" style="left:797.2px;top:1376.6px;font-size:21.5px;line-height:21.5px;color:#000;font-weight:normal;letter-spacing:0.05px;font-family:'Liberation Sans', sans-serif;">1233</div><svg class="s" style="left:794px;top:1372px" width="12" height="12"><path d="M0,0 H12 L0,12 Z" fill="#3a8428"/></svg><div class="t" style="left:905.2px;top:1376.6px;font-size:20.3px;line-height:20.3px;color:#000;font-weight:normal;letter-spacing:0px;font-family:'Liberation Sans', sans-serif;">Unavailable</div><div class="t" style="left:1049.9px;top:1376.6px;font-size:20.3px;line-height:20.3px;color:#000;font-weight:normal;letter-spacing:0px;font-family:'Liberation Sans', sans-serif;transform:scaleX(0.76);transform-origin:0 0;-webkit-text-stroke:0.35px #000">YES</div><div class="t" style="left:1203.1px;top:1376.6px;font-size:21.5px;line-height:21.5px;color:#000;font-weight:normal;letter-spacing:0.05px;font-family:'Liberation Sans', sans-serif;">2000</div><svg class="s" style="left:1200px;top:1372px" width="12" height="12"><path d="M0,0 H12 L0,12 Z" fill="#3a8428"/></svg><div class="t" style="left:1332.1px;top:1376.6px;font-size:21.5px;line-height:21.5px;color:#000;font-weight:normal;letter-spacing:0.3px;font-family:'Liberation Sans', sans-serif;">£2.00</div><div class="t" style="left:1463.8px;top:1376.6px;font-size:20.3px;line-height:20.3px;color:#000;font-weight:normal;letter-spacing:0px;font-family:'Liberation Sans', sans-serif;">NO</div><div class="t" style="left:1599.4px;top:1376.6px;font-size:21.5px;line-height:21.5px;color:#000;font-weight:normal;letter-spacing:0.05px;font-family:'Liberation Sans', sans-serif;">3</div><svg class="s" style="left:1596px;top:1372px" width="12" height="12"><path d="M0,0 H12 L0,12 Z" fill="#3a8428"/></svg><div class="t" style="left:1727.4px;top:1376.6px;font-size:21.5px;line-height:21.5px;color:#000;font-weight:normal;letter-spacing:0.05px;font-family:'Liberation Sans', sans-serif;">0</div><svg class="s" style="left:1724px;top:1372px" width="12" height="12"><path d="M0,0 H12 L0,12 Z" fill="#3a8428"/></svg><div class="t" style="left:1843.3px;top:1376.6px;font-size:20.3px;line-height:20.3px;color:#000;font-weight:normal;letter-spacing:0px;font-family:'Liberation Sans', sans-serif;">NO</div><div class="t" style="left:-0.5px;width:44px;text-align:center;top:1376.6px;font-size:21.5px;line-height:21.5px;color:#ffffff;font-weight:normal;letter-spacing:0px;">34</div><svg class="s" style="left:46px;top:1402px" width="12" height="4"><path d="M0,0 H12 L8,4 H0 Z" fill="#3a8428"/></svg><svg class="s" style="left:794px;top:1402px" width="12" height="4"><path d="M0,0 H12 L8,4 H0 Z" fill="#3a8428"/></svg><svg class="s" style="left:1200px;top:1402px" width="12" height="4"><path d="M0,0 H12 L8,4 H0 Z" fill="#3a8428"/></svg><svg class="s" style="left:1596px;top:1402px" width="12" height="4"><path d="M0,0 H12 L8,4 H0 Z" fill="#3a8428"/></svg><svg class="s" style="left:1724px;top:1402px" width="12" height="4"><path d="M0,0 H12 L8,4 H0 Z" fill="#3a8428"/></svg><div class="t" style="left:1971.7px;top:686.6px;font-size:21.5px;line-height:21.5px;color:#000;font-weight:normal;letter-spacing:0px;font-family:'Liberation Sans', sans-serif;">100</div><svg class="s" style="left:1969px;top:682px" width="12" height="12"><path d="M0,0 H12 L0,12 Z" fill="#3a8428"/></svg><div class="t" style="left:2108.4px;top:686.6px;font-size:21.5px;line-height:21.5px;color:#000;font-weight:normal;letter-spacing:0px;font-family:'Liberation Sans', sans-serif;">0</div><svg class="s" style="left:2106px;top:682px" width="12" height="12"><path d="M0,0 H12 L0,12 Z" fill="#3a8428"/></svg><div class="t" style="left:2140.0px;width:300px;text-align:right;top:686.6px;font-size:21.5px;line-height:21.5px;color:#000;font-weight:normal;letter-spacing:0px">0</div><div class="t" style="left:2448.4px;top:686.6px;font-size:21.5px;line-height:21.5px;color:#000;font-weight:normal;letter-spacing:0px;font-family:'Liberation Sans', sans-serif;">0</div><svg class="s" style="left:2446px;top:682px" width="12" height="12"><path d="M0,0 H12 L0,12 Z" fill="#3a8428"/></svg><div class="t" style="left:2635.1px;top:686.6px;font-size:20.3px;line-height:20.3px;color:#000;font-weight:normal;letter-spacing:0px;font-family:'Liberation Sans', sans-serif;">All</div><div class="t" style="left:49.7px;top:417.0px;font-size:20.3px;line-height:20.3px;color:#000;font-weight:normal;letter-spacing:0.19px;font-family:'Liberation Sans', sans-serif;">Product ID</div><div class="t" style="left:288.5px;top:417.0px;font-size:20.3px;line-height:20.3px;color:#000;font-weight:normal;letter-spacing:0.29px;font-family:'Liberation Sans', sans-serif;">Product name</div><div class="t" style="left:652.5px;top:417.0px;font-size:20.3px;line-height:20.3px;color:#000;font-weight:normal;letter-spacing:0.44px;font-family:'Liberation Sans', sans-serif;">Product price</div><div class="t" style="left:796.5px;top:417.0px;font-size:20.3px;line-height:20.3px;color:#000;font-weight:normal;letter-spacing:-0.06px;font-family:'Liberation Sans', sans-serif;">Stock</div><div class="t" style="left:904.3px;top:388.0px;font-size:20.3px;line-height:20.3px;color:#000;font-weight:normal;letter-spacing:0.44px;font-family:'Liberation Sans', sans-serif;">Products</div><div class="t" style="left:904.3px;top:417.0px;font-size:20.3px;line-height:20.3px;color:#000;font-weight:normal;letter-spacing:0.28px;font-family:'Liberation Sans', sans-serif;">status</div><div class="t" style="left:1049.0px;top:388.0px;font-size:20.3px;line-height:20.3px;color:#000;font-weight:normal;letter-spacing:0.14px;font-family:'Liberation Sans', sans-serif;">Add to open</div><div class="t" style="left:1049.0px;top:417.0px;font-size:20.3px;line-height:20.3px;color:#000;font-weight:normal;letter-spacing:0.71px;font-family:'Liberation Sans', sans-serif;">collaboration?</div><div class="t" style="left:1202.4px;top:388.0px;font-size:20.3px;line-height:20.3px;color:#000;font-weight:normal;letter-spacing:0.1px;font-family:'Liberation Sans', sans-serif;">Commission</div><div class="t" style="left:1202.4px;top:417.0px;font-size:20.3px;line-height:20.3px;color:#000;font-weight:normal;letter-spacing:0.85px;font-family:'Liberation Sans', sans-serif;">rate</div><div class="t" style="left:1330.4px;top:388.0px;font-size:20.3px;line-height:20.3px;color:#000;font-weight:normal;letter-spacing:-1.15px;font-family:'Liberation Sans', sans-serif;">Est.</div><div class="t" style="left:1330.4px;top:417.0px;font-size:20.3px;line-height:20.3px;color:#000;font-weight:normal;letter-spacing:0.27px;font-family:'Liberation Sans', sans-serif;">commission</div><div class="t" style="left:1462.9px;top:388.0px;font-size:20.3px;line-height:20.3px;color:#000;font-weight:normal;letter-spacing:0.28px;font-family:'Liberation Sans', sans-serif;">Approve</div><div class="t" style="left:1462.9px;top:417.0px;font-size:20.3px;line-height:20.3px;color:#000;font-weight:normal;letter-spacing:0.29px;font-family:'Liberation Sans', sans-serif;">creators</div><div class="t" style="left:1598.7px;top:388.0px;font-size:20.3px;line-height:20.3px;color:#000;font-weight:normal;letter-spacing:0.28px;font-family:'Liberation Sans', sans-serif;">Creator</div><div class="t" style="left:1598.7px;top:417.0px;font-size:20.3px;line-height:20.3px;color:#000;font-weight:normal;letter-spacing:-0.31px;font-family:'Liberation Sans', sans-serif;">showcase</div><div class="t" style="left:1726.7px;top:388.0px;font-size:20.3px;line-height:20.3px;color:#000;font-weight:normal;letter-spacing:0.28px;font-family:'Liberation Sans', sans-serif;">Creator</div><div class="t" style="left:1726.7px;top:417.0px;font-size:20.3px;line-height:20.3px;color:#000;font-weight:normal;letter-spacing:0.72px;font-family:'Liberation Sans', sans-serif;">post</div><div class="t" style="left:1842.4px;top:388.0px;font-size:20.3px;line-height:20.3px;color:#000;font-weight:normal;letter-spacing:-0.26px;font-family:'Liberation Sans', sans-serif;">Offer free</div><div class="t" style="left:1842.4px;top:417.0px;font-size:20.3px;line-height:20.3px;color:#000;font-weight:normal;letter-spacing:-0.41px;font-family:'Liberation Sans', sans-serif;">samples</div><div class="t" style="left:1972.0px;top:388.0px;font-size:20.3px;line-height:20.3px;color:#000;font-weight:normal;letter-spacing:-0.26px;font-family:'Liberation Sans', sans-serif;">Sample</div><div class="t" style="left:1972.0px;top:417.0px;font-size:20.3px;line-height:20.3px;color:#000;font-weight:normal;letter-spacing:1.18px;font-family:'Liberation Sans', sans-serif;">quantity</div><div class="t" style="left:2108.7px;top:388.0px;font-size:20.3px;line-height:20.3px;color:#000;font-weight:normal;letter-spacing:1.34px;font-family:'Liberation Sans', sans-serif;">Minimum</div><div class="t" style="left:2108.7px;top:417.0px;font-size:20.3px;line-height:20.3px;color:#000;font-weight:normal;letter-spacing:0.69px;font-family:'Liberation Sans', sans-serif;">follower count</div><div class="t" style="left:2274.1px;top:388.0px;font-size:20.3px;line-height:20.3px;color:#000;font-weight:normal;letter-spacing:0.51px;font-family:'Liberation Sans', sans-serif;">Minimum 30-day</div><div class="t" style="left:2274.1px;top:417.0px;font-size:20.3px;line-height:20.3px;color:#000;font-weight:normal;letter-spacing:-0.35px;font-family:'Liberation Sans', sans-serif;">sales volume (£)</div><div class="t" style="left:2448.7px;top:388.0px;font-size:20.3px;line-height:20.3px;color:#000;font-weight:normal;letter-spacing:-0.35px;font-family:'Liberation Sans', sans-serif;">average video views</div><div class="t" style="left:2448.7px;top:417.0px;font-size:20.3px;line-height:20.3px;color:#000;font-weight:normal;letter-spacing:0.11px;font-family:'Liberation Sans', sans-serif;">per video</div><div class="t" style="left:2634.2px;top:388.0px;font-size:20.3px;line-height:20.3px;color:#000;font-weight:normal;letter-spacing:0.28px;font-family:'Liberation Sans', sans-serif;">Creator</div><div class="t" style="left:2634.2px;top:417.0px;font-size:20.3px;line-height:20.3px;color:#000;font-weight:normal;letter-spacing:0.75px;font-family:'Liberation Sans', sans-serif;">fulfillment rate</div><div class="t" style="left:-0.5px;width:44px;text-align:center;top:416.0px;font-size:21.5px;line-height:21.5px;color:#ffffff;font-weight:normal;letter-spacing:0px;">1</div><div class="b" style="left:638px;top:592px;width:10px;height:28px;overflow:hidden;background:#fff"><div class="t"  style="left:-290.0px;width:300px;text-align:right;top:4.4px;font-size:20.8px;line-height:20.8px;color:#000;font-weight:normal;letter-spacing:0px">E</div></div><div class="b" style="left:638px;top:622px;width:10px;height:28px;overflow:hidden;background:#fff"><div class="t"  style="left:-290.0px;width:300px;text-align:right;top:4.4px;font-size:20.8px;line-height:20.8px;color:#000;font-weight:normal;letter-spacing:0px">e</div></div><div class="b" style="left:638px;top:652px;width:10px;height:28px;overflow:hidden;background:#fff"><div class="t"  style="left:-290.0px;width:300px;text-align:right;top:4.4px;font-size:20.8px;line-height:20.8px;color:#000;font-weight:normal;letter-spacing:0px">e</div></div><div class="b" style="left:638px;top:682px;width:10px;height:28px;overflow:hidden;background:#fff"><div class="t"  style="left:-290.0px;width:300px;text-align:right;top:4.4px;font-size:20.8px;line-height:20.8px;color:#000;font-weight:normal;letter-spacing:0px">rc</div></div><div class="b" style="left:638px;top:742px;width:10px;height:28px;overflow:hidden;background:#fff"><div class="t"  style="left:-290.0px;width:300px;text-align:right;top:4.4px;font-size:20.8px;line-height:20.8px;color:#000;font-weight:normal;letter-spacing:0px">a</div></div><div class="b" style="left:638px;top:772px;width:10px;height:28px;overflow:hidden;background:#fff"><div class="t"  style="left:-290.0px;width:300px;text-align:right;top:4.4px;font-size:20.8px;line-height:20.8px;color:#000;font-weight:normal;letter-spacing:0px">rc</div></div><div class="b" style="left:638px;top:862px;width:10px;height:28px;overflow:hidden;background:#fff"><div class="t"  style="left:-290.0px;width:300px;text-align:right;top:4.4px;font-size:20.8px;line-height:20.8px;color:#000;font-weight:normal;letter-spacing:0px">e</div></div><div class="b" style="left:638px;top:892px;width:10px;height:28px;overflow:hidden;background:#fff"><div class="t"  style="left:-290.0px;width:300px;text-align:right;top:4.4px;font-size:20.8px;line-height:20.8px;color:#000;font-weight:normal;letter-spacing:0px">r:2</div></div><div class="b" style="left:638px;top:922px;width:10px;height:28px;overflow:hidden;background:#fff"><div class="t"  style="left:-290.0px;width:300px;text-align:right;top:4.4px;font-size:20.8px;line-height:20.8px;color:#000;font-weight:normal;letter-spacing:0px">st</div></div><div class="b" style="left:638px;top:1072px;width:10px;height:28px;overflow:hidden;background:#fff"><div class="t"  style="left:-290.0px;width:300px;text-align:right;top:4.4px;font-size:20.8px;line-height:20.8px;color:#000;font-weight:normal;letter-spacing:0px">8</div></div><div class="b" style="left:638px;top:1102px;width:10px;height:28px;overflow:hidden;background:#fff"><div class="t"  style="left:-290.0px;width:300px;text-align:right;top:4.4px;font-size:20.8px;line-height:20.8px;color:#000;font-weight:normal;letter-spacing:0px">C</div></div><div class="b" style="left:638px;top:1132px;width:10px;height:28px;overflow:hidden;background:#fff"><div class="t"  style="left:-290.0px;width:300px;text-align:right;top:4.4px;font-size:20.8px;line-height:20.8px;color:#000;font-weight:normal;letter-spacing:0px">e)</div></div><div class="b" style="left:638px;top:1192px;width:10px;height:28px;overflow:hidden;background:#fff"><div class="t"  style="left:-290.0px;width:300px;text-align:right;top:4.4px;font-size:20.8px;line-height:20.8px;color:#000;font-weight:normal;letter-spacing:0px">:T</div></div><div class="b" style="left:0px;top:438px;width:46px;height:6px;background:#3c7550;"></div><div class="b" style="left:2px;top:1042px;width:40px;height:28px;background:#5c5c5c;"></div><div class="b" style="left:42px;top:1040px;width:4px;height:32px;background:#3c7550;"></div><div class="t" style="left:-0.5px;width:44px;text-align:center;top:1046.6px;font-size:21.5px;line-height:21.5px;color:#ffffff;font-weight:normal;letter-spacing:0px;">23</div><div class="b" style="left:2780px;top:1038px;width:64px;height:4px;background:#346e45;"></div><div class="b" style="left:2780px;top:1070px;width:64px;height:4px;background:#346e45;"></div><div class="b" style="left:2780px;top:1038px;width:4px;height:36px;background:#346e45;"></div><div class="b" style="left:0px;top:1406px;width:2844px;height:51px;background:#333333;"></div><div class="b" style="left:0px;top:1406px;width:2844px;height:2px;background:#595959;"></div><div class="b" style="left:0px;top:1457px;width:2844px;height:2px;background:#0c0c0c;"></div><svg class="s" style="left:28px;top:1422px" width="20" height="24" viewBox="0 0 20 24"><path d="M16,2 V22 L3,12 Z" fill="#5c5c5c"/></svg><svg class="s" style="left:73px;top:1422px" width="20" height="24" viewBox="0 0 20 24"><path d="M3,2 V22 L16,12 Z" fill="#5c5c5c"/></svg><div class="b" style="left:121px;top:1404px;width:157px;height:46px;border-radius:0 0 7px 7px;background:#ffffff;box-shadow:0 0 0 1.5px #595959"></div><div class="b" style="left:120px;top:1402px;width:159px;height:4px;background:#ffffff;"></div><div class="t" style="left:161.0px;top:1419.8px;font-size:23.5px;line-height:23.5px;color:#3d8656;font-weight:bold;letter-spacing:0px;font-family:'Liberation Sans', sans-serif;">Sheet1</div><div class="b" style="left:308px;top:1430px;width:20px;height:4px;background:#bdbdbd;"></div><div class="b" style="left:316px;top:1422px;width:4px;height:20px;background:#bdbdbd;"></div><div class="b" style="left:354px;top:1408px;width:2px;height:41px;background:#484848;"></div><div class="b" style="left:0px;top:1459px;width:2844px;height:45px;background:linear-gradient(#4a4a4a,#3e3e3e);"></div><div class="t" style="left:49.5px;top:1471.0px;font-size:23px;line-height:23px;color:#e6e6e6;font-weight:normal;letter-spacing:0.3px;font-family:'Liberation Sans', sans-serif;">Ready</div><svg class="s" style="left:150px;top:1460px" width="50" height="40" viewBox="0 0 50 40"><circle cx="21" cy="10.8" r="3.6" fill="none" stroke="#dedede" stroke-width="1.6"/><path d="M12.5,15 Q9,14 9,16 Q10,18 13,18 H17 V33 L14,34.5 H18 M25,18 H29 Q32,18 33,16 Q33,14 29.5,15 H12.5 M25,18 V23.5" fill="none" stroke="#dedede" stroke-width="1.6" stroke-linejoin="round"/><path d="M22,28.5 L28.5,35 L39,24.5" fill="none" stroke="#dedede" stroke-width="1.8"/></svg><div class="t" style="left:195.0px;top:1471.5px;font-size:22.5px;line-height:22.5px;color:#e6e6e6;font-weight:normal;letter-spacing:1.4px;font-family:'Liberation Sans', sans-serif;">Accessibility: Good to go</div><div class="b" style="left:2206px;top:1459px;width:74px;height:45px;background:#5a5a5a;"></div><svg class="s" style="left:2229px;top:1467px" width="28" height="28" viewBox="0 0 28 28"><rect x="1.5" y="1.5" width="25" height="25" fill="none" stroke="#fff" stroke-width="2.4"/><path d="M10,1.5 V26.5 M18,1.5 V26.5 M1.5,10 H26.5 M1.5,18 H26.5" stroke="#fff" stroke-width="2"/></svg><svg class="s" style="left:2300px;top:1467px" width="30" height="28" viewBox="0 0 30 28"><rect x="1.5" y="1.5" width="27" height="25" fill="none" stroke="#fff" stroke-width="2.4"/><rect x="7" y="6" width="16" height="16" fill="none" stroke="#fff" stroke-width="2"/><path d="M10,10 H20 M10,14 H20 M10,18 H20" stroke="#fff" stroke-width="1.6"/></svg><svg class="s" style="left:2371px;top:1467px" width="30" height="28" viewBox="0 0 30 28"><rect x="1.5" y="1.5" width="27" height="25" fill="none" stroke="#fff" stroke-width="2.4"/><path d="M1.5,13.5 H18 V1.5 M10,1.5 V13.5" fill="none" stroke="#fff" stroke-width="2"/></svg><div class="b" style="left:2437px;top:1479px;width:17px;height:4px;background:#f0f0f0;"></div><div class="b" style="left:2468px;top:1477px;width:200px;height:8px;border-radius:4px;background:#6f6f6f"></div><div class="b" style="left:2551.5px;top:1465px;width:32px;height:32px;border-radius:50%;background:#a3a3a3"></div><div class="b" style="left:2681px;top:1479px;width:17px;height:4px;background:#f0f0f0;"></div><div class="b" style="left:2687.5px;top:1472.5px;width:4.0px;height:17.0px;background:#f0f0f0;"></div><div class="t" style="left:2732.0px;top:1470.6px;font-size:23.5px;line-height:23.5px;color:#e6e6e6;font-weight:normal;letter-spacing:0.4px;font-family:'Liberation Sans', sans-serif;">100%</div></div><div id="frame"></div></body></html>
